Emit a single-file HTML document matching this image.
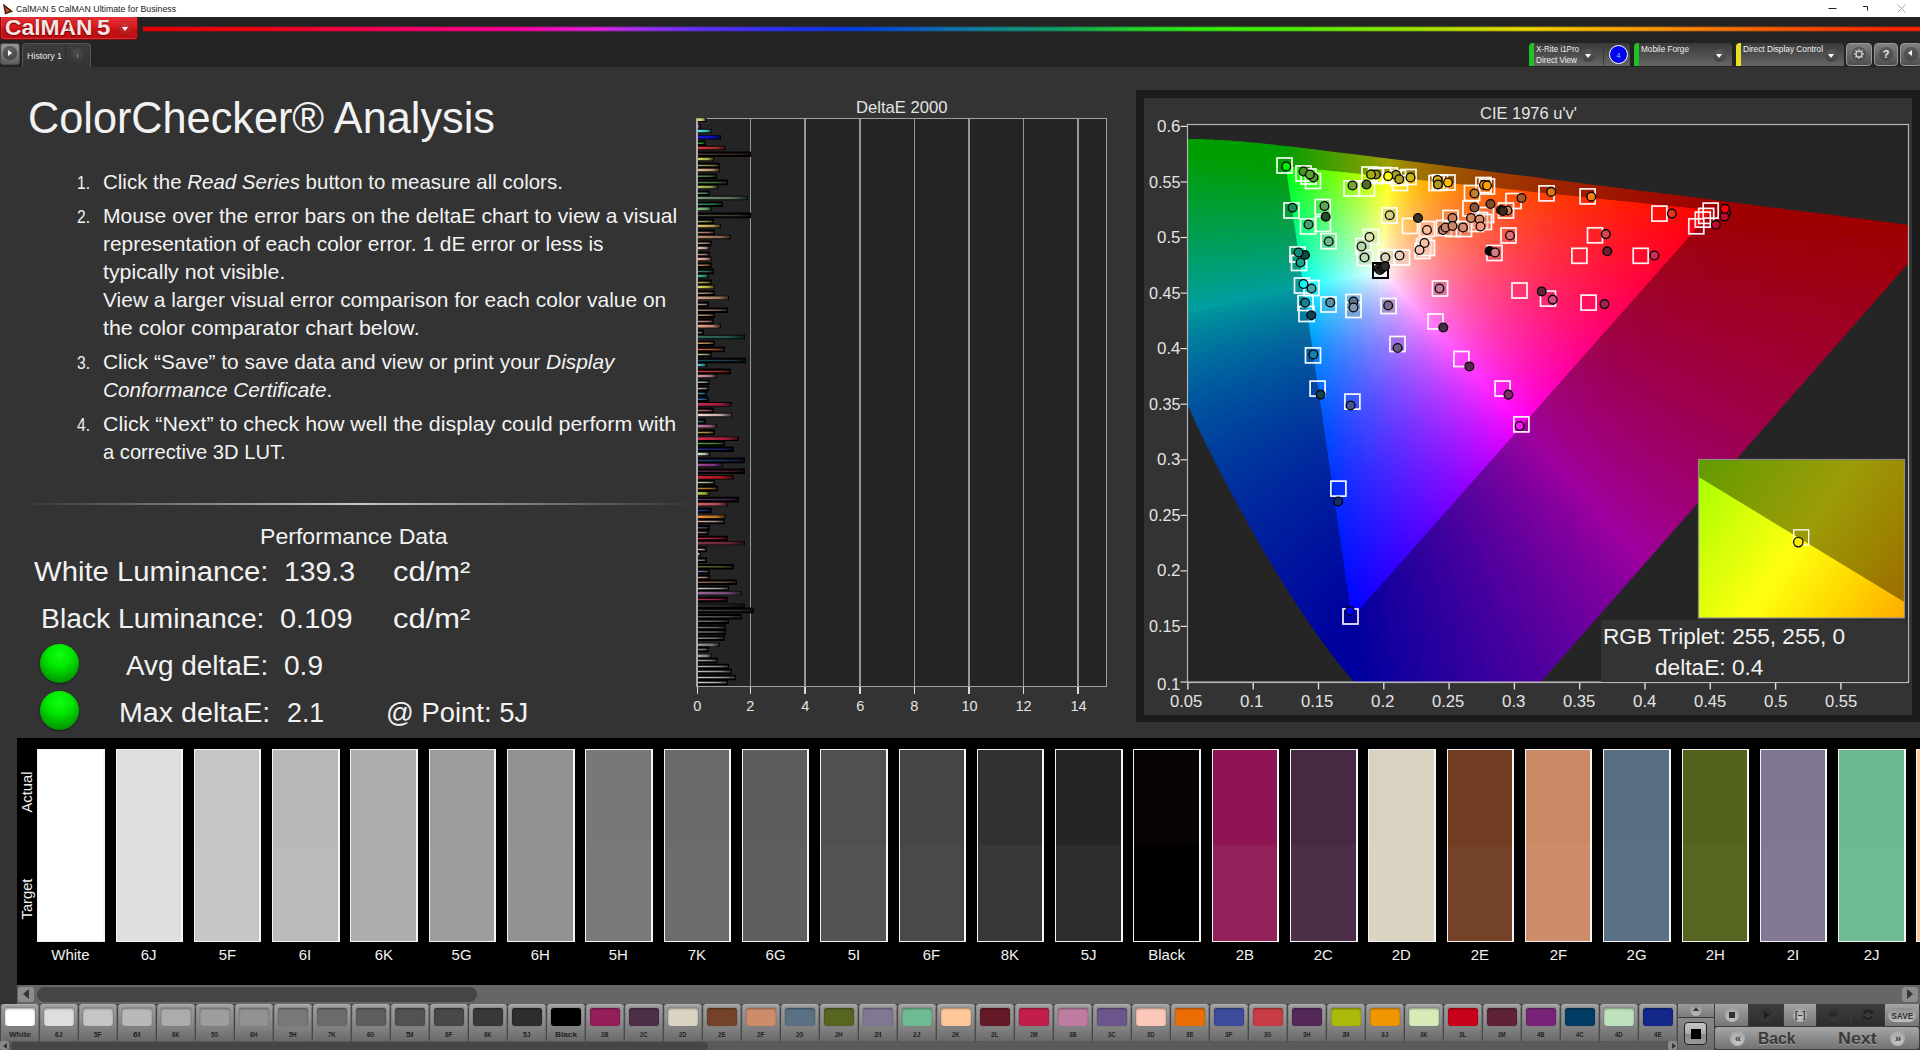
<!DOCTYPE html>
<html lang="en"><head><meta charset="utf-8"><title>CalMAN 5 CalMAN Ultimate for Business</title>
<style>
*{box-sizing:border-box;margin:0;padding:0}
html,body{width:1920px;height:1050px;overflow:hidden;background:#333;font-family:"Liberation Sans",sans-serif}
.a{position:absolute}
.t{position:absolute;white-space:nowrap;line-height:1;transform-origin:0 0}
#titlebar{left:0;top:0;width:1920px;height:17px;background:#fff}
#band{left:0;top:17px;width:1920px;height:50px;background:#232323}
#logo{left:0;top:17px;width:138px;height:23px;border-radius:0 0 4px 4px;background:linear-gradient(#e23034 0%,#da1c20 45%,#c81216 55%,#bc0e12 100%);border:1px solid #7c0a0c;border-top:none;box-shadow:inset 0 -1px 0 rgba(255,120,120,.35),inset 1px 0 0 rgba(255,120,120,.25)}
#rainbow{left:143px;top:25.5px;width:1777px;height:6px;background:linear-gradient(90deg,#f00000 0%,#f80010 6%,#ff0060 14.5%,#ff00a0 21.2%,#e020e0 25.7%,#a030f0 28%,#6030ff 31.3%,#2030f0 37%,#0040e0 40.3%,#1070b0 45.4%,#108890 48.2%,#10a060 51.6%,#20d030 55.5%,#30f010 59.5%,#48f000 64%,#90e800 70.7%,#c0e000 74.1%,#f0d800 78%,#ffb000 82%,#ff8000 87.6%,#ff5000 93.2%,#ff2000 99%)}
#rainbow:after{content:"";position:absolute;left:0;top:0;width:100%;height:100%;background:linear-gradient(#232323 0%,rgba(35,35,35,0) 30%,rgba(35,35,35,0) 70%,#232323 100%)}
.btn{position:absolute;border-radius:4px;background:linear-gradient(#4a4a4a,#6e6e6e);border:1px solid #2a2a2a}
.dev{position:absolute;top:43px;height:23px;border-radius:4px 4px 0 0;background:linear-gradient(#3a3a3a 0%,#4c4c4c 45%,#666 100%);overflow:hidden}
.dev i{position:absolute;left:0;top:0;width:5px;height:100%}
.dd{position:absolute;width:13px;height:13px;border-radius:50%;background:radial-gradient(circle at 50% 25%,#585858,#3e3e3e)}
.dd:after{content:"";position:absolute;left:3px;top:5px;border:3.5px solid transparent;border-top:4px solid #fff;border-bottom:none}
</style></head>
<body>
<div id="titlebar" class="a"></div>
<svg class="a" style="left:2px;top:3px" width="12" height="12" viewBox="0 0 12 12"><polygon points="1,0.5 11,8.5 3,11.5" fill="#4a1c10"/>
<polygon points="3,4 8,8 4,9.5" fill="#c8501c"/></svg>
<div class="t" style="left:16.0px;top:5.0px;font-size:9px;color:#222;transform:scaleX(0.9724);">CalMAN 5 CalMAN Ultimate for Business</div>
<svg class="a" style="left:1820px;top:0" width="100" height="17" viewBox="0 0 100 17"><path d="M8.5 8.5h8" stroke="#222" stroke-width="1" fill="none"/><path d="M43 6.5h4.5v4" stroke="#222" stroke-width="1" fill="none"/><path d="M77.5 4.5l8 8m0-8l-8 8" stroke="#aaa" stroke-width="1" fill="none"/></svg>
<div id="band" class="a"></div>
<div id="logo" class="a"></div>
<div class="t" style="left:4.6px;top:18.0px;font-size:21.5px;color:#f4e4e4;transform:scaleX(1.0604);text-shadow:0 1px 1px #700,0 0 2px #900"><span style="font-weight:bold;">CalMAN</span></div>
<div class="t" style="left:96.7px;top:18.0px;font-size:21.5px;color:#f4e4e4;transform:scaleX(1.1123);text-shadow:0 1px 1px #700"><span style="font-weight:bold;">5</span></div>
<div class="a" style="left:117.6px;top:20.5px;width:14px;height:14px;border-radius:50%;background:radial-gradient(circle at 50% 30%,#d83838,#a40e14)"></div>
<div class="a" style="left:121.5px;top:27px;border:3.5px solid transparent;border-top:4px solid #fff;border-bottom:none"></div>
<svg class="a" style="left:64.5px;top:21.5px" width="6" height="9" viewBox="0 0 6 9"><circle cx="3.6" cy="1" r="0.9" fill="#8a1414"/><path d="M3.4 2.2L2.6 5M3.2 2.8L1.2 3.4M3.3 2.9L5 3.8M2.6 5L4.2 6.2L3.8 8.2M2.6 5L1.6 6.6L0.4 7" fill="none" stroke="#8a1414" stroke-width="0.8" stroke-linecap="round"/></svg>
<div id="rainbow" class="a"></div>
<div class="a" style="left:0;top:43px;width:20px;height:22px;border-radius:3px;background:linear-gradient(#969696,#5c5c5c);border:1px solid #4a4a4a"></div>
<div class="a" style="left:3px;top:46px;width:14px;height:14px;border-radius:50%;background:radial-gradient(circle at 50% 30%,#666,#3a3a3a)"></div>
<div class="a" style="left:8px;top:50.2px;border:3.5px solid transparent;border-left:4.6px solid #fff;border-right:none"></div>
<div class="a" style="left:22px;top:43px;width:69px;height:24px;border-radius:4px 4px 0 0;background:linear-gradient(#3d3d3d,#333);border:1px solid #555;border-bottom:none"></div>
<div class="a" style="left:65px;top:44px;width:1px;height:22px;background:#2c2c2c"></div>
<div class="t" style="left:27.0px;top:51.0px;font-size:9.5px;color:#e8e8e8;transform:scaleX(0.9338);">History 1</div>
<div class="a" style="left:70px;top:48px;width:14px;height:14px;border-radius:50%;background:radial-gradient(circle at 50% 30%,#4e4e4e,#333)"></div>
<div class="a" style="left:76.5px;top:54px;width:1px;height:4px;background:#888"></div>
<div class="dev" style="left:1529px;width:101px"><i style="background:#22c022"></i></div>
<div class="t" style="left:1536.0px;top:45.0px;font-size:8.5px;color:#f0f0f0;transform:scaleX(0.9384);">X-Rite i1Pro</div>
<div class="t" style="left:1536.0px;top:56.0px;font-size:8.5px;color:#f0f0f0;transform:scaleX(0.9573);">Direct View</div>
<div class="dd" style="left:1582px;top:48.5px"></div>
<div class="a" style="left:1603px;top:44px;width:1px;height:22px;background:#3a3a3a"></div>
<div class="a" style="left:1609px;top:45px;width:19px;height:19px;border-radius:50%;background:#0000f0;border:1px solid #fff"></div>
<div class="t" style="left:1616.5px;top:52.0px;font-size:7px;color:#9cf;">4</div>
<div class="dev" style="left:1634px;width:98px"><i style="background:#22c022"></i></div>
<div class="t" style="left:1641.0px;top:45.0px;font-size:8.5px;color:#f0f0f0;transform:scaleX(0.9676);">Mobile Forge</div>
<div class="dd" style="left:1713px;top:48.5px"></div>
<div class="dev" style="left:1736px;width:108px"><i style="background:#e8e020"></i></div>
<div class="t" style="left:1743.0px;top:45.0px;font-size:8.5px;color:#f0f0f0;transform:scaleX(0.9733);">Direct Display Control</div>
<div class="dd" style="left:1825px;top:48.5px"></div>
<div class="a" style="left:1846px;top:43px;width:26px;height:23px;border-radius:4px;background:linear-gradient(#808080,#4e4e4e);border:1px solid #9a9a9a"></div>
<div class="a" style="left:1874px;top:43px;width:24px;height:23px;border-radius:4px;background:linear-gradient(#808080,#4e4e4e);border:1px solid #9a9a9a"></div>
<div class="a" style="left:1900px;top:43px;width:22px;height:23px;border-radius:4px;background:linear-gradient(#808080,#4e4e4e);border:1px solid #9a9a9a"></div>
<div class="a" style="left:1851.5px;top:47px;width:14px;height:14px;border-radius:50%;background:radial-gradient(circle at 50% 25%,#5c5c5c,#444)"></div>
<div class="a" style="left:1878.5px;top:47px;width:14px;height:14px;border-radius:50%;background:radial-gradient(circle at 50% 25%,#5c5c5c,#444)"></div>
<div class="a" style="left:1903.5px;top:47px;width:14px;height:14px;border-radius:50%;background:radial-gradient(circle at 50% 25%,#5c5c5c,#444)"></div>
<svg class="a" style="left:1852.5px;top:48px" width="12" height="12" viewBox="-6 -6 12 12"><circle r="3" fill="none" stroke="#d6d6d6" stroke-width="1.25"/><g stroke="#d6d6d6" stroke-width="1.3"><line x1="0" y1="-3.5" x2="0" y2="-5.1" transform="rotate(0)"/><line x1="0" y1="-3.5" x2="0" y2="-5.1" transform="rotate(45)"/><line x1="0" y1="-3.5" x2="0" y2="-5.1" transform="rotate(90)"/><line x1="0" y1="-3.5" x2="0" y2="-5.1" transform="rotate(135)"/><line x1="0" y1="-3.5" x2="0" y2="-5.1" transform="rotate(180)"/><line x1="0" y1="-3.5" x2="0" y2="-5.1" transform="rotate(225)"/><line x1="0" y1="-3.5" x2="0" y2="-5.1" transform="rotate(270)"/><line x1="0" y1="-3.5" x2="0" y2="-5.1" transform="rotate(315)"/></g></svg>
<div class="t" style="left:1882.7px;top:49.0px;font-size:11px;color:#e8e8e8;"><span style="font-weight:bold;">?</span></div>
<div class="a" style="left:1907.5px;top:50.4px;border:3.7px solid transparent;border-right:4.8px solid #f4f4f4;border-left:none"></div>
<div class="t" style="left:28.0px;top:96.0px;font-size:44.7px;color:#f2f2f2;transform:scaleX(0.9677);">ColorChecker® Analysis</div>
<div class="t" style="left:103.3px;top:172.0px;font-size:20.6px;color:#f2f2f2;transform:scaleX(0.9944);">Click the <span style="font-style:italic;">Read Series</span> button to measure all colors.</div>
<div class="t" style="left:103.3px;top:206.0px;font-size:20.6px;color:#f2f2f2;transform:scaleX(1.0237);">Mouse over the error bars on the deltaE chart to view a visual</div>
<div class="t" style="left:103.3px;top:234.0px;font-size:20.6px;color:#f2f2f2;transform:scaleX(1.0146);">representation of each color error. 1 dE error or less is</div>
<div class="t" style="left:103.3px;top:262.0px;font-size:20.6px;color:#f2f2f2;transform:scaleX(1.0345);">typically not visible.</div>
<div class="t" style="left:103.3px;top:290.0px;font-size:20.6px;color:#f2f2f2;transform:scaleX(1.0173);">View a larger visual error comparison for each color value on</div>
<div class="t" style="left:103.3px;top:318.0px;font-size:20.6px;color:#f2f2f2;transform:scaleX(1.0398);">the color comparator chart below.</div>
<div class="t" style="left:103.3px;top:352.0px;font-size:20.6px;color:#f2f2f2;transform:scaleX(1.0134);">Click “Save” to save data and view or print your <span style="font-style:italic;">Display</span></div>
<div class="t" style="left:103.3px;top:380.0px;font-size:20.6px;color:#f2f2f2;transform:scaleX(1.0068);"><span style="font-style:italic;">Conformance Certificate</span>.</div>
<div class="t" style="left:103.3px;top:414.0px;font-size:20.6px;color:#f2f2f2;transform:scaleX(1.0391);">Click “Next” to check how well the display could perform with</div>
<div class="t" style="left:103.3px;top:442.0px;font-size:20.6px;color:#f2f2f2;transform:scaleX(0.979);">a corrective 3D LUT.</div>
<div class="t" style="left:77.0px;top:175.0px;font-size:17.5px;color:#f2f2f2;transform:scaleX(0.8907);">1.</div>
<div class="t" style="left:77.0px;top:209.0px;font-size:17.5px;color:#f2f2f2;transform:scaleX(0.8907);">2.</div>
<div class="t" style="left:77.0px;top:355.0px;font-size:17.5px;color:#f2f2f2;transform:scaleX(0.8907);">3.</div>
<div class="t" style="left:77.0px;top:417.0px;font-size:17.5px;color:#f2f2f2;transform:scaleX(0.8907);">4.</div>
<div class="a" style="left:20px;top:503px;width:676px;height:2px;background:linear-gradient(90deg,rgba(140,140,140,0),rgba(150,150,150,.9) 30%,#c8c8c8 50%,rgba(150,150,150,.9) 70%,rgba(140,140,140,0))"></div>
<div class="t" style="left:259.6px;top:526.0px;font-size:22px;color:#f2f2f2;transform:scaleX(1.0502);">Performance Data</div>
<div class="t" style="left:33.5px;top:559.0px;font-size:27px;color:#f2f2f2;transform:scaleX(1.0851);">White Luminance:</div>
<div class="t" style="left:284.4px;top:559.0px;font-size:27px;color:#f2f2f2;transform:scaleX(1.0508);">139.3</div>
<div class="t" style="left:393.0px;top:559.0px;font-size:27px;color:#f2f2f2;transform:scaleX(1.1452);">cd/m²</div>
<div class="t" style="left:40.8px;top:606.0px;font-size:27px;color:#f2f2f2;transform:scaleX(1.0487);">Black Luminance:</div>
<div class="t" style="left:280.0px;top:606.0px;font-size:27px;color:#f2f2f2;transform:scaleX(1.073);">0.109</div>
<div class="t" style="left:393.0px;top:606.0px;font-size:27px;color:#f2f2f2;transform:scaleX(1.1452);">cd/m²</div>
<div class="t" style="left:125.8px;top:653.0px;font-size:27px;color:#f2f2f2;transform:scaleX(1.0334);">Avg deltaE:</div>
<div class="t" style="left:284.4px;top:653.0px;font-size:27px;color:#f2f2f2;transform:scaleX(1.039);">0.9</div>
<div class="t" style="left:119.2px;top:700.0px;font-size:27px;color:#f2f2f2;transform:scaleX(1.0612);">Max deltaE:</div>
<div class="t" style="left:287.3px;top:700.0px;font-size:27px;color:#f2f2f2;transform:scaleX(0.9911);">2.1</div>
<div class="t" style="left:386.4px;top:700.0px;font-size:27px;color:#f2f2f2;transform:scaleX(1.0159);">@ Point: 5J</div>
<div class="a" style="left:39.9px;top:643.9px;width:39px;height:39px;border-radius:50%;background:radial-gradient(circle at 50% 28%,#10ff10 0%,#00e800 35%,#00a800 70%,#007800 100%);box-shadow:0 1px 2px rgba(0,0,0,.5)"></div>
<div class="a" style="left:39.9px;top:690.9px;width:39px;height:39px;border-radius:50%;background:radial-gradient(circle at 50% 28%,#10ff10 0%,#00e800 35%,#00a800 70%,#007800 100%);box-shadow:0 1px 2px rgba(0,0,0,.5)"></div>
<div class="a" style="left:696px;top:118px;width:411px;height:569px;background:#242424;border:1px solid #a0a0a0;border-left:2px solid #ababab"></div>
<div class="a" style="left:749.95px;top:119px;width:1.5px;height:567px;background:#969696"></div>
<div class="a" style="left:804.45px;top:119px;width:1.5px;height:567px;background:#969696"></div>
<div class="a" style="left:859.25px;top:119px;width:1.5px;height:567px;background:#969696"></div>
<div class="a" style="left:913.85px;top:119px;width:1.5px;height:567px;background:#969696"></div>
<div class="a" style="left:968.45px;top:119px;width:1.5px;height:567px;background:#969696"></div>
<div class="a" style="left:1022.65px;top:119px;width:1.5px;height:567px;background:#969696"></div>
<div class="a" style="left:1077.05px;top:119px;width:1.5px;height:567px;background:#969696"></div>
<div class="a" style="left:696.75px;top:687px;width:1.5px;height:7px;background:#ddd"></div>
<div class="t" style="left:693.2px;top:698.0px;font-size:15.3px;color:#e4e4e4;transform:scaleX(.95);transform-origin:50% 0;">0</div>
<div class="a" style="left:749.95px;top:687px;width:1.5px;height:7px;background:#ddd"></div>
<div class="t" style="left:746.4px;top:698.0px;font-size:15.3px;color:#e4e4e4;transform:scaleX(.95);transform-origin:50% 0;">2</div>
<div class="a" style="left:804.45px;top:687px;width:1.5px;height:7px;background:#ddd"></div>
<div class="t" style="left:800.9px;top:698.0px;font-size:15.3px;color:#e4e4e4;transform:scaleX(.95);transform-origin:50% 0;">4</div>
<div class="a" style="left:859.25px;top:687px;width:1.5px;height:7px;background:#ddd"></div>
<div class="t" style="left:855.7px;top:698.0px;font-size:15.3px;color:#e4e4e4;transform:scaleX(.95);transform-origin:50% 0;">6</div>
<div class="a" style="left:913.85px;top:687px;width:1.5px;height:7px;background:#ddd"></div>
<div class="t" style="left:910.3px;top:698.0px;font-size:15.3px;color:#e4e4e4;transform:scaleX(.95);transform-origin:50% 0;">8</div>
<div class="a" style="left:968.45px;top:687px;width:1.5px;height:7px;background:#ddd"></div>
<div class="t" style="left:961.2px;top:698.0px;font-size:15.3px;color:#e4e4e4;transform:scaleX(.95);transform-origin:50% 0;">10</div>
<div class="a" style="left:1022.65px;top:687px;width:1.5px;height:7px;background:#ddd"></div>
<div class="t" style="left:1015.4px;top:698.0px;font-size:15.3px;color:#e4e4e4;transform:scaleX(.95);transform-origin:50% 0;">12</div>
<div class="a" style="left:1077.05px;top:687px;width:1.5px;height:7px;background:#ddd"></div>
<div class="t" style="left:1069.8px;top:698.0px;font-size:15.3px;color:#e4e4e4;transform:scaleX(.95);transform-origin:50% 0;">14</div>
<div class="t" style="left:855.8px;top:99.0px;font-size:16.2px;color:#e4e4e4;transform:scaleX(1.0262);">DeltaE 2000</div>
<svg class="a" style="left:698px;top:118px" width="70" height="568" viewBox="698 118 70 568"><defs><linearGradient id="fade" x1="0" x2="1" y1="0" y2="0"><stop offset="0" stop-color="#000" stop-opacity="0"/><stop offset=".7" stop-color="#000" stop-opacity=".25"/><stop offset="1" stop-color="#000" stop-opacity=".75"/></linearGradient>
</defs><rect x="698" y="117.5" width="8.5" height="4.4" rx="0.8" fill="#000"/><rect x="698" y="118.35" width="7.2" height="2.7" rx="0.6" fill="rgb(240,235,130)" opacity="1"/><rect x="698" y="118.25" width="7.2" height="2.9000000000000004" fill="url(#fade)"/><rect x="698" y="124.1" width="2.8" height="4.4" rx="0.8" fill="#000"/><rect x="698" y="124.95" width="1.5" height="2.7" rx="0.6" fill="rgb(200,50,200)" opacity="1"/><rect x="698" y="124.85" width="1.5" height="2.9000000000000004" fill="url(#fade)"/><rect x="698" y="128.8" width="13.8" height="4.4" rx="0.8" fill="#000"/><rect x="698" y="129.65" width="12.5" height="2.7" rx="0.6" fill="rgb(90,235,235)" opacity="1"/><rect x="698" y="129.55" width="12.5" height="2.9000000000000004" fill="url(#fade)"/><rect x="698" y="135.00" width="23.0" height="4.4" rx="0.8" fill="#000"/><rect x="698" y="135.85" width="21.7" height="2.7" rx="0.6" fill="rgb(20,20,230)" opacity="1"/><rect x="698" y="135.75" width="21.7" height="2.9000000000000004" fill="url(#fade)"/><rect x="698" y="140.5" width="7.7" height="5.6" rx="0.8" fill="#000"/><rect x="698" y="142.55" width="6.4" height="1.5" rx="0.6" fill="rgb(60,200,60)" opacity="0.85"/><rect x="698" y="142.45" width="6.4" height="1.7" fill="url(#fade)"/><rect x="698" y="145.8" width="27.9" height="4.4" rx="0.8" fill="#000"/><rect x="698" y="146.65" width="26.6" height="2.7" rx="0.6" fill="rgb(210,60,60)" opacity="1"/><rect x="698" y="146.55" width="26.6" height="2.9000000000000004" fill="url(#fade)"/><rect x="698" y="151.5" width="53.0" height="5.6" rx="0.8" fill="#000"/><rect x="698" y="153.55" width="51.7" height="1.5" rx="0.6" fill="rgb(90,60,50)" opacity="0.85"/><rect x="698" y="153.45" width="51.7" height="1.7" fill="url(#fade)"/><rect x="698" y="156.8" width="15.9" height="4.4" rx="0.8" fill="#000"/><rect x="698" y="157.65" width="14.6" height="2.7" rx="0.6" fill="rgb(215,215,90)" opacity="1"/><rect x="698" y="157.55" width="14.6" height="2.9000000000000004" fill="url(#fade)"/><rect x="698" y="162.6" width="21.8" height="5.6" rx="0.8" fill="#000"/><rect x="698" y="164.65" width="20.5" height="1.5" rx="0.6" fill="rgb(200,180,110)" opacity="0.85"/><rect x="698" y="164.55" width="20.5" height="1.7" fill="url(#fade)"/><rect x="698" y="167.8" width="21.8" height="4.4" rx="0.8" fill="#000"/><rect x="698" y="168.65" width="20.5" height="2.7" rx="0.6" fill="rgb(235,190,150)" opacity="1"/><rect x="698" y="168.55" width="20.5" height="2.9000000000000004" fill="url(#fade)"/><rect x="698" y="173.5" width="18.9" height="5.6" rx="0.8" fill="#000"/><rect x="698" y="175.55" width="17.6" height="1.5" rx="0.6" fill="rgb(100,170,90)" opacity="0.85"/><rect x="698" y="175.45" width="17.6" height="1.7" fill="url(#fade)"/><rect x="698" y="179.6" width="30.0" height="5.6" rx="0.8" fill="#000"/><rect x="698" y="181.65" width="28.7" height="1.5" rx="0.6" fill="rgb(90,160,80)" opacity="0.85"/><rect x="698" y="181.55" width="28.7" height="1.7" fill="url(#fade)"/><rect x="698" y="184.8" width="19.9" height="4.4" rx="0.8" fill="#000"/><rect x="698" y="185.65" width="18.6" height="2.7" rx="0.6" fill="rgb(180,200,100)" opacity="1"/><rect x="698" y="185.55" width="18.6" height="2.9000000000000004" fill="url(#fade)"/><rect x="698" y="190.5" width="11.9" height="5.6" rx="0.8" fill="#000"/><rect x="698" y="192.55" width="10.6" height="1.5" rx="0.6" fill="rgb(110,190,150)" opacity="0.85"/><rect x="698" y="192.45" width="10.6" height="1.7" fill="url(#fade)"/><rect x="698" y="195.8" width="49.8" height="4.4" rx="0.8" fill="#000"/><rect x="698" y="196.65" width="48.5" height="2.7" rx="0.6" fill="rgb(120,150,120)" opacity="1"/><rect x="698" y="196.55" width="48.5" height="2.9000000000000004" fill="url(#fade)"/><rect x="698" y="201.5" width="24.9" height="5.6" rx="0.8" fill="#000"/><rect x="698" y="203.55" width="23.6" height="1.5" rx="0.6" fill="rgb(60,170,110)" opacity="0.85"/><rect x="698" y="203.45" width="23.6" height="1.7" fill="url(#fade)"/><rect x="698" y="206.7" width="13.8" height="4.4" rx="0.8" fill="#000"/><rect x="698" y="207.55" width="12.5" height="2.7" rx="0.6" fill="rgb(130,200,140)" opacity="1"/><rect x="698" y="207.45" width="12.5" height="2.9000000000000004" fill="url(#fade)"/><rect x="698" y="212.6" width="53.0" height="5.6" rx="0.8" fill="#000"/><rect x="698" y="214.65" width="51.7" height="1.5" rx="0.6" fill="rgb(100,90,75)" opacity="0.85"/><rect x="698" y="214.55" width="51.7" height="1.7" fill="url(#fade)"/><rect x="698" y="218.6" width="15.9" height="5.6" rx="0.8" fill="#000"/><rect x="698" y="220.65" width="14.6" height="1.5" rx="0.6" fill="rgb(210,200,100)" opacity="0.85"/><rect x="698" y="220.55" width="14.6" height="1.7" fill="url(#fade)"/><rect x="698" y="223.8" width="22.8" height="4.4" rx="0.8" fill="#000"/><rect x="698" y="224.65" width="21.5" height="2.7" rx="0.6" fill="rgb(230,200,110)" opacity="1"/><rect x="698" y="224.55" width="21.5" height="2.9000000000000004" fill="url(#fade)"/><rect x="698" y="229.6" width="16.9" height="5.6" rx="0.8" fill="#000"/><rect x="698" y="231.65" width="15.6" height="1.5" rx="0.6" fill="rgb(230,160,140)" opacity="0.85"/><rect x="698" y="231.55" width="15.6" height="1.7" fill="url(#fade)"/><rect x="698" y="234.8" width="32.9" height="4.4" rx="0.8" fill="#000"/><rect x="698" y="235.65" width="31.6" height="2.7" rx="0.6" fill="rgb(190,140,110)" opacity="1"/><rect x="698" y="235.55" width="31.6" height="2.9000000000000004" fill="url(#fade)"/><rect x="698" y="240.5" width="13.8" height="5.6" rx="0.8" fill="#000"/><rect x="698" y="242.55" width="12.5" height="1.5" rx="0.6" fill="rgb(240,190,170)" opacity="0.85"/><rect x="698" y="242.45" width="12.5" height="1.7" fill="url(#fade)"/><rect x="698" y="245.8" width="11.7" height="4.4" rx="0.8" fill="#000"/><rect x="698" y="246.65" width="10.4" height="2.7" rx="0.6" fill="rgb(235,200,190)" opacity="1"/><rect x="698" y="246.55" width="10.4" height="2.9000000000000004" fill="url(#fade)"/><rect x="698" y="251.6" width="11.7" height="5.6" rx="0.8" fill="#000"/><rect x="698" y="253.65" width="10.4" height="1.5" rx="0.6" fill="rgb(230,180,165)" opacity="0.85"/><rect x="698" y="253.55" width="10.4" height="1.7" fill="url(#fade)"/><rect x="698" y="256.8" width="13.8" height="4.4" rx="0.8" fill="#000"/><rect x="698" y="257.65" width="12.5" height="2.7" rx="0.6" fill="rgb(250,180,160)" opacity="1"/><rect x="698" y="257.55" width="12.5" height="2.9000000000000004" fill="url(#fade)"/><rect x="698" y="262.5" width="13.8" height="5.6" rx="0.8" fill="#000"/><rect x="698" y="264.55" width="12.5" height="1.5" rx="0.6" fill="rgb(220,150,110)" opacity="0.85"/><rect x="698" y="264.45" width="12.5" height="1.7" fill="url(#fade)"/><rect x="698" y="268.6" width="15.9" height="5.6" rx="0.8" fill="#000"/><rect x="698" y="270.65" width="14.6" height="1.5" rx="0.6" fill="rgb(60,160,130)" opacity="0.85"/><rect x="698" y="270.55" width="14.6" height="1.7" fill="url(#fade)"/><rect x="698" y="273.8" width="10.8" height="4.4" rx="0.8" fill="#000"/><rect x="698" y="274.65" width="9.5" height="2.7" rx="0.6" fill="rgb(70,180,160)" opacity="1"/><rect x="698" y="274.55" width="9.5" height="2.9000000000000004" fill="url(#fade)"/><rect x="698" y="279.6" width="13.8" height="5.6" rx="0.8" fill="#000"/><rect x="698" y="281.65" width="12.5" height="1.5" rx="0.6" fill="rgb(240,200,100)" opacity="0.85"/><rect x="698" y="281.55" width="12.5" height="1.7" fill="url(#fade)"/><rect x="698" y="284.8" width="16.9" height="4.4" rx="0.8" fill="#000"/><rect x="698" y="285.65" width="15.6" height="2.7" rx="0.6" fill="rgb(230,215,80)" opacity="1"/><rect x="698" y="285.55" width="15.6" height="2.9000000000000004" fill="url(#fade)"/><rect x="698" y="290.5" width="16.9" height="5.6" rx="0.8" fill="#000"/><rect x="698" y="292.55" width="15.6" height="1.5" rx="0.6" fill="rgb(230,170,150)" opacity="0.85"/><rect x="698" y="292.45" width="15.6" height="1.7" fill="url(#fade)"/><rect x="698" y="295.7" width="31.0" height="4.4" rx="0.8" fill="#000"/><rect x="698" y="296.55" width="29.7" height="2.7" rx="0.6" fill="rgb(210,160,130)" opacity="1"/><rect x="698" y="296.45" width="29.7" height="2.9000000000000004" fill="url(#fade)"/><rect x="698" y="301.6" width="10.9" height="5.6" rx="0.8" fill="#000"/><rect x="698" y="303.65" width="9.6" height="1.5" rx="0.6" fill="rgb(230,180,170)" opacity="0.85"/><rect x="698" y="303.55" width="9.6" height="1.7" fill="url(#fade)"/><rect x="698" y="307.5" width="30.0" height="5.6" rx="0.8" fill="#000"/><rect x="698" y="309.55" width="28.7" height="1.5" rx="0.6" fill="rgb(200,150,120)" opacity="0.85"/><rect x="698" y="309.45" width="28.7" height="1.7" fill="url(#fade)"/><rect x="698" y="312.4" width="16.9" height="5.6" rx="0.8" fill="#000"/><rect x="698" y="314.45" width="15.6" height="1.5" rx="0.6" fill="rgb(220,170,130)" opacity="0.85"/><rect x="698" y="314.35" width="15.6" height="1.7" fill="url(#fade)"/><rect x="698" y="318.6" width="15.9" height="5.6" rx="0.8" fill="#000"/><rect x="698" y="320.65" width="14.6" height="1.5" rx="0.6" fill="rgb(240,180,165)" opacity="0.85"/><rect x="698" y="320.55" width="14.6" height="1.7" fill="url(#fade)"/><rect x="698" y="323.9" width="22.8" height="4.4" rx="0.8" fill="#000"/><rect x="698" y="324.75" width="21.5" height="2.7" rx="0.6" fill="rgb(240,170,140)" opacity="1"/><rect x="698" y="324.65" width="21.5" height="2.9000000000000004" fill="url(#fade)"/><rect x="698" y="329.6" width="5.8" height="5.6" rx="0.8" fill="#000"/><rect x="698" y="331.65" width="4.5" height="1.5" rx="0.6" fill="rgb(130,150,200)" opacity="0.85"/><rect x="698" y="331.55" width="4.5" height="1.7" fill="url(#fade)"/><rect x="698" y="334.8" width="47.0" height="4.4" rx="0.8" fill="#000"/><rect x="698" y="335.65" width="45.7" height="2.7" rx="0.6" fill="rgb(50,110,100)" opacity="1"/><rect x="698" y="335.55" width="45.7" height="2.9000000000000004" fill="url(#fade)"/><rect x="698" y="340.5" width="16.9" height="5.6" rx="0.8" fill="#000"/><rect x="698" y="342.55" width="15.6" height="1.5" rx="0.6" fill="rgb(240,180,110)" opacity="0.85"/><rect x="698" y="342.45" width="15.6" height="1.7" fill="url(#fade)"/><rect x="698" y="346.6" width="26.9" height="5.6" rx="0.8" fill="#000"/><rect x="698" y="348.65" width="25.6" height="1.5" rx="0.6" fill="rgb(240,120,80)" opacity="0.85"/><rect x="698" y="348.55" width="25.6" height="1.7" fill="url(#fade)"/><rect x="698" y="351.6" width="13.8" height="5.6" rx="0.8" fill="#000"/><rect x="698" y="353.65" width="12.5" height="1.5" rx="0.6" fill="rgb(230,230,160)" opacity="0.85"/><rect x="698" y="353.55" width="12.5" height="1.7" fill="url(#fade)"/><rect x="698" y="357.7" width="47.9" height="5.6" rx="0.8" fill="#000"/><rect x="698" y="359.75" width="46.6" height="1.5" rx="0.6" fill="rgb(40,90,110)" opacity="0.85"/><rect x="698" y="359.65" width="46.6" height="1.7" fill="url(#fade)"/><rect x="698" y="362.8" width="8.9" height="4.4" rx="0.8" fill="#000"/><rect x="698" y="363.65" width="7.6" height="2.7" rx="0.6" fill="rgb(80,190,210)" opacity="1"/><rect x="698" y="363.55" width="7.6" height="2.9000000000000004" fill="url(#fade)"/><rect x="698" y="368.6" width="32.9" height="5.6" rx="0.8" fill="#000"/><rect x="698" y="370.65" width="31.6" height="1.5" rx="0.6" fill="rgb(230,70,70)" opacity="0.85"/><rect x="698" y="370.55" width="31.6" height="1.7" fill="url(#fade)"/><rect x="698" y="373.8" width="18.8" height="4.4" rx="0.8" fill="#000"/><rect x="698" y="374.65" width="17.5" height="2.7" rx="0.6" fill="rgb(220,160,160)" opacity="1"/><rect x="698" y="374.55" width="17.5" height="2.9000000000000004" fill="url(#fade)"/><rect x="698" y="379.5" width="11.9" height="5.6" rx="0.8" fill="#000"/><rect x="698" y="381.55" width="10.6" height="1.5" rx="0.6" fill="rgb(200,220,210)" opacity="0.85"/><rect x="698" y="381.45" width="10.6" height="1.7" fill="url(#fade)"/><rect x="698" y="385.7" width="10.9" height="5.6" rx="0.8" fill="#000"/><rect x="698" y="387.75" width="9.6" height="1.5" rx="0.6" fill="rgb(240,200,180)" opacity="0.85"/><rect x="698" y="387.65" width="9.6" height="1.7" fill="url(#fade)"/><rect x="698" y="390.6" width="8.9" height="5.6" rx="0.8" fill="#000"/><rect x="698" y="392.65" width="7.6" height="1.5" rx="0.6" fill="rgb(90,160,200)" opacity="0.85"/><rect x="698" y="392.55" width="7.6" height="1.7" fill="url(#fade)"/><rect x="698" y="396.5" width="10.8" height="5.6" rx="0.8" fill="#000"/><rect x="698" y="398.55" width="9.5" height="1.5" rx="0.6" fill="rgb(50,130,200)" opacity="0.85"/><rect x="698" y="398.45" width="9.5" height="1.7" fill="url(#fade)"/><rect x="698" y="402.1" width="33.8" height="4.4" rx="0.8" fill="#000"/><rect x="698" y="402.95" width="32.5" height="2.7" rx="0.6" fill="rgb(200,40,80)" opacity="1"/><rect x="698" y="402.85" width="32.5" height="2.9000000000000004" fill="url(#fade)"/><rect x="698" y="407.6" width="15.9" height="5.6" rx="0.8" fill="#000"/><rect x="698" y="409.65" width="14.6" height="1.5" rx="0.6" fill="rgb(220,130,140)" opacity="0.85"/><rect x="698" y="409.55" width="14.6" height="1.7" fill="url(#fade)"/><rect x="698" y="412.8" width="33.8" height="4.4" rx="0.8" fill="#000"/><rect x="698" y="413.65" width="32.5" height="2.7" rx="0.6" fill="rgb(250,220,215)" opacity="1"/><rect x="698" y="413.55" width="32.5" height="2.9000000000000004" fill="url(#fade)"/><rect x="698" y="418.6" width="7.7" height="5.6" rx="0.8" fill="#000"/><rect x="698" y="420.65" width="6.4" height="1.5" rx="0.6" fill="rgb(50,140,160)" opacity="0.85"/><rect x="698" y="420.55" width="6.4" height="1.7" fill="url(#fade)"/><rect x="698" y="423.9" width="18.8" height="4.4" rx="0.8" fill="#000"/><rect x="698" y="424.75" width="17.5" height="2.7" rx="0.6" fill="rgb(200,120,160)" opacity="1"/><rect x="698" y="424.65" width="17.5" height="2.9000000000000004" fill="url(#fade)"/><rect x="698" y="429.6" width="16.9" height="5.6" rx="0.8" fill="#000"/><rect x="698" y="431.65" width="15.6" height="1.5" rx="0.6" fill="rgb(240,190,90)" opacity="0.85"/><rect x="698" y="431.55" width="15.6" height="1.7" fill="url(#fade)"/><rect x="698" y="436.5" width="40.9" height="4.4" rx="0.8" fill="#000"/><rect x="698" y="437.35" width="39.6" height="2.7" rx="0.6" fill="rgb(210,40,70)" opacity="1"/><rect x="698" y="437.25" width="39.6" height="2.9000000000000004" fill="url(#fade)"/><rect x="698" y="440.6" width="26.9" height="5.6" rx="0.8" fill="#000"/><rect x="698" y="442.65" width="25.6" height="1.5" rx="0.6" fill="rgb(110,180,90)" opacity="0.85"/><rect x="698" y="442.55" width="25.6" height="1.7" fill="url(#fade)"/><rect x="698" y="446.5" width="35.9" height="5.6" rx="0.8" fill="#000"/><rect x="698" y="448.55" width="34.6" height="1.5" rx="0.6" fill="rgb(40,50,150)" opacity="0.85"/><rect x="698" y="448.45" width="34.6" height="1.7" fill="url(#fade)"/><rect x="698" y="451.8" width="11.9" height="4.4" rx="0.8" fill="#000"/><rect x="698" y="452.65" width="10.6" height="2.7" rx="0.6" fill="rgb(220,240,220)" opacity="1"/><rect x="698" y="452.55" width="10.6" height="2.9000000000000004" fill="url(#fade)"/><rect x="698" y="457.6" width="47.0" height="5.6" rx="0.8" fill="#000"/><rect x="698" y="459.65" width="45.7" height="1.5" rx="0.6" fill="rgb(40,80,140)" opacity="0.85"/><rect x="698" y="459.55" width="45.7" height="1.7" fill="url(#fade)"/><rect x="698" y="462.8" width="24.9" height="4.4" rx="0.8" fill="#000"/><rect x="698" y="463.65" width="23.6" height="2.7" rx="0.6" fill="rgb(160,70,160)" opacity="1"/><rect x="698" y="463.55" width="23.6" height="2.9000000000000004" fill="url(#fade)"/><rect x="698" y="468.5" width="47.0" height="5.6" rx="0.8" fill="#000"/><rect x="698" y="470.55" width="45.7" height="1.5" rx="0.6" fill="rgb(100,40,70)" opacity="0.85"/><rect x="698" y="470.45" width="45.7" height="1.7" fill="url(#fade)"/><rect x="698" y="475.2" width="35.9" height="4.4" rx="0.8" fill="#000"/><rect x="698" y="476.05" width="34.6" height="2.7" rx="0.6" fill="rgb(210,30,40)" opacity="1"/><rect x="698" y="475.95" width="34.6" height="2.9000000000000004" fill="url(#fade)"/><rect x="698" y="479.7" width="16.9" height="5.6" rx="0.8" fill="#000"/><rect x="698" y="481.75" width="15.6" height="1.5" rx="0.6" fill="rgb(230,240,200)" opacity="0.85"/><rect x="698" y="481.65" width="15.6" height="1.7" fill="url(#fade)"/><rect x="698" y="485.6" width="19.9" height="5.6" rx="0.8" fill="#000"/><rect x="698" y="487.65" width="18.6" height="1.5" rx="0.6" fill="rgb(240,150,70)" opacity="0.85"/><rect x="698" y="487.55" width="18.6" height="1.7" fill="url(#fade)"/><rect x="698" y="491.2" width="11.9" height="4.4" rx="0.8" fill="#000"/><rect x="698" y="492.05" width="10.6" height="2.7" rx="0.6" fill="rgb(180,210,60)" opacity="1"/><rect x="698" y="491.95" width="10.6" height="2.9000000000000004" fill="url(#fade)"/><rect x="698" y="496.8" width="40.9" height="5.6" rx="0.8" fill="#000"/><rect x="698" y="498.85" width="39.6" height="1.5" rx="0.6" fill="rgb(110,60,120)" opacity="0.85"/><rect x="698" y="498.75" width="39.6" height="1.7" fill="url(#fade)"/><rect x="698" y="501.9" width="29.8" height="4.4" rx="0.8" fill="#000"/><rect x="698" y="502.75" width="28.5" height="2.7" rx="0.6" fill="rgb(220,100,110)" opacity="1"/><rect x="698" y="502.65" width="28.5" height="2.9000000000000004" fill="url(#fade)"/><rect x="698" y="507.7" width="13.8" height="5.6" rx="0.8" fill="#000"/><rect x="698" y="509.75" width="12.5" height="1.5" rx="0.6" fill="rgb(50,70,150)" opacity="0.85"/><rect x="698" y="509.65" width="12.5" height="1.7" fill="url(#fade)"/><rect x="698" y="514.7" width="27.9" height="4.4" rx="0.8" fill="#000"/><rect x="698" y="515.55" width="26.6" height="2.7" rx="0.6" fill="rgb(240,150,50)" opacity="1"/><rect x="698" y="515.45" width="26.6" height="2.9000000000000004" fill="url(#fade)"/><rect x="698" y="518.6" width="26.9" height="5.6" rx="0.8" fill="#000"/><rect x="698" y="520.65" width="25.6" height="1.5" rx="0.6" fill="rgb(250,210,200)" opacity="0.85"/><rect x="698" y="520.55" width="25.6" height="1.7" fill="url(#fade)"/><rect x="698" y="524.9" width="11.9" height="5.6" rx="0.8" fill="#000"/><rect x="698" y="526.95" width="10.6" height="1.5" rx="0.6" fill="rgb(100,90,140)" opacity="0.85"/><rect x="698" y="526.85" width="10.6" height="1.7" fill="url(#fade)"/><rect x="698" y="529.7" width="10.9" height="5.6" rx="0.8" fill="#000"/><rect x="698" y="531.75" width="9.6" height="1.5" rx="0.6" fill="rgb(190,140,160)" opacity="0.85"/><rect x="698" y="531.65" width="9.6" height="1.7" fill="url(#fade)"/><rect x="698" y="535.8" width="29.8" height="5.6" rx="0.8" fill="#000"/><rect x="698" y="537.85" width="28.5" height="1.5" rx="0.6" fill="rgb(220,50,80)" opacity="0.85"/><rect x="698" y="537.75" width="28.5" height="1.7" fill="url(#fade)"/><rect x="698" y="540.9" width="47.0" height="4.4" rx="0.8" fill="#000"/><rect x="698" y="541.75" width="45.7" height="2.7" rx="0.6" fill="rgb(130,50,70)" opacity="1"/><rect x="698" y="541.65" width="45.7" height="2.9000000000000004" fill="url(#fade)"/><rect x="698" y="546.6" width="8.9" height="5.6" rx="0.8" fill="#000"/><rect x="698" y="548.65" width="7.6" height="1.5" rx="0.6" fill="rgb(250,210,190)" opacity="0.85"/><rect x="698" y="548.55" width="7.6" height="1.7" fill="url(#fade)"/><rect x="698" y="551.8" width="2.8" height="4.4" rx="0.8" fill="#000"/><rect x="698" y="552.65" width="1.5" height="2.7" rx="0.6" fill="rgb(180,230,210)" opacity="1"/><rect x="698" y="552.55" width="1.5" height="2.9000000000000004" fill="url(#fade)"/><rect x="698" y="557.5" width="8.9" height="5.6" rx="0.8" fill="#000"/><rect x="698" y="559.55" width="7.6" height="1.5" rx="0.6" fill="rgb(160,150,180)" opacity="0.85"/><rect x="698" y="559.45" width="7.6" height="1.7" fill="url(#fade)"/><rect x="698" y="563.9" width="35.9" height="5.6" rx="0.8" fill="#000"/><rect x="698" y="565.95" width="34.6" height="1.5" rx="0.6" fill="rgb(110,130,60)" opacity="0.85"/><rect x="698" y="565.85" width="34.6" height="1.7" fill="url(#fade)"/><rect x="698" y="568.6" width="11.9" height="5.6" rx="0.8" fill="#000"/><rect x="698" y="570.65" width="10.6" height="1.5" rx="0.6" fill="rgb(120,150,190)" opacity="0.85"/><rect x="698" y="570.55" width="10.6" height="1.7" fill="url(#fade)"/><rect x="698" y="574.7" width="11.9" height="5.6" rx="0.8" fill="#000"/><rect x="698" y="576.75" width="10.6" height="1.5" rx="0.6" fill="rgb(240,180,150)" opacity="0.85"/><rect x="698" y="576.65" width="10.6" height="1.7" fill="url(#fade)"/><rect x="698" y="579.4" width="39.0" height="5.6" rx="0.8" fill="#000"/><rect x="698" y="581.45" width="37.7" height="1.5" rx="0.6" fill="rgb(170,110,90)" opacity="0.85"/><rect x="698" y="581.35" width="37.7" height="1.7" fill="url(#fade)"/><rect x="698" y="585.8" width="31.0" height="5.6" rx="0.8" fill="#000"/><rect x="698" y="587.85" width="29.7" height="1.5" rx="0.6" fill="rgb(240,240,230)" opacity="0.85"/><rect x="698" y="587.75" width="29.7" height="1.7" fill="url(#fade)"/><rect x="698" y="590.9" width="43.9" height="4.4" rx="0.8" fill="#000"/><rect x="698" y="591.75" width="42.6" height="2.7" rx="0.6" fill="rgb(150,100,150)" opacity="1"/><rect x="698" y="591.65" width="42.6" height="2.9000000000000004" fill="url(#fade)"/><rect x="698" y="596.7" width="30.0" height="5.6" rx="0.8" fill="#000"/><rect x="698" y="598.75" width="28.7" height="1.5" rx="0.6" fill="rgb(210,50,110)" opacity="0.85"/><rect x="698" y="598.65" width="28.7" height="1.7" fill="url(#fade)"/><rect x="698" y="603.5" width="47.0" height="4.4" rx="0.8" fill="#000"/><rect x="698" y="604.35" width="45.7" height="2.7" rx="0.6" fill="rgb(40,40,40)" opacity="1"/><rect x="698" y="604.25" width="45.7" height="2.9000000000000004" fill="url(#fade)"/><rect x="698" y="607.6" width="55.9" height="5.6" rx="0.8" fill="#000"/><rect x="698" y="609.65" width="54.6" height="1.5" rx="0.6" fill="rgb(80,80,80)" opacity="0.85"/><rect x="698" y="609.55" width="54.6" height="1.7" fill="url(#fade)"/><rect x="698" y="614.00" width="43.9" height="5.6" rx="0.8" fill="#000"/><rect x="698" y="616.05" width="42.6" height="1.5" rx="0.6" fill="rgb(110,110,110)" opacity="0.85"/><rect x="698" y="615.95" width="42.6" height="1.7" fill="url(#fade)"/><rect x="698" y="618.5" width="31.0" height="5.6" rx="0.8" fill="#000"/><rect x="698" y="620.55" width="29.7" height="1.5" rx="0.6" fill="rgb(130,130,130)" opacity="0.85"/><rect x="698" y="620.45" width="29.7" height="1.7" fill="url(#fade)"/><rect x="698" y="624.6" width="27.9" height="5.6" rx="0.8" fill="#000"/><rect x="698" y="626.65" width="26.6" height="1.5" rx="0.6" fill="rgb(140,140,140)" opacity="0.85"/><rect x="698" y="626.55" width="26.6" height="1.7" fill="url(#fade)"/><rect x="698" y="629.2" width="27.9" height="5.6" rx="0.8" fill="#000"/><rect x="698" y="631.25" width="26.6" height="1.5" rx="0.6" fill="rgb(140,140,140)" opacity="0.85"/><rect x="698" y="631.15" width="26.6" height="1.7" fill="url(#fade)"/><rect x="698" y="635.5" width="26.9" height="5.6" rx="0.8" fill="#000"/><rect x="698" y="637.55" width="25.6" height="1.5" rx="0.6" fill="rgb(160,160,160)" opacity="0.85"/><rect x="698" y="637.45" width="25.6" height="1.7" fill="url(#fade)"/><rect x="698" y="642.7" width="21.8" height="4.4" rx="0.8" fill="#000"/><rect x="698" y="643.55" width="20.5" height="2.7" rx="0.6" fill="rgb(150,150,150)" opacity="1"/><rect x="698" y="643.45" width="20.5" height="2.9000000000000004" fill="url(#fade)"/><rect x="698" y="646.6" width="10.9" height="5.6" rx="0.8" fill="#000"/><rect x="698" y="648.65" width="9.6" height="1.5" rx="0.6" fill="rgb(170,170,170)" opacity="0.85"/><rect x="698" y="648.55" width="9.6" height="1.7" fill="url(#fade)"/><rect x="698" y="653.7" width="13.8" height="4.4" rx="0.8" fill="#000"/><rect x="698" y="654.55" width="12.5" height="2.7" rx="0.6" fill="rgb(170,170,170)" opacity="1"/><rect x="698" y="654.45" width="12.5" height="2.9000000000000004" fill="url(#fade)"/><rect x="698" y="657.7" width="19.9" height="5.6" rx="0.8" fill="#000"/><rect x="698" y="659.75" width="18.6" height="1.5" rx="0.6" fill="rgb(200,200,200)" opacity="0.85"/><rect x="698" y="659.65" width="18.6" height="1.7" fill="url(#fade)"/><rect x="698" y="663.8" width="31.0" height="5.6" rx="0.8" fill="#000"/><rect x="698" y="665.85" width="29.7" height="1.5" rx="0.6" fill="rgb(210,210,210)" opacity="0.85"/><rect x="698" y="665.75" width="29.7" height="1.7" fill="url(#fade)"/><rect x="698" y="668.7" width="33.8" height="5.6" rx="0.8" fill="#000"/><rect x="698" y="670.75" width="32.5" height="1.5" rx="0.6" fill="rgb(225,225,225)" opacity="0.85"/><rect x="698" y="670.65" width="32.5" height="1.7" fill="url(#fade)"/><rect x="698" y="674.7" width="38.0" height="5.6" rx="0.8" fill="#000"/><rect x="698" y="676.75" width="36.7" height="1.5" rx="0.6" fill="rgb(235,235,235)" opacity="0.85"/><rect x="698" y="676.65" width="36.7" height="1.7" fill="url(#fade)"/><rect x="698" y="679.6" width="29.8" height="5.6" rx="0.8" fill="#000"/><rect x="698" y="681.65" width="28.5" height="1.5" rx="0.6" fill="rgb(250,250,250)" opacity="0.85"/><rect x="698" y="681.55" width="28.5" height="1.7" fill="url(#fade)"/></svg>
<div class="a" style="left:1136px;top:90px;width:784px;height:632px;background:#1b1b1b"></div>
<div class="a" style="left:1144px;top:98px;width:768px;height:617px;background:#333"></div>
<div class="t" style="left:1479.5px;top:105.0px;font-size:16.2px;color:#e4e4e4;transform:scaleX(1.0174);">CIE 1976 u'v'</div>
<svg class="a" style="left:1140px;top:110px" width="780" height="610" viewBox="1140 110 780 610"><defs><linearGradient id="cb0" gradientUnits="userSpaceOnUse" x1="1381.2" y1="271.3" x2="1654.3" y2="276.1"><stop offset="0" stop-color="#ffffff"/><stop offset="0.1" stop-color="#ffb4c2"/><stop offset="0.22" stop-color="#ff7e96"/><stop offset="0.4" stop-color="#ff4d6e"/><stop offset="0.6" stop-color="#ff2c54"/><stop offset="0.8" stop-color="#ff1443"/><stop offset="1" stop-color="#ff0037"/></linearGradient>
<linearGradient id="cd0" gradientUnits="userSpaceOnUse" x1="1631.5" y1="275.7" x2="1904.1" y2="280.4"><stop offset="0" stop-color="#9e0525"/><stop offset="0.25" stop-color="#9e001d"/><stop offset="0.5" stop-color="#9e0018"/><stop offset="0.75" stop-color="#9e0013"/><stop offset="1" stop-color="#9e0010"/></linearGradient>
<linearGradient id="cb1" gradientUnits="userSpaceOnUse" x1="1381.2" y1="271.3" x2="1646.2" y2="285.2"><stop offset="0" stop-color="#ffffff"/><stop offset="0.1" stop-color="#ffb6c5"/><stop offset="0.22" stop-color="#ff809b"/><stop offset="0.4" stop-color="#ff4f75"/><stop offset="0.6" stop-color="#ff2d5c"/><stop offset="0.8" stop-color="#ff154b"/><stop offset="1" stop-color="#ff003f"/></linearGradient>
<linearGradient id="cd1" gradientUnits="userSpaceOnUse" x1="1624.3" y1="284.0" x2="1888.3" y2="297.9"><stop offset="0" stop-color="#9e052a"/><stop offset="0.25" stop-color="#9e0022"/><stop offset="0.5" stop-color="#9e001d"/><stop offset="0.75" stop-color="#9e0019"/><stop offset="1" stop-color="#9e0016"/></linearGradient>
<linearGradient id="cb2" gradientUnits="userSpaceOnUse" x1="1381.2" y1="271.3" x2="1638.6" y2="293.8"><stop offset="0" stop-color="#ffffff"/><stop offset="0.1" stop-color="#ffb7c8"/><stop offset="0.22" stop-color="#ff82a0"/><stop offset="0.4" stop-color="#ff507b"/><stop offset="0.6" stop-color="#ff2d63"/><stop offset="0.8" stop-color="#ff1552"/><stop offset="1" stop-color="#ff0047"/></linearGradient>
<linearGradient id="cd2" gradientUnits="userSpaceOnUse" x1="1617.5" y1="292.0" x2="1873.4" y2="314.4"><stop offset="0" stop-color="#9e052f"/><stop offset="0.25" stop-color="#9e0027"/><stop offset="0.5" stop-color="#9e0022"/><stop offset="0.75" stop-color="#9e001e"/><stop offset="1" stop-color="#9e001b"/></linearGradient>
<linearGradient id="cb3" gradientUnits="userSpaceOnUse" x1="1381.2" y1="271.3" x2="1630.4" y2="303.0"><stop offset="0" stop-color="#ffffff"/><stop offset="0.1" stop-color="#ffb9cb"/><stop offset="0.22" stop-color="#ff83a5"/><stop offset="0.4" stop-color="#ff5282"/><stop offset="0.6" stop-color="#ff2e6a"/><stop offset="0.8" stop-color="#ff155b"/><stop offset="1" stop-color="#ff0050"/></linearGradient>
<linearGradient id="cd3" gradientUnits="userSpaceOnUse" x1="1609.6" y1="300.4" x2="1859.0" y2="332.1"><stop offset="0" stop-color="#9e0634"/><stop offset="0.25" stop-color="#9e002d"/><stop offset="0.5" stop-color="#9e0028"/><stop offset="0.75" stop-color="#9e0024"/><stop offset="1" stop-color="#9e0021"/></linearGradient>
<linearGradient id="cb4" gradientUnits="userSpaceOnUse" x1="1381.2" y1="271.3" x2="1622.7" y2="311.7"><stop offset="0" stop-color="#ffffff"/><stop offset="0.1" stop-color="#ffbacf"/><stop offset="0.22" stop-color="#ff85aa"/><stop offset="0.4" stop-color="#ff5389"/><stop offset="0.6" stop-color="#ff2f72"/><stop offset="0.8" stop-color="#ff1663"/><stop offset="1" stop-color="#ff0058"/></linearGradient>
<linearGradient id="cd4" gradientUnits="userSpaceOnUse" x1="1603.4" y1="308.5" x2="1842.6" y2="348.5"><stop offset="0" stop-color="#9e0639"/><stop offset="0.25" stop-color="#9e0032"/><stop offset="0.5" stop-color="#9e002d"/><stop offset="0.75" stop-color="#9e002a"/><stop offset="1" stop-color="#9e0027"/></linearGradient>
<linearGradient id="cb5" gradientUnits="userSpaceOnUse" x1="1381.2" y1="271.3" x2="1615.4" y2="320.0"><stop offset="0" stop-color="#ffffff"/><stop offset="0.1" stop-color="#ffbbd2"/><stop offset="0.22" stop-color="#ff87b0"/><stop offset="0.4" stop-color="#ff5590"/><stop offset="0.6" stop-color="#ff307a"/><stop offset="0.8" stop-color="#ff166b"/><stop offset="1" stop-color="#ff0061"/></linearGradient>
<linearGradient id="cd5" gradientUnits="userSpaceOnUse" x1="1596.4" y1="316.1" x2="1829.5" y2="364.5"><stop offset="0" stop-color="#9e063e"/><stop offset="0.25" stop-color="#9e0038"/><stop offset="0.5" stop-color="#9e0033"/><stop offset="0.75" stop-color="#9e002f"/><stop offset="1" stop-color="#9e002d"/></linearGradient>
<linearGradient id="cb6" gradientUnits="userSpaceOnUse" x1="1381.2" y1="271.3" x2="1608.4" y2="327.9"><stop offset="0" stop-color="#ffffff"/><stop offset="0.1" stop-color="#ffbdd5"/><stop offset="0.22" stop-color="#ff88b5"/><stop offset="0.4" stop-color="#ff5696"/><stop offset="0.6" stop-color="#ff3181"/><stop offset="0.8" stop-color="#ff1773"/><stop offset="1" stop-color="#ff0069"/></linearGradient>
<linearGradient id="cd6" gradientUnits="userSpaceOnUse" x1="1590.6" y1="323.5" x2="1814.7" y2="379.4"><stop offset="0" stop-color="#9e0643"/><stop offset="0.25" stop-color="#9e003d"/><stop offset="0.5" stop-color="#9e0039"/><stop offset="0.75" stop-color="#9e0035"/><stop offset="1" stop-color="#9e0033"/></linearGradient>
<linearGradient id="cb7" gradientUnits="userSpaceOnUse" x1="1381.2" y1="271.3" x2="1601.6" y2="335.6"><stop offset="0" stop-color="#ffffff"/><stop offset="0.1" stop-color="#ffbed8"/><stop offset="0.22" stop-color="#ff8aba"/><stop offset="0.4" stop-color="#ff579d"/><stop offset="0.6" stop-color="#ff3289"/><stop offset="0.8" stop-color="#ff177b"/><stop offset="1" stop-color="#ff0072"/></linearGradient>
<linearGradient id="cd7" gradientUnits="userSpaceOnUse" x1="1584.2" y1="330.5" x2="1802.5" y2="394.1"><stop offset="0" stop-color="#9e0649"/><stop offset="0.25" stop-color="#9e0043"/><stop offset="0.5" stop-color="#9e003e"/><stop offset="0.75" stop-color="#9e003b"/><stop offset="1" stop-color="#9e0038"/></linearGradient>
<linearGradient id="cb8" gradientUnits="userSpaceOnUse" x1="1381.2" y1="271.3" x2="1595.1" y2="342.9"><stop offset="0" stop-color="#ffffff"/><stop offset="0.1" stop-color="#ffbfdb"/><stop offset="0.22" stop-color="#ff8cbf"/><stop offset="0.4" stop-color="#ff59a3"/><stop offset="0.6" stop-color="#ff3390"/><stop offset="0.8" stop-color="#ff1883"/><stop offset="1" stop-color="#ff007a"/></linearGradient>
<linearGradient id="cd8" gradientUnits="userSpaceOnUse" x1="1578.7" y1="337.4" x2="1789.0" y2="407.8"><stop offset="0" stop-color="#9e064e"/><stop offset="0.25" stop-color="#9e0048"/><stop offset="0.5" stop-color="#9e0044"/><stop offset="0.75" stop-color="#9e0041"/><stop offset="1" stop-color="#9e003e"/></linearGradient>
<linearGradient id="cb9" gradientUnits="userSpaceOnUse" x1="1381.2" y1="271.3" x2="1589.5" y2="349.2"><stop offset="0" stop-color="#ffffff"/><stop offset="0.1" stop-color="#ffc0de"/><stop offset="0.22" stop-color="#ff8dc3"/><stop offset="0.4" stop-color="#ff5aa9"/><stop offset="0.6" stop-color="#ff3497"/><stop offset="0.8" stop-color="#ff188b"/><stop offset="1" stop-color="#ff0082"/></linearGradient>
<linearGradient id="cd9" gradientUnits="userSpaceOnUse" x1="1573.7" y1="343.3" x2="1778.2" y2="419.7"><stop offset="0" stop-color="#9e0652"/><stop offset="0.25" stop-color="#9e004d"/><stop offset="0.5" stop-color="#9e0049"/><stop offset="0.75" stop-color="#9e0046"/><stop offset="1" stop-color="#9e0043"/></linearGradient>
<linearGradient id="cb10" gradientUnits="userSpaceOnUse" x1="1381.2" y1="271.3" x2="1583.4" y2="356.1"><stop offset="0" stop-color="#ffffff"/><stop offset="0.1" stop-color="#ffc1e0"/><stop offset="0.22" stop-color="#ff8fc8"/><stop offset="0.4" stop-color="#ff5cb0"/><stop offset="0.6" stop-color="#ff359f"/><stop offset="0.8" stop-color="#ff1993"/><stop offset="1" stop-color="#ff008b"/></linearGradient>
<linearGradient id="cd10" gradientUnits="userSpaceOnUse" x1="1567.9" y1="349.6" x2="1766.9" y2="433.1"><stop offset="0" stop-color="#9e0658"/><stop offset="0.25" stop-color="#9e0052"/><stop offset="0.5" stop-color="#9e004f"/><stop offset="0.75" stop-color="#9e004c"/><stop offset="1" stop-color="#9e0049"/></linearGradient>
<linearGradient id="cb11" gradientUnits="userSpaceOnUse" x1="1381.2" y1="271.3" x2="1577.5" y2="362.8"><stop offset="0" stop-color="#ffffff"/><stop offset="0.1" stop-color="#ffc3e3"/><stop offset="0.22" stop-color="#ff90cc"/><stop offset="0.4" stop-color="#ff5db6"/><stop offset="0.6" stop-color="#ff36a6"/><stop offset="0.8" stop-color="#ff199b"/><stop offset="1" stop-color="#ff0093"/></linearGradient>
<linearGradient id="cd11" gradientUnits="userSpaceOnUse" x1="1562.8" y1="356.0" x2="1754.8" y2="445.5"><stop offset="0" stop-color="#9e065d"/><stop offset="0.25" stop-color="#9e0058"/><stop offset="0.5" stop-color="#9e0054"/><stop offset="0.75" stop-color="#9e0052"/><stop offset="1" stop-color="#9e0050"/></linearGradient>
<linearGradient id="cb12" gradientUnits="userSpaceOnUse" x1="1381.2" y1="271.3" x2="1572.3" y2="368.7"><stop offset="0" stop-color="#ffffff"/><stop offset="0.1" stop-color="#ffc4e6"/><stop offset="0.22" stop-color="#ff92d1"/><stop offset="0.4" stop-color="#ff5ebc"/><stop offset="0.6" stop-color="#ff37ad"/><stop offset="0.8" stop-color="#ff1aa3"/><stop offset="1" stop-color="#ff009b"/></linearGradient>
<linearGradient id="cd12" gradientUnits="userSpaceOnUse" x1="1558.2" y1="361.5" x2="1744.8" y2="456.6"><stop offset="0" stop-color="#9e0662"/><stop offset="0.25" stop-color="#9e005d"/><stop offset="0.5" stop-color="#9e005a"/><stop offset="0.75" stop-color="#9e0057"/><stop offset="1" stop-color="#9e0055"/></linearGradient>
<linearGradient id="cb13" gradientUnits="userSpaceOnUse" x1="1381.2" y1="271.3" x2="1567.2" y2="374.4"><stop offset="0" stop-color="#ffffff"/><stop offset="0.1" stop-color="#ffc5e8"/><stop offset="0.22" stop-color="#ff93d5"/><stop offset="0.4" stop-color="#ff60c2"/><stop offset="0.6" stop-color="#ff38b4"/><stop offset="0.8" stop-color="#ff1aab"/><stop offset="1" stop-color="#ff00a4"/></linearGradient>
<linearGradient id="cd13" gradientUnits="userSpaceOnUse" x1="1553.6" y1="366.9" x2="1735.0" y2="467.4"><stop offset="0" stop-color="#9e0667"/><stop offset="0.25" stop-color="#9e0063"/><stop offset="0.5" stop-color="#9e005f"/><stop offset="0.75" stop-color="#9e005d"/><stop offset="1" stop-color="#9e005b"/></linearGradient>
<linearGradient id="cb14" gradientUnits="userSpaceOnUse" x1="1381.2" y1="271.3" x2="1562.2" y2="380.1"><stop offset="0" stop-color="#ffffff"/><stop offset="0.1" stop-color="#ffc6eb"/><stop offset="0.22" stop-color="#ff94d9"/><stop offset="0.4" stop-color="#ff61c8"/><stop offset="0.6" stop-color="#ff39bb"/><stop offset="0.8" stop-color="#ff1bb2"/><stop offset="1" stop-color="#ff00ac"/></linearGradient>
<linearGradient id="cd14" gradientUnits="userSpaceOnUse" x1="1549.0" y1="372.2" x2="1725.3" y2="478.1"><stop offset="0" stop-color="#9e066c"/><stop offset="0.25" stop-color="#9e0068"/><stop offset="0.5" stop-color="#9e0065"/><stop offset="0.75" stop-color="#9e0063"/><stop offset="1" stop-color="#9e0061"/></linearGradient>
<linearGradient id="cb15" gradientUnits="userSpaceOnUse" x1="1381.2" y1="271.3" x2="1557.3" y2="385.7"><stop offset="0" stop-color="#ffffff"/><stop offset="0.1" stop-color="#ffc7ed"/><stop offset="0.22" stop-color="#ff96de"/><stop offset="0.4" stop-color="#ff62ce"/><stop offset="0.6" stop-color="#ff3ac2"/><stop offset="0.8" stop-color="#ff1bba"/><stop offset="1" stop-color="#ff00b4"/></linearGradient>
<linearGradient id="cd15" gradientUnits="userSpaceOnUse" x1="1544.6" y1="377.4" x2="1715.8" y2="488.6"><stop offset="0" stop-color="#9e0671"/><stop offset="0.25" stop-color="#9e006d"/><stop offset="0.5" stop-color="#9e006b"/><stop offset="0.75" stop-color="#9e0069"/><stop offset="1" stop-color="#9e0067"/></linearGradient>
<linearGradient id="cb16" gradientUnits="userSpaceOnUse" x1="1381.2" y1="271.3" x2="1552.4" y2="391.2"><stop offset="0" stop-color="#ffffff"/><stop offset="0.1" stop-color="#ffc8ef"/><stop offset="0.22" stop-color="#ff97e2"/><stop offset="0.4" stop-color="#ff64d4"/><stop offset="0.6" stop-color="#ff3bca"/><stop offset="0.8" stop-color="#ff1cc3"/><stop offset="1" stop-color="#ff00bd"/></linearGradient>
<linearGradient id="cd16" gradientUnits="userSpaceOnUse" x1="1540.1" y1="382.6" x2="1706.4" y2="499.0"><stop offset="0" stop-color="#9e0776"/><stop offset="0.25" stop-color="#9e0073"/><stop offset="0.5" stop-color="#9e0071"/><stop offset="0.75" stop-color="#9e006f"/><stop offset="1" stop-color="#9e006d"/></linearGradient>
<linearGradient id="cb17" gradientUnits="userSpaceOnUse" x1="1381.2" y1="271.3" x2="1547.5" y2="396.7"><stop offset="0" stop-color="#ffffff"/><stop offset="0.1" stop-color="#ffc9f2"/><stop offset="0.22" stop-color="#ff99e6"/><stop offset="0.4" stop-color="#ff65da"/><stop offset="0.6" stop-color="#ff3cd1"/><stop offset="0.8" stop-color="#ff1dcb"/><stop offset="1" stop-color="#ff00c7"/></linearGradient>
<linearGradient id="cd17" gradientUnits="userSpaceOnUse" x1="1535.7" y1="387.7" x2="1697.0" y2="509.3"><stop offset="0" stop-color="#9e077c"/><stop offset="0.25" stop-color="#9e0079"/><stop offset="0.5" stop-color="#9e0077"/><stop offset="0.75" stop-color="#9e0075"/><stop offset="1" stop-color="#9e0074"/></linearGradient>
<linearGradient id="cb18" gradientUnits="userSpaceOnUse" x1="1381.2" y1="271.3" x2="1543.3" y2="401.4"><stop offset="0" stop-color="#ffffff"/><stop offset="0.1" stop-color="#ffcaf4"/><stop offset="0.22" stop-color="#ff9aea"/><stop offset="0.4" stop-color="#ff66e0"/><stop offset="0.6" stop-color="#ff3dd8"/><stop offset="0.8" stop-color="#ff1dd3"/><stop offset="1" stop-color="#ff00cf"/></linearGradient>
<linearGradient id="cd18" gradientUnits="userSpaceOnUse" x1="1531.9" y1="392.3" x2="1688.8" y2="518.2"><stop offset="0" stop-color="#9e0781"/><stop offset="0.25" stop-color="#9e007f"/><stop offset="0.5" stop-color="#9e007d"/><stop offset="0.75" stop-color="#9e007b"/><stop offset="1" stop-color="#9e007a"/></linearGradient>
<linearGradient id="cb19" gradientUnits="userSpaceOnUse" x1="1381.2" y1="271.3" x2="1539.7" y2="405.5"><stop offset="0" stop-color="#ffffff"/><stop offset="0.1" stop-color="#ffcbf6"/><stop offset="0.22" stop-color="#ff9bed"/><stop offset="0.4" stop-color="#ff67e5"/><stop offset="0.6" stop-color="#ff3ede"/><stop offset="0.8" stop-color="#ff1eda"/><stop offset="1" stop-color="#ff00d6"/></linearGradient>
<linearGradient id="cd19" gradientUnits="userSpaceOnUse" x1="1528.6" y1="396.1" x2="1681.9" y2="525.9"><stop offset="0" stop-color="#9e0785"/><stop offset="0.25" stop-color="#9e0083"/><stop offset="0.5" stop-color="#9e0082"/><stop offset="0.75" stop-color="#9e0080"/><stop offset="1" stop-color="#9e007f"/></linearGradient>
<linearGradient id="cb20" gradientUnits="userSpaceOnUse" x1="1381.2" y1="271.3" x2="1536.1" y2="409.6"><stop offset="0" stop-color="#ffffff"/><stop offset="0.1" stop-color="#ffcbf8"/><stop offset="0.22" stop-color="#ff9cf1"/><stop offset="0.4" stop-color="#ff69ea"/><stop offset="0.6" stop-color="#ff3fe4"/><stop offset="0.8" stop-color="#ff1ee1"/><stop offset="1" stop-color="#ff00de"/></linearGradient>
<linearGradient id="cd20" gradientUnits="userSpaceOnUse" x1="1525.3" y1="399.9" x2="1675.1" y2="533.6"><stop offset="0" stop-color="#9e078a"/><stop offset="0.25" stop-color="#9e0088"/><stop offset="0.5" stop-color="#9e0087"/><stop offset="0.75" stop-color="#9e0086"/><stop offset="1" stop-color="#9e0085"/></linearGradient>
<linearGradient id="cb21" gradientUnits="userSpaceOnUse" x1="1381.2" y1="271.3" x2="1532.5" y2="413.7"><stop offset="0" stop-color="#ffffff"/><stop offset="0.1" stop-color="#ffccf9"/><stop offset="0.22" stop-color="#ff9df4"/><stop offset="0.4" stop-color="#ff6aef"/><stop offset="0.6" stop-color="#ff40eb"/><stop offset="0.8" stop-color="#ff1ee8"/><stop offset="1" stop-color="#ff00e6"/></linearGradient>
<linearGradient id="cd21" gradientUnits="userSpaceOnUse" x1="1521.9" y1="403.6" x2="1668.4" y2="541.4"><stop offset="0" stop-color="#9e078f"/><stop offset="0.25" stop-color="#9e008d"/><stop offset="0.5" stop-color="#9e008c"/><stop offset="0.75" stop-color="#9e008b"/><stop offset="1" stop-color="#9e008b"/></linearGradient>
<linearGradient id="cb22" gradientUnits="userSpaceOnUse" x1="1381.2" y1="271.3" x2="1528.9" y2="417.7"><stop offset="0" stop-color="#ffffff"/><stop offset="0.1" stop-color="#ffcdfb"/><stop offset="0.22" stop-color="#ff9ff8"/><stop offset="0.4" stop-color="#ff6bf4"/><stop offset="0.6" stop-color="#ff40f1"/><stop offset="0.8" stop-color="#ff1fef"/><stop offset="1" stop-color="#ff00ee"/></linearGradient>
<linearGradient id="cd22" gradientUnits="userSpaceOnUse" x1="1518.5" y1="407.4" x2="1661.6" y2="549.3"><stop offset="0" stop-color="#9e0794"/><stop offset="0.25" stop-color="#9e0093"/><stop offset="0.5" stop-color="#9e0092"/><stop offset="0.75" stop-color="#9e0091"/><stop offset="1" stop-color="#9e0091"/></linearGradient>
<linearGradient id="cb23" gradientUnits="userSpaceOnUse" x1="1381.2" y1="271.3" x2="1525.3" y2="421.8"><stop offset="0" stop-color="#ffffff"/><stop offset="0.1" stop-color="#ffcefd"/><stop offset="0.22" stop-color="#ffa0fb"/><stop offset="0.4" stop-color="#ff6cfa"/><stop offset="0.6" stop-color="#ff41f8"/><stop offset="0.8" stop-color="#ff1ff7"/><stop offset="1" stop-color="#ff00f6"/></linearGradient>
<linearGradient id="cd23" gradientUnits="userSpaceOnUse" x1="1515.1" y1="411.1" x2="1654.9" y2="557.2"><stop offset="0" stop-color="#9e0799"/><stop offset="0.25" stop-color="#9e0098"/><stop offset="0.5" stop-color="#9e0098"/><stop offset="0.75" stop-color="#9e0098"/><stop offset="1" stop-color="#9e0097"/></linearGradient>
<linearGradient id="cb24" gradientUnits="userSpaceOnUse" x1="1381.2" y1="271.3" x2="1521.0" y2="426.6"><stop offset="0" stop-color="#ffffff"/><stop offset="0.1" stop-color="#feceff"/><stop offset="0.22" stop-color="#fea1ff"/><stop offset="0.4" stop-color="#fe6dff"/><stop offset="0.6" stop-color="#fe42ff"/><stop offset="0.8" stop-color="#fe20ff"/><stop offset="1" stop-color="#fe00ff"/></linearGradient>
<linearGradient id="cd24" gradientUnits="userSpaceOnUse" x1="1511.0" y1="415.5" x2="1647.1" y2="566.6"><stop offset="0" stop-color="#9d089e"/><stop offset="0.25" stop-color="#9d009e"/><stop offset="0.5" stop-color="#9d009e"/><stop offset="0.75" stop-color="#9d009e"/><stop offset="1" stop-color="#9d009e"/></linearGradient>
<linearGradient id="cb25" gradientUnits="userSpaceOnUse" x1="1381.2" y1="271.3" x2="1516.8" y2="431.4"><stop offset="0" stop-color="#ffffff"/><stop offset="0.1" stop-color="#fccdff"/><stop offset="0.22" stop-color="#faa0ff"/><stop offset="0.4" stop-color="#f86cff"/><stop offset="0.6" stop-color="#f641ff"/><stop offset="0.8" stop-color="#f41fff"/><stop offset="1" stop-color="#f300ff"/></linearGradient>
<linearGradient id="cd25" gradientUnits="userSpaceOnUse" x1="1507.0" y1="420.0" x2="1639.0" y2="575.8"><stop offset="0" stop-color="#97079e"/><stop offset="0.25" stop-color="#96009e"/><stop offset="0.5" stop-color="#96009e"/><stop offset="0.75" stop-color="#95009e"/><stop offset="1" stop-color="#95009e"/></linearGradient>
<linearGradient id="cb26" gradientUnits="userSpaceOnUse" x1="1381.2" y1="271.3" x2="1513.1" y2="435.6"><stop offset="0" stop-color="#ffffff"/><stop offset="0.1" stop-color="#facdff"/><stop offset="0.22" stop-color="#f69eff"/><stop offset="0.4" stop-color="#f26bff"/><stop offset="0.6" stop-color="#ef40ff"/><stop offset="0.8" stop-color="#ec1fff"/><stop offset="1" stop-color="#eb00ff"/></linearGradient>
<linearGradient id="cd26" gradientUnits="userSpaceOnUse" x1="1503.6" y1="423.8" x2="1632.0" y2="583.9"><stop offset="0" stop-color="#92079e"/><stop offset="0.25" stop-color="#91009e"/><stop offset="0.5" stop-color="#90009e"/><stop offset="0.75" stop-color="#8f009e"/><stop offset="1" stop-color="#8f009e"/></linearGradient>
<linearGradient id="cb27" gradientUnits="userSpaceOnUse" x1="1381.2" y1="271.3" x2="1509.3" y2="439.8"><stop offset="0" stop-color="#ffffff"/><stop offset="0.1" stop-color="#f8ccff"/><stop offset="0.22" stop-color="#f39dff"/><stop offset="0.4" stop-color="#ed6aff"/><stop offset="0.6" stop-color="#e840ff"/><stop offset="0.8" stop-color="#e51eff"/><stop offset="1" stop-color="#e200ff"/></linearGradient>
<linearGradient id="cd27" gradientUnits="userSpaceOnUse" x1="1500.1" y1="427.6" x2="1625.1" y2="592.0"><stop offset="0" stop-color="#8d079e"/><stop offset="0.25" stop-color="#8b009e"/><stop offset="0.5" stop-color="#8a009e"/><stop offset="0.75" stop-color="#89009e"/><stop offset="1" stop-color="#88009e"/></linearGradient>
<linearGradient id="cb28" gradientUnits="userSpaceOnUse" x1="1381.2" y1="271.3" x2="1505.6" y2="444.1"><stop offset="0" stop-color="#ffffff"/><stop offset="0.1" stop-color="#f6cbff"/><stop offset="0.22" stop-color="#ef9cff"/><stop offset="0.4" stop-color="#e769ff"/><stop offset="0.6" stop-color="#e13fff"/><stop offset="0.8" stop-color="#dd1eff"/><stop offset="1" stop-color="#da00ff"/></linearGradient>
<linearGradient id="cd28" gradientUnits="userSpaceOnUse" x1="1496.5" y1="431.5" x2="1618.0" y2="600.2"><stop offset="0" stop-color="#88079e"/><stop offset="0.25" stop-color="#86009e"/><stop offset="0.5" stop-color="#84009e"/><stop offset="0.75" stop-color="#83009e"/><stop offset="1" stop-color="#82009e"/></linearGradient>
<linearGradient id="cb29" gradientUnits="userSpaceOnUse" x1="1381.2" y1="271.3" x2="1501.8" y2="448.4"><stop offset="0" stop-color="#ffffff"/><stop offset="0.1" stop-color="#f4caff"/><stop offset="0.22" stop-color="#eb9bff"/><stop offset="0.4" stop-color="#e268ff"/><stop offset="0.6" stop-color="#db3eff"/><stop offset="0.8" stop-color="#d61eff"/><stop offset="1" stop-color="#d200ff"/></linearGradient>
<linearGradient id="cd29" gradientUnits="userSpaceOnUse" x1="1493.0" y1="435.5" x2="1610.8" y2="608.6"><stop offset="0" stop-color="#83079e"/><stop offset="0.25" stop-color="#81009e"/><stop offset="0.5" stop-color="#7f009e"/><stop offset="0.75" stop-color="#7d009e"/><stop offset="1" stop-color="#7c009e"/></linearGradient>
<linearGradient id="cb30" gradientUnits="userSpaceOnUse" x1="1381.2" y1="271.3" x2="1497.9" y2="452.8"><stop offset="0" stop-color="#ffffff"/><stop offset="0.1" stop-color="#f2caff"/><stop offset="0.22" stop-color="#e89aff"/><stop offset="0.4" stop-color="#dd66ff"/><stop offset="0.6" stop-color="#d43dff"/><stop offset="0.8" stop-color="#ce1dff"/><stop offset="1" stop-color="#ca00ff"/></linearGradient>
<linearGradient id="cd30" gradientUnits="userSpaceOnUse" x1="1489.3" y1="439.4" x2="1603.6" y2="617.0"><stop offset="0" stop-color="#7e079e"/><stop offset="0.25" stop-color="#7b009e"/><stop offset="0.5" stop-color="#79009e"/><stop offset="0.75" stop-color="#78009e"/><stop offset="1" stop-color="#76009e"/></linearGradient>
<linearGradient id="cb31" gradientUnits="userSpaceOnUse" x1="1381.2" y1="271.3" x2="1494.0" y2="457.2"><stop offset="0" stop-color="#ffffff"/><stop offset="0.1" stop-color="#f0c9ff"/><stop offset="0.22" stop-color="#e499ff"/><stop offset="0.4" stop-color="#d765ff"/><stop offset="0.6" stop-color="#ce3cff"/><stop offset="0.8" stop-color="#c71dff"/><stop offset="1" stop-color="#c200ff"/></linearGradient>
<linearGradient id="cd31" gradientUnits="userSpaceOnUse" x1="1485.7" y1="443.5" x2="1596.2" y2="625.6"><stop offset="0" stop-color="#79079e"/><stop offset="0.25" stop-color="#76009e"/><stop offset="0.5" stop-color="#74009e"/><stop offset="0.75" stop-color="#72009e"/><stop offset="1" stop-color="#71009e"/></linearGradient>
<linearGradient id="cb32" gradientUnits="userSpaceOnUse" x1="1381.2" y1="271.3" x2="1490.0" y2="461.7"><stop offset="0" stop-color="#ffffff"/><stop offset="0.1" stop-color="#eec8ff"/><stop offset="0.22" stop-color="#e198ff"/><stop offset="0.4" stop-color="#d264ff"/><stop offset="0.6" stop-color="#c83cff"/><stop offset="0.8" stop-color="#c01cff"/><stop offset="1" stop-color="#bb00ff"/></linearGradient>
<linearGradient id="cd32" gradientUnits="userSpaceOnUse" x1="1481.9" y1="447.6" x2="1588.7" y2="634.4"><stop offset="0" stop-color="#75079e"/><stop offset="0.25" stop-color="#71009e"/><stop offset="0.5" stop-color="#6f009e"/><stop offset="0.75" stop-color="#6d009e"/><stop offset="1" stop-color="#6b009e"/></linearGradient>
<linearGradient id="cb33" gradientUnits="userSpaceOnUse" x1="1381.2" y1="271.3" x2="1485.9" y2="466.3"><stop offset="0" stop-color="#ffffff"/><stop offset="0.1" stop-color="#ecc7ff"/><stop offset="0.22" stop-color="#dd97ff"/><stop offset="0.4" stop-color="#cd63ff"/><stop offset="0.6" stop-color="#c13bff"/><stop offset="0.8" stop-color="#b91cff"/><stop offset="1" stop-color="#b300ff"/></linearGradient>
<linearGradient id="cd33" gradientUnits="userSpaceOnUse" x1="1478.2" y1="451.8" x2="1581.1" y2="643.3"><stop offset="0" stop-color="#70079e"/><stop offset="0.25" stop-color="#6c009e"/><stop offset="0.5" stop-color="#6a009e"/><stop offset="0.75" stop-color="#67009e"/><stop offset="1" stop-color="#66009e"/></linearGradient>
<linearGradient id="cb34" gradientUnits="userSpaceOnUse" x1="1381.2" y1="271.3" x2="1481.8" y2="470.9"><stop offset="0" stop-color="#ffffff"/><stop offset="0.1" stop-color="#eac7ff"/><stop offset="0.22" stop-color="#d996ff"/><stop offset="0.4" stop-color="#c862ff"/><stop offset="0.6" stop-color="#bb3aff"/><stop offset="0.8" stop-color="#b21cff"/><stop offset="1" stop-color="#ab00ff"/></linearGradient>
<linearGradient id="cd34" gradientUnits="userSpaceOnUse" x1="1474.3" y1="456.0" x2="1573.3" y2="652.4"><stop offset="0" stop-color="#6c079e"/><stop offset="0.25" stop-color="#68009e"/><stop offset="0.5" stop-color="#64009e"/><stop offset="0.75" stop-color="#62009e"/><stop offset="1" stop-color="#60009e"/></linearGradient>
<linearGradient id="cb35" gradientUnits="userSpaceOnUse" x1="1381.2" y1="271.3" x2="1477.6" y2="475.7"><stop offset="0" stop-color="#ffffff"/><stop offset="0.1" stop-color="#e8c6ff"/><stop offset="0.22" stop-color="#d695ff"/><stop offset="0.4" stop-color="#c361ff"/><stop offset="0.6" stop-color="#b539ff"/><stop offset="0.8" stop-color="#ab1bff"/><stop offset="1" stop-color="#a400ff"/></linearGradient>
<linearGradient id="cd35" gradientUnits="userSpaceOnUse" x1="1470.3" y1="460.3" x2="1565.3" y2="661.6"><stop offset="0" stop-color="#67079e"/><stop offset="0.25" stop-color="#63009e"/><stop offset="0.5" stop-color="#5f009e"/><stop offset="0.75" stop-color="#5d009e"/><stop offset="1" stop-color="#5b009e"/></linearGradient>
<linearGradient id="cb36" gradientUnits="userSpaceOnUse" x1="1381.2" y1="271.3" x2="1473.3" y2="480.6"><stop offset="0" stop-color="#ffffff"/><stop offset="0.1" stop-color="#e6c5ff"/><stop offset="0.22" stop-color="#d294ff"/><stop offset="0.4" stop-color="#bd60ff"/><stop offset="0.6" stop-color="#ae39ff"/><stop offset="0.8" stop-color="#a41bff"/><stop offset="1" stop-color="#9d00ff"/></linearGradient>
<linearGradient id="cd36" gradientUnits="userSpaceOnUse" x1="1466.3" y1="464.8" x2="1557.1" y2="671.1"><stop offset="0" stop-color="#63079e"/><stop offset="0.25" stop-color="#5e009e"/><stop offset="0.5" stop-color="#5a009e"/><stop offset="0.75" stop-color="#58009e"/><stop offset="1" stop-color="#56009e"/></linearGradient>
<linearGradient id="cb37" gradientUnits="userSpaceOnUse" x1="1381.2" y1="271.3" x2="1468.9" y2="485.6"><stop offset="0" stop-color="#ffffff"/><stop offset="0.1" stop-color="#e4c4ff"/><stop offset="0.22" stop-color="#ce93ff"/><stop offset="0.4" stop-color="#b85fff"/><stop offset="0.6" stop-color="#a838ff"/><stop offset="0.8" stop-color="#9d1aff"/><stop offset="1" stop-color="#9500ff"/></linearGradient>
<linearGradient id="cd37" gradientUnits="userSpaceOnUse" x1="1462.2" y1="469.3" x2="1548.7" y2="680.9"><stop offset="0" stop-color="#5e069e"/><stop offset="0.25" stop-color="#59009e"/><stop offset="0.5" stop-color="#55009e"/><stop offset="0.75" stop-color="#52009e"/><stop offset="1" stop-color="#50009e"/></linearGradient>
<linearGradient id="cb38" gradientUnits="userSpaceOnUse" x1="1381.2" y1="271.3" x2="1463.5" y2="491.6"><stop offset="0" stop-color="#ffffff"/><stop offset="0.1" stop-color="#e2c3ff"/><stop offset="0.22" stop-color="#ca91ff"/><stop offset="0.4" stop-color="#b25eff"/><stop offset="0.6" stop-color="#a137ff"/><stop offset="0.8" stop-color="#951aff"/><stop offset="1" stop-color="#8d00ff"/></linearGradient>
<linearGradient id="cd38" gradientUnits="userSpaceOnUse" x1="1457.1" y1="474.3" x2="1536.7" y2="687.2"><stop offset="0" stop-color="#59079e"/><stop offset="0.25" stop-color="#54009e"/><stop offset="0.5" stop-color="#50009e"/><stop offset="0.75" stop-color="#4d009e"/><stop offset="1" stop-color="#4a009e"/></linearGradient>
<linearGradient id="cb39" gradientUnits="userSpaceOnUse" x1="1381.2" y1="271.3" x2="1458.1" y2="497.8"><stop offset="0" stop-color="#ffffff"/><stop offset="0.1" stop-color="#dfc2ff"/><stop offset="0.22" stop-color="#c590ff"/><stop offset="0.4" stop-color="#ac5dff"/><stop offset="0.6" stop-color="#9a36ff"/><stop offset="0.8" stop-color="#8d19ff"/><stop offset="1" stop-color="#8400ff"/></linearGradient>
<linearGradient id="cd39" gradientUnits="userSpaceOnUse" x1="1452.2" y1="480.4" x2="1522.5" y2="687.7"><stop offset="0" stop-color="#54069e"/><stop offset="0.25" stop-color="#4f009e"/><stop offset="0.5" stop-color="#4a009e"/><stop offset="0.75" stop-color="#47009e"/><stop offset="1" stop-color="#45009e"/></linearGradient>
<linearGradient id="cb40" gradientUnits="userSpaceOnUse" x1="1381.2" y1="271.3" x2="1452.4" y2="504.2"><stop offset="0" stop-color="#ffffff"/><stop offset="0.1" stop-color="#dcc1ff"/><stop offset="0.22" stop-color="#c18fff"/><stop offset="0.4" stop-color="#a65cff"/><stop offset="0.6" stop-color="#9235ff"/><stop offset="0.8" stop-color="#8519ff"/><stop offset="1" stop-color="#7b00ff"/></linearGradient>
<linearGradient id="cd40" gradientUnits="userSpaceOnUse" x1="1446.7" y1="485.6" x2="1508.6" y2="688.1"><stop offset="0" stop-color="#4f069e"/><stop offset="0.25" stop-color="#49009e"/><stop offset="0.5" stop-color="#45009e"/><stop offset="0.75" stop-color="#42009e"/><stop offset="1" stop-color="#40009e"/></linearGradient>
<linearGradient id="cb41" gradientUnits="userSpaceOnUse" x1="1381.2" y1="271.3" x2="1446.5" y2="510.8"><stop offset="0" stop-color="#ffffff"/><stop offset="0.1" stop-color="#dac0ff"/><stop offset="0.22" stop-color="#bc8dff"/><stop offset="0.4" stop-color="#9f5aff"/><stop offset="0.6" stop-color="#8b34ff"/><stop offset="0.8" stop-color="#7d19ff"/><stop offset="1" stop-color="#7300ff"/></linearGradient>
<linearGradient id="cd41" gradientUnits="userSpaceOnUse" x1="1441.4" y1="492.2" x2="1494.6" y2="687.4"><stop offset="0" stop-color="#49069e"/><stop offset="0.25" stop-color="#44009e"/><stop offset="0.5" stop-color="#40009e"/><stop offset="0.75" stop-color="#3d009e"/><stop offset="1" stop-color="#3a009e"/></linearGradient>
<linearGradient id="cb42" gradientUnits="userSpaceOnUse" x1="1381.2" y1="271.3" x2="1441.3" y2="516.8"><stop offset="0" stop-color="#ffffff"/><stop offset="0.1" stop-color="#d7bfff"/><stop offset="0.22" stop-color="#b88cff"/><stop offset="0.4" stop-color="#9a59ff"/><stop offset="0.6" stop-color="#8434ff"/><stop offset="0.8" stop-color="#7618ff"/><stop offset="1" stop-color="#6c00ff"/></linearGradient>
<linearGradient id="cd42" gradientUnits="userSpaceOnUse" x1="1436.5" y1="497.5" x2="1483.0" y2="687.3"><stop offset="0" stop-color="#45069e"/><stop offset="0.25" stop-color="#40009e"/><stop offset="0.5" stop-color="#3c009e"/><stop offset="0.75" stop-color="#38009e"/><stop offset="1" stop-color="#36009e"/></linearGradient>
<linearGradient id="cb43" gradientUnits="userSpaceOnUse" x1="1381.2" y1="271.3" x2="1435.8" y2="522.9"><stop offset="0" stop-color="#ffffff"/><stop offset="0.1" stop-color="#d5beff"/><stop offset="0.22" stop-color="#b48bff"/><stop offset="0.4" stop-color="#9458ff"/><stop offset="0.6" stop-color="#7e33ff"/><stop offset="0.8" stop-color="#6f18ff"/><stop offset="1" stop-color="#6400ff"/></linearGradient>
<linearGradient id="cd43" gradientUnits="userSpaceOnUse" x1="1431.5" y1="503.1" x2="1471.5" y2="687.1"><stop offset="0" stop-color="#40069e"/><stop offset="0.25" stop-color="#3b009e"/><stop offset="0.5" stop-color="#37009e"/><stop offset="0.75" stop-color="#34009e"/><stop offset="1" stop-color="#31009e"/></linearGradient>
<linearGradient id="cb44" gradientUnits="userSpaceOnUse" x1="1381.2" y1="271.3" x2="1430.2" y2="529.3"><stop offset="0" stop-color="#ffffff"/><stop offset="0.1" stop-color="#d2beff"/><stop offset="0.22" stop-color="#af8aff"/><stop offset="0.4" stop-color="#8e57ff"/><stop offset="0.6" stop-color="#7732ff"/><stop offset="0.8" stop-color="#6817ff"/><stop offset="1" stop-color="#5d00ff"/></linearGradient>
<linearGradient id="cd44" gradientUnits="userSpaceOnUse" x1="1426.3" y1="508.8" x2="1460.1" y2="687.0"><stop offset="0" stop-color="#3c069e"/><stop offset="0.25" stop-color="#37009e"/><stop offset="0.5" stop-color="#33009e"/><stop offset="0.75" stop-color="#2f009e"/><stop offset="1" stop-color="#2d009e"/></linearGradient>
<linearGradient id="cb45" gradientUnits="userSpaceOnUse" x1="1381.2" y1="271.3" x2="1424.3" y2="535.9"><stop offset="0" stop-color="#ffffff"/><stop offset="0.1" stop-color="#cfbdff"/><stop offset="0.22" stop-color="#ab88ff"/><stop offset="0.4" stop-color="#8956ff"/><stop offset="0.6" stop-color="#7131ff"/><stop offset="0.8" stop-color="#6117ff"/><stop offset="1" stop-color="#5500ff"/></linearGradient>
<linearGradient id="cd45" gradientUnits="userSpaceOnUse" x1="1420.8" y1="514.8" x2="1448.9" y2="686.9"><stop offset="0" stop-color="#37069e"/><stop offset="0.25" stop-color="#32009e"/><stop offset="0.5" stop-color="#2e009e"/><stop offset="0.75" stop-color="#2b009e"/><stop offset="1" stop-color="#28009e"/></linearGradient>
<linearGradient id="cb46" gradientUnits="userSpaceOnUse" x1="1381.2" y1="271.3" x2="1418.1" y2="542.9"><stop offset="0" stop-color="#ffffff"/><stop offset="0.1" stop-color="#cdbcff"/><stop offset="0.22" stop-color="#a687ff"/><stop offset="0.4" stop-color="#8355ff"/><stop offset="0.6" stop-color="#6a31ff"/><stop offset="0.8" stop-color="#5917ff"/><stop offset="1" stop-color="#4d00ff"/></linearGradient>
<linearGradient id="cd46" gradientUnits="userSpaceOnUse" x1="1415.2" y1="521.1" x2="1437.7" y2="686.7"><stop offset="0" stop-color="#33069e"/><stop offset="0.25" stop-color="#2e009e"/><stop offset="0.5" stop-color="#2a009e"/><stop offset="0.75" stop-color="#26009e"/><stop offset="1" stop-color="#24009e"/></linearGradient>
<linearGradient id="cb47" gradientUnits="userSpaceOnUse" x1="1381.2" y1="271.3" x2="1411.7" y2="550.1"><stop offset="0" stop-color="#ffffff"/><stop offset="0.1" stop-color="#cabaff"/><stop offset="0.22" stop-color="#a286ff"/><stop offset="0.4" stop-color="#7d54ff"/><stop offset="0.6" stop-color="#6330ff"/><stop offset="0.8" stop-color="#5216ff"/><stop offset="1" stop-color="#4500ff"/></linearGradient>
<linearGradient id="cd47" gradientUnits="userSpaceOnUse" x1="1409.3" y1="527.6" x2="1426.7" y2="686.6"><stop offset="0" stop-color="#2e069e"/><stop offset="0.25" stop-color="#29009e"/><stop offset="0.5" stop-color="#25009e"/><stop offset="0.75" stop-color="#22009e"/><stop offset="1" stop-color="#1f009e"/></linearGradient>
<linearGradient id="cb48" gradientUnits="userSpaceOnUse" x1="1381.2" y1="271.3" x2="1405.0" y2="557.7"><stop offset="0" stop-color="#ffffff"/><stop offset="0.1" stop-color="#c7b9ff"/><stop offset="0.22" stop-color="#9d84ff"/><stop offset="0.4" stop-color="#7753ff"/><stop offset="0.6" stop-color="#5c2fff"/><stop offset="0.8" stop-color="#4a16ff"/><stop offset="1" stop-color="#3d00ff"/></linearGradient>
<linearGradient id="cd48" gradientUnits="userSpaceOnUse" x1="1403.1" y1="534.4" x2="1415.7" y2="686.5"><stop offset="0" stop-color="#29069e"/><stop offset="0.25" stop-color="#24009e"/><stop offset="0.5" stop-color="#20009e"/><stop offset="0.75" stop-color="#1d009e"/><stop offset="1" stop-color="#1a009e"/></linearGradient>
<linearGradient id="cb49" gradientUnits="userSpaceOnUse" x1="1381.2" y1="271.3" x2="1397.9" y2="565.7"><stop offset="0" stop-color="#ffffff"/><stop offset="0.1" stop-color="#c4b8ff"/><stop offset="0.22" stop-color="#9883ff"/><stop offset="0.4" stop-color="#7051ff"/><stop offset="0.6" stop-color="#552eff"/><stop offset="0.8" stop-color="#4215ff"/><stop offset="1" stop-color="#3500ff"/></linearGradient>
<linearGradient id="cd49" gradientUnits="userSpaceOnUse" x1="1396.5" y1="541.6" x2="1404.8" y2="686.3"><stop offset="0" stop-color="#24069e"/><stop offset="0.25" stop-color="#1f009e"/><stop offset="0.5" stop-color="#1c009e"/><stop offset="0.75" stop-color="#18009e"/><stop offset="1" stop-color="#16009e"/></linearGradient>
<linearGradient id="cb50" gradientUnits="userSpaceOnUse" x1="1381.2" y1="271.3" x2="1390.4" y2="574.2"><stop offset="0" stop-color="#ffffff"/><stop offset="0.1" stop-color="#c1b7ff"/><stop offset="0.22" stop-color="#9382ff"/><stop offset="0.4" stop-color="#6a50ff"/><stop offset="0.6" stop-color="#4d2eff"/><stop offset="0.8" stop-color="#3a15ff"/><stop offset="1" stop-color="#2d00ff"/></linearGradient>
<linearGradient id="cd50" gradientUnits="userSpaceOnUse" x1="1389.7" y1="549.1" x2="1393.9" y2="686.2"><stop offset="0" stop-color="#1f069e"/><stop offset="0.25" stop-color="#1b009e"/><stop offset="0.5" stop-color="#17009e"/><stop offset="0.75" stop-color="#13009e"/><stop offset="1" stop-color="#11009e"/></linearGradient>
<linearGradient id="cb51" gradientUnits="userSpaceOnUse" x1="1381.2" y1="271.3" x2="1382.5" y2="583.1"><stop offset="0" stop-color="#ffffff"/><stop offset="0.1" stop-color="#beb6ff"/><stop offset="0.22" stop-color="#8e80ff"/><stop offset="0.4" stop-color="#634fff"/><stop offset="0.6" stop-color="#462dff"/><stop offset="0.8" stop-color="#3215ff"/><stop offset="1" stop-color="#2400ff"/></linearGradient>
<linearGradient id="cd51" gradientUnits="userSpaceOnUse" x1="1382.4" y1="557.1" x2="1383.0" y2="686.1"><stop offset="0" stop-color="#1a059e"/><stop offset="0.25" stop-color="#15009e"/><stop offset="0.5" stop-color="#12009e"/><stop offset="0.75" stop-color="#0e009e"/><stop offset="1" stop-color="#0c009e"/></linearGradient>
<linearGradient id="cb52" gradientUnits="userSpaceOnUse" x1="1381.2" y1="271.3" x2="1374.2" y2="592.5"><stop offset="0" stop-color="#ffffff"/><stop offset="0.1" stop-color="#bab5ff"/><stop offset="0.22" stop-color="#897fff"/><stop offset="0.4" stop-color="#5c4eff"/><stop offset="0.6" stop-color="#3e2cff"/><stop offset="0.8" stop-color="#2a14ff"/><stop offset="1" stop-color="#1b00ff"/></linearGradient>
<linearGradient id="cd52" gradientUnits="userSpaceOnUse" x1="1374.8" y1="565.5" x2="1372.1" y2="686.2"><stop offset="0" stop-color="#14059e"/><stop offset="0.25" stop-color="#10009e"/><stop offset="0.5" stop-color="#0c009e"/><stop offset="0.75" stop-color="#09009e"/><stop offset="1" stop-color="#06009e"/></linearGradient>
<linearGradient id="cb53" gradientUnits="userSpaceOnUse" x1="1381.2" y1="271.3" x2="1366.8" y2="600.9"><stop offset="0" stop-color="#ffffff"/><stop offset="0.1" stop-color="#b7b3ff"/><stop offset="0.22" stop-color="#847dff"/><stop offset="0.4" stop-color="#564dff"/><stop offset="0.6" stop-color="#372bff"/><stop offset="0.8" stop-color="#2214ff"/><stop offset="1" stop-color="#1200ff"/></linearGradient>
<linearGradient id="cd53" gradientUnits="userSpaceOnUse" x1="1367.9" y1="574.6" x2="1363.1" y2="686.2"><stop offset="0" stop-color="#0f059e"/><stop offset="0.25" stop-color="#0b009e"/><stop offset="0.5" stop-color="#08009e"/><stop offset="0.75" stop-color="#04009e"/><stop offset="1" stop-color="#01009e"/></linearGradient>
<linearGradient id="cb54" gradientUnits="userSpaceOnUse" x1="1381.2" y1="271.3" x2="1360.6" y2="607.9"><stop offset="0" stop-color="#ffffff"/><stop offset="0.1" stop-color="#b5b3ff"/><stop offset="0.22" stop-color="#807cff"/><stop offset="0.4" stop-color="#514cff"/><stop offset="0.6" stop-color="#312bff"/><stop offset="0.8" stop-color="#1c14ff"/><stop offset="1" stop-color="#0b00ff"/></linearGradient>
<linearGradient id="cd54" gradientUnits="userSpaceOnUse" x1="1362.3" y1="580.9" x2="1355.8" y2="686.0"><stop offset="0" stop-color="#0b059e"/><stop offset="0.25" stop-color="#07009e"/><stop offset="0.5" stop-color="#04009e"/><stop offset="0.75" stop-color="#00009e"/><stop offset="1" stop-color="#00009e"/></linearGradient>
<linearGradient id="cb55" gradientUnits="userSpaceOnUse" x1="1381.2" y1="271.3" x2="1352.5" y2="617.1"><stop offset="0" stop-color="#ffffff"/><stop offset="0.1" stop-color="#b1b1ff"/><stop offset="0.22" stop-color="#7b7bff"/><stop offset="0.4" stop-color="#4b4bff"/><stop offset="0.6" stop-color="#2a2aff"/><stop offset="0.8" stop-color="#1413ff"/><stop offset="1" stop-color="#0100ff"/></linearGradient>
<linearGradient id="cd55" gradientUnits="userSpaceOnUse" x1="1355.7" y1="578.5" x2="1347.0" y2="682.6"><stop offset="0" stop-color="#07079e"/><stop offset="0.25" stop-color="#03029e"/><stop offset="0.5" stop-color="#00009e"/><stop offset="0.75" stop-color="#00009e"/><stop offset="1" stop-color="#00009e"/></linearGradient>
<linearGradient id="cb56" gradientUnits="userSpaceOnUse" x1="1381.2" y1="271.3" x2="1348.6" y2="595.3"><stop offset="0" stop-color="#ffffff"/><stop offset="0.1" stop-color="#b4b5ff"/><stop offset="0.22" stop-color="#7e80ff"/><stop offset="0.4" stop-color="#4d51ff"/><stop offset="0.6" stop-color="#2b30ff"/><stop offset="0.8" stop-color="#141aff"/><stop offset="1" stop-color="#0008ff"/></linearGradient>
<linearGradient id="cd56" gradientUnits="userSpaceOnUse" x1="1351.4" y1="567.5" x2="1340.9" y2="671.3"><stop offset="0" stop-color="#05099e"/><stop offset="0.25" stop-color="#00059e"/><stop offset="0.5" stop-color="#00019e"/><stop offset="0.75" stop-color="#00009e"/><stop offset="1" stop-color="#00009e"/></linearGradient>
<linearGradient id="cb57" gradientUnits="userSpaceOnUse" x1="1381.2" y1="271.3" x2="1346.9" y2="584.1"><stop offset="0" stop-color="#ffffff"/><stop offset="0.1" stop-color="#b5b7ff"/><stop offset="0.22" stop-color="#7f83ff"/><stop offset="0.4" stop-color="#4e54ff"/><stop offset="0.6" stop-color="#2c33ff"/><stop offset="0.8" stop-color="#141dff"/><stop offset="1" stop-color="#000cff"/></linearGradient>
<linearGradient id="cd57" gradientUnits="userSpaceOnUse" x1="1349.9" y1="557.4" x2="1337.8" y2="667.4"><stop offset="0" stop-color="#050c9e"/><stop offset="0.25" stop-color="#00079e"/><stop offset="0.5" stop-color="#00039e"/><stop offset="0.75" stop-color="#00009e"/><stop offset="1" stop-color="#00009e"/></linearGradient>
<linearGradient id="cb58" gradientUnits="userSpaceOnUse" x1="1381.2" y1="271.3" x2="1345.4" y2="573.7"><stop offset="0" stop-color="#ffffff"/><stop offset="0.1" stop-color="#b6b9ff"/><stop offset="0.22" stop-color="#8186ff"/><stop offset="0.4" stop-color="#5057ff"/><stop offset="0.6" stop-color="#2d37ff"/><stop offset="0.8" stop-color="#1520ff"/><stop offset="1" stop-color="#000fff"/></linearGradient>
<linearGradient id="cd58" gradientUnits="userSpaceOnUse" x1="1348.4" y1="548.0" x2="1334.8" y2="663.6"><stop offset="0" stop-color="#060e9e"/><stop offset="0.25" stop-color="#00099e"/><stop offset="0.5" stop-color="#00049e"/><stop offset="0.75" stop-color="#00009e"/><stop offset="1" stop-color="#00009e"/></linearGradient>
<linearGradient id="cb59" gradientUnits="userSpaceOnUse" x1="1381.2" y1="271.3" x2="1344.0" y2="563.9"><stop offset="0" stop-color="#ffffff"/><stop offset="0.1" stop-color="#b8bbff"/><stop offset="0.22" stop-color="#8289ff"/><stop offset="0.4" stop-color="#515aff"/><stop offset="0.6" stop-color="#2e3aff"/><stop offset="0.8" stop-color="#1523ff"/><stop offset="1" stop-color="#0012ff"/></linearGradient>
<linearGradient id="cd59" gradientUnits="userSpaceOnUse" x1="1347.1" y1="539.2" x2="1331.8" y2="659.7"><stop offset="0" stop-color="#06109e"/><stop offset="0.25" stop-color="#000b9e"/><stop offset="0.5" stop-color="#00069e"/><stop offset="0.75" stop-color="#00019e"/><stop offset="1" stop-color="#00009e"/></linearGradient>
<linearGradient id="cb60" gradientUnits="userSpaceOnUse" x1="1381.2" y1="271.3" x2="1342.6" y2="554.7"><stop offset="0" stop-color="#ffffff"/><stop offset="0.1" stop-color="#b9bdff"/><stop offset="0.22" stop-color="#848bff"/><stop offset="0.4" stop-color="#525dff"/><stop offset="0.6" stop-color="#2f3dff"/><stop offset="0.8" stop-color="#1626ff"/><stop offset="1" stop-color="#0016ff"/></linearGradient>
<linearGradient id="cd60" gradientUnits="userSpaceOnUse" x1="1345.9" y1="530.9" x2="1328.8" y2="655.9"><stop offset="0" stop-color="#06119e"/><stop offset="0.25" stop-color="#000c9e"/><stop offset="0.5" stop-color="#00079e"/><stop offset="0.75" stop-color="#00039e"/><stop offset="1" stop-color="#00009e"/></linearGradient>
<linearGradient id="cb61" gradientUnits="userSpaceOnUse" x1="1381.2" y1="271.3" x2="1341.4" y2="546.0"><stop offset="0" stop-color="#ffffff"/><stop offset="0.1" stop-color="#babfff"/><stop offset="0.22" stop-color="#858eff"/><stop offset="0.4" stop-color="#5360ff"/><stop offset="0.6" stop-color="#3040ff"/><stop offset="0.8" stop-color="#1629ff"/><stop offset="1" stop-color="#0019ff"/></linearGradient>
<linearGradient id="cd61" gradientUnits="userSpaceOnUse" x1="1344.7" y1="523.1" x2="1326.0" y2="652.0"><stop offset="0" stop-color="#06139e"/><stop offset="0.25" stop-color="#000e9e"/><stop offset="0.5" stop-color="#00099e"/><stop offset="0.75" stop-color="#00049e"/><stop offset="1" stop-color="#00009e"/></linearGradient>
<linearGradient id="cb62" gradientUnits="userSpaceOnUse" x1="1381.2" y1="271.3" x2="1340.2" y2="537.8"><stop offset="0" stop-color="#ffffff"/><stop offset="0.1" stop-color="#bbc0ff"/><stop offset="0.22" stop-color="#8790ff"/><stop offset="0.4" stop-color="#5463ff"/><stop offset="0.6" stop-color="#3043ff"/><stop offset="0.8" stop-color="#162cff"/><stop offset="1" stop-color="#001cff"/></linearGradient>
<linearGradient id="cd62" gradientUnits="userSpaceOnUse" x1="1343.6" y1="515.7" x2="1323.2" y2="648.3"><stop offset="0" stop-color="#06159e"/><stop offset="0.25" stop-color="#000f9e"/><stop offset="0.5" stop-color="#000a9e"/><stop offset="0.75" stop-color="#00059e"/><stop offset="1" stop-color="#00019e"/></linearGradient>
<linearGradient id="cb63" gradientUnits="userSpaceOnUse" x1="1381.2" y1="271.3" x2="1339.0" y2="530.1"><stop offset="0" stop-color="#ffffff"/><stop offset="0.1" stop-color="#bcc2ff"/><stop offset="0.22" stop-color="#8893ff"/><stop offset="0.4" stop-color="#5566ff"/><stop offset="0.6" stop-color="#3145ff"/><stop offset="0.8" stop-color="#172fff"/><stop offset="1" stop-color="#001eff"/></linearGradient>
<linearGradient id="cd63" gradientUnits="userSpaceOnUse" x1="1342.5" y1="508.7" x2="1320.4" y2="644.5"><stop offset="0" stop-color="#06179e"/><stop offset="0.25" stop-color="#00119e"/><stop offset="0.5" stop-color="#000b9e"/><stop offset="0.75" stop-color="#00069e"/><stop offset="1" stop-color="#00029e"/></linearGradient>
<linearGradient id="cb64" gradientUnits="userSpaceOnUse" x1="1381.2" y1="271.3" x2="1338.0" y2="522.8"><stop offset="0" stop-color="#ffffff"/><stop offset="0.1" stop-color="#bdc4ff"/><stop offset="0.22" stop-color="#8995ff"/><stop offset="0.4" stop-color="#5768ff"/><stop offset="0.6" stop-color="#3248ff"/><stop offset="0.8" stop-color="#1732ff"/><stop offset="1" stop-color="#0021ff"/></linearGradient>
<linearGradient id="cd64" gradientUnits="userSpaceOnUse" x1="1341.5" y1="502.1" x2="1317.7" y2="640.8"><stop offset="0" stop-color="#06199e"/><stop offset="0.25" stop-color="#00129e"/><stop offset="0.5" stop-color="#000d9e"/><stop offset="0.75" stop-color="#00089e"/><stop offset="1" stop-color="#00049e"/></linearGradient>
<linearGradient id="cb65" gradientUnits="userSpaceOnUse" x1="1381.2" y1="271.3" x2="1336.5" y2="512.6"><stop offset="0" stop-color="#ffffff"/><stop offset="0.1" stop-color="#bec6ff"/><stop offset="0.22" stop-color="#8b98ff"/><stop offset="0.4" stop-color="#586cff"/><stop offset="0.6" stop-color="#334cff"/><stop offset="0.8" stop-color="#1836ff"/><stop offset="1" stop-color="#0025ff"/></linearGradient>
<linearGradient id="cd65" gradientUnits="userSpaceOnUse" x1="1340.6" y1="490.1" x2="1313.4" y2="636.8"><stop offset="0" stop-color="#071c9e"/><stop offset="0.25" stop-color="#00149e"/><stop offset="0.5" stop-color="#000e9e"/><stop offset="0.75" stop-color="#00099e"/><stop offset="1" stop-color="#00059e"/></linearGradient>
<linearGradient id="cb66" gradientUnits="userSpaceOnUse" x1="1381.2" y1="271.3" x2="1334.6" y2="500.1"><stop offset="0" stop-color="#ffffff"/><stop offset="0.1" stop-color="#c0c8ff"/><stop offset="0.22" stop-color="#8d9cff"/><stop offset="0.4" stop-color="#5a71ff"/><stop offset="0.6" stop-color="#3451ff"/><stop offset="0.8" stop-color="#183bff"/><stop offset="1" stop-color="#002aff"/></linearGradient>
<linearGradient id="cd66" gradientUnits="userSpaceOnUse" x1="1338.9" y1="479.0" x2="1308.3" y2="629.5"><stop offset="0" stop-color="#071f9e"/><stop offset="0.25" stop-color="#00179e"/><stop offset="0.5" stop-color="#00119e"/><stop offset="0.75" stop-color="#000b9e"/><stop offset="1" stop-color="#00079e"/></linearGradient>
<linearGradient id="cb67" gradientUnits="userSpaceOnUse" x1="1381.2" y1="271.3" x2="1333.0" y2="488.7"><stop offset="0" stop-color="#ffffff"/><stop offset="0.1" stop-color="#c2cbff"/><stop offset="0.22" stop-color="#8fa0ff"/><stop offset="0.4" stop-color="#5c75ff"/><stop offset="0.6" stop-color="#3656ff"/><stop offset="0.8" stop-color="#1940ff"/><stop offset="1" stop-color="#002fff"/></linearGradient>
<linearGradient id="cd67" gradientUnits="userSpaceOnUse" x1="1337.4" y1="469.0" x2="1303.4" y2="622.2"><stop offset="0" stop-color="#07229e"/><stop offset="0.25" stop-color="#001a9e"/><stop offset="0.5" stop-color="#00139e"/><stop offset="0.75" stop-color="#000d9e"/><stop offset="1" stop-color="#00099e"/></linearGradient>
<linearGradient id="cb68" gradientUnits="userSpaceOnUse" x1="1381.2" y1="271.3" x2="1331.5" y2="478.4"><stop offset="0" stop-color="#ffffff"/><stop offset="0.1" stop-color="#c3cdff"/><stop offset="0.22" stop-color="#91a3ff"/><stop offset="0.4" stop-color="#5e7aff"/><stop offset="0.6" stop-color="#375bff"/><stop offset="0.8" stop-color="#1a45ff"/><stop offset="1" stop-color="#0034ff"/></linearGradient>
<linearGradient id="cd68" gradientUnits="userSpaceOnUse" x1="1335.9" y1="459.8" x2="1298.6" y2="615.2"><stop offset="0" stop-color="#07259e"/><stop offset="0.25" stop-color="#001c9e"/><stop offset="0.5" stop-color="#00159e"/><stop offset="0.75" stop-color="#000f9e"/><stop offset="1" stop-color="#000b9e"/></linearGradient>
<linearGradient id="cb69" gradientUnits="userSpaceOnUse" x1="1381.2" y1="271.3" x2="1330.1" y2="468.9"><stop offset="0" stop-color="#ffffff"/><stop offset="0.1" stop-color="#c4cfff"/><stop offset="0.22" stop-color="#93a7ff"/><stop offset="0.4" stop-color="#607eff"/><stop offset="0.6" stop-color="#385fff"/><stop offset="0.8" stop-color="#1a49ff"/><stop offset="1" stop-color="#0039ff"/></linearGradient>
<linearGradient id="cd69" gradientUnits="userSpaceOnUse" x1="1334.6" y1="451.3" x2="1294.0" y2="608.3"><stop offset="0" stop-color="#08279e"/><stop offset="0.25" stop-color="#001e9e"/><stop offset="0.5" stop-color="#00179e"/><stop offset="0.75" stop-color="#00119e"/><stop offset="1" stop-color="#000d9e"/></linearGradient>
<linearGradient id="cb70" gradientUnits="userSpaceOnUse" x1="1381.2" y1="271.3" x2="1328.8" y2="460.2"><stop offset="0" stop-color="#ffffff"/><stop offset="0.1" stop-color="#c6d1ff"/><stop offset="0.22" stop-color="#95aaff"/><stop offset="0.4" stop-color="#6182ff"/><stop offset="0.6" stop-color="#3963ff"/><stop offset="0.8" stop-color="#1b4dff"/><stop offset="1" stop-color="#003dff"/></linearGradient>
<linearGradient id="cd70" gradientUnits="userSpaceOnUse" x1="1333.4" y1="443.5" x2="1289.6" y2="601.4"><stop offset="0" stop-color="#082a9e"/><stop offset="0.25" stop-color="#00219e"/><stop offset="0.5" stop-color="#00199e"/><stop offset="0.75" stop-color="#00139e"/><stop offset="1" stop-color="#000e9e"/></linearGradient>
<linearGradient id="cb71" gradientUnits="userSpaceOnUse" x1="1381.2" y1="271.3" x2="1327.6" y2="452.1"><stop offset="0" stop-color="#ffffff"/><stop offset="0.1" stop-color="#c7d3ff"/><stop offset="0.22" stop-color="#96adff"/><stop offset="0.4" stop-color="#6385ff"/><stop offset="0.6" stop-color="#3a67ff"/><stop offset="0.8" stop-color="#1c52ff"/><stop offset="1" stop-color="#0041ff"/></linearGradient>
<linearGradient id="cd71" gradientUnits="userSpaceOnUse" x1="1332.3" y1="436.3" x2="1285.4" y2="594.8"><stop offset="0" stop-color="#082d9e"/><stop offset="0.25" stop-color="#00239e"/><stop offset="0.5" stop-color="#001b9e"/><stop offset="0.75" stop-color="#00159e"/><stop offset="1" stop-color="#00109e"/></linearGradient>
<linearGradient id="cb72" gradientUnits="userSpaceOnUse" x1="1381.2" y1="271.3" x2="1326.5" y2="444.6"><stop offset="0" stop-color="#ffffff"/><stop offset="0.1" stop-color="#c8d5ff"/><stop offset="0.22" stop-color="#98b0ff"/><stop offset="0.4" stop-color="#6489ff"/><stop offset="0.6" stop-color="#3c6bff"/><stop offset="0.8" stop-color="#1c56ff"/><stop offset="1" stop-color="#0045ff"/></linearGradient>
<linearGradient id="cd72" gradientUnits="userSpaceOnUse" x1="1331.3" y1="429.6" x2="1281.3" y2="588.2"><stop offset="0" stop-color="#082f9e"/><stop offset="0.25" stop-color="#00259e"/><stop offset="0.5" stop-color="#001d9e"/><stop offset="0.75" stop-color="#00179e"/><stop offset="1" stop-color="#00129e"/></linearGradient>
<linearGradient id="cb73" gradientUnits="userSpaceOnUse" x1="1381.2" y1="271.3" x2="1325.3" y2="436.0"><stop offset="0" stop-color="#ffffff"/><stop offset="0.1" stop-color="#c9d7ff"/><stop offset="0.22" stop-color="#9ab3ff"/><stop offset="0.4" stop-color="#668dff"/><stop offset="0.6" stop-color="#3d70ff"/><stop offset="0.8" stop-color="#1d5bff"/><stop offset="1" stop-color="#004aff"/></linearGradient>
<linearGradient id="cd73" gradientUnits="userSpaceOnUse" x1="1330.5" y1="420.7" x2="1275.9" y2="581.4"><stop offset="0" stop-color="#09329e"/><stop offset="0.25" stop-color="#00289e"/><stop offset="0.5" stop-color="#00209e"/><stop offset="0.75" stop-color="#00199e"/><stop offset="1" stop-color="#00149e"/></linearGradient>
<linearGradient id="cb74" gradientUnits="userSpaceOnUse" x1="1381.2" y1="271.3" x2="1323.9" y2="426.6"><stop offset="0" stop-color="#ffffff"/><stop offset="0.1" stop-color="#cbd9ff"/><stop offset="0.22" stop-color="#9cb7ff"/><stop offset="0.4" stop-color="#6892ff"/><stop offset="0.6" stop-color="#3e75ff"/><stop offset="0.8" stop-color="#1e60ff"/><stop offset="1" stop-color="#0050ff"/></linearGradient>
<linearGradient id="cd74" gradientUnits="userSpaceOnUse" x1="1329.2" y1="412.3" x2="1270.3" y2="572.0"><stop offset="0" stop-color="#09369e"/><stop offset="0.25" stop-color="#002b9e"/><stop offset="0.5" stop-color="#00229e"/><stop offset="0.75" stop-color="#001c9e"/><stop offset="1" stop-color="#00179e"/></linearGradient>
<linearGradient id="cb75" gradientUnits="userSpaceOnUse" x1="1381.2" y1="271.3" x2="1322.7" y2="418.0"><stop offset="0" stop-color="#ffffff"/><stop offset="0.1" stop-color="#ccdbff"/><stop offset="0.22" stop-color="#9ebaff"/><stop offset="0.4" stop-color="#6a97ff"/><stop offset="0.6" stop-color="#407bff"/><stop offset="0.8" stop-color="#1f66ff"/><stop offset="1" stop-color="#0056ff"/></linearGradient>
<linearGradient id="cd75" gradientUnits="userSpaceOnUse" x1="1327.9" y1="404.8" x2="1264.9" y2="562.9"><stop offset="0" stop-color="#09399e"/><stop offset="0.25" stop-color="#002e9e"/><stop offset="0.5" stop-color="#00259e"/><stop offset="0.75" stop-color="#001e9e"/><stop offset="1" stop-color="#00199e"/></linearGradient>
<linearGradient id="cb76" gradientUnits="userSpaceOnUse" x1="1381.2" y1="271.3" x2="1321.5" y2="410.2"><stop offset="0" stop-color="#ffffff"/><stop offset="0.1" stop-color="#cdddff"/><stop offset="0.22" stop-color="#a0beff"/><stop offset="0.4" stop-color="#6c9bff"/><stop offset="0.6" stop-color="#4180ff"/><stop offset="0.8" stop-color="#1f6bff"/><stop offset="1" stop-color="#005bff"/></linearGradient>
<linearGradient id="cd76" gradientUnits="userSpaceOnUse" x1="1326.8" y1="397.8" x2="1259.7" y2="554.0"><stop offset="0" stop-color="#093d9e"/><stop offset="0.25" stop-color="#00319e"/><stop offset="0.5" stop-color="#00289e"/><stop offset="0.75" stop-color="#00219e"/><stop offset="1" stop-color="#001c9e"/></linearGradient>
<linearGradient id="cb77" gradientUnits="userSpaceOnUse" x1="1381.2" y1="271.3" x2="1320.5" y2="403.0"><stop offset="0" stop-color="#ffffff"/><stop offset="0.1" stop-color="#cfdfff"/><stop offset="0.22" stop-color="#a1c1ff"/><stop offset="0.4" stop-color="#6e9fff"/><stop offset="0.6" stop-color="#4384ff"/><stop offset="0.8" stop-color="#2070ff"/><stop offset="1" stop-color="#0060ff"/></linearGradient>
<linearGradient id="cd77" gradientUnits="userSpaceOnUse" x1="1325.8" y1="391.4" x2="1254.8" y2="545.4"><stop offset="0" stop-color="#09409e"/><stop offset="0.25" stop-color="#00349e"/><stop offset="0.5" stop-color="#002a9e"/><stop offset="0.75" stop-color="#00239e"/><stop offset="1" stop-color="#001e9e"/></linearGradient>
<linearGradient id="cb78" gradientUnits="userSpaceOnUse" x1="1381.2" y1="271.3" x2="1319.3" y2="395.4"><stop offset="0" stop-color="#ffffff"/><stop offset="0.1" stop-color="#d0e1ff"/><stop offset="0.22" stop-color="#a3c4ff"/><stop offset="0.4" stop-color="#70a4ff"/><stop offset="0.6" stop-color="#448aff"/><stop offset="0.8" stop-color="#2176ff"/><stop offset="1" stop-color="#0066ff"/></linearGradient>
<linearGradient id="cd78" gradientUnits="userSpaceOnUse" x1="1325.1" y1="383.9" x2="1249.0" y2="536.5"><stop offset="0" stop-color="#0a449e"/><stop offset="0.25" stop-color="#00379e"/><stop offset="0.5" stop-color="#002e9e"/><stop offset="0.75" stop-color="#00269e"/><stop offset="1" stop-color="#00219e"/></linearGradient>
<linearGradient id="cb79" gradientUnits="userSpaceOnUse" x1="1381.2" y1="271.3" x2="1318.2" y2="387.4"><stop offset="0" stop-color="#ffffff"/><stop offset="0.1" stop-color="#d1e3ff"/><stop offset="0.22" stop-color="#a5c8ff"/><stop offset="0.4" stop-color="#72a9ff"/><stop offset="0.6" stop-color="#468fff"/><stop offset="0.8" stop-color="#227cff"/><stop offset="1" stop-color="#006dff"/></linearGradient>
<linearGradient id="cd79" gradientUnits="userSpaceOnUse" x1="1323.9" y1="376.8" x2="1243.1" y2="525.7"><stop offset="0" stop-color="#0a479e"/><stop offset="0.25" stop-color="#003b9e"/><stop offset="0.5" stop-color="#00319e"/><stop offset="0.75" stop-color="#002a9e"/><stop offset="1" stop-color="#00249e"/></linearGradient>
<linearGradient id="cb80" gradientUnits="userSpaceOnUse" x1="1381.2" y1="271.3" x2="1317.1" y2="380.1"><stop offset="0" stop-color="#ffffff"/><stop offset="0.1" stop-color="#d2e4ff"/><stop offset="0.22" stop-color="#a7cbff"/><stop offset="0.4" stop-color="#74adff"/><stop offset="0.6" stop-color="#4795ff"/><stop offset="0.8" stop-color="#2382ff"/><stop offset="1" stop-color="#0073ff"/></linearGradient>
<linearGradient id="cd80" gradientUnits="userSpaceOnUse" x1="1322.8" y1="370.3" x2="1237.5" y2="515.2"><stop offset="0" stop-color="#0a4b9e"/><stop offset="0.25" stop-color="#003e9e"/><stop offset="0.5" stop-color="#00349e"/><stop offset="0.75" stop-color="#002d9e"/><stop offset="1" stop-color="#00289e"/></linearGradient>
<linearGradient id="cb81" gradientUnits="userSpaceOnUse" x1="1381.2" y1="271.3" x2="1316.0" y2="372.6"><stop offset="0" stop-color="#ffffff"/><stop offset="0.1" stop-color="#d4e6ff"/><stop offset="0.22" stop-color="#a9ceff"/><stop offset="0.4" stop-color="#76b2ff"/><stop offset="0.6" stop-color="#499bff"/><stop offset="0.8" stop-color="#2488ff"/><stop offset="1" stop-color="#007aff"/></linearGradient>
<linearGradient id="cd81" gradientUnits="userSpaceOnUse" x1="1322.0" y1="363.3" x2="1231.2" y2="504.6"><stop offset="0" stop-color="#0b4f9e"/><stop offset="0.25" stop-color="#00429e"/><stop offset="0.5" stop-color="#00389e"/><stop offset="0.75" stop-color="#00319e"/><stop offset="1" stop-color="#002b9e"/></linearGradient>
<linearGradient id="cb82" gradientUnits="userSpaceOnUse" x1="1381.2" y1="271.3" x2="1314.9" y2="365.1"><stop offset="0" stop-color="#ffffff"/><stop offset="0.1" stop-color="#d5e8ff"/><stop offset="0.22" stop-color="#abd2ff"/><stop offset="0.4" stop-color="#78b8ff"/><stop offset="0.6" stop-color="#4ba1ff"/><stop offset="0.8" stop-color="#258fff"/><stop offset="1" stop-color="#0081ff"/></linearGradient>
<linearGradient id="cd82" gradientUnits="userSpaceOnUse" x1="1320.9" y1="356.6" x2="1224.9" y2="492.5"><stop offset="0" stop-color="#0b549e"/><stop offset="0.25" stop-color="#00469e"/><stop offset="0.5" stop-color="#003c9e"/><stop offset="0.75" stop-color="#00359e"/><stop offset="1" stop-color="#002f9e"/></linearGradient>
<linearGradient id="cb83" gradientUnits="userSpaceOnUse" x1="1381.2" y1="271.3" x2="1313.9" y2="358.2"><stop offset="0" stop-color="#ffffff"/><stop offset="0.1" stop-color="#d6eaff"/><stop offset="0.22" stop-color="#add5ff"/><stop offset="0.4" stop-color="#7abdff"/><stop offset="0.6" stop-color="#4da7ff"/><stop offset="0.8" stop-color="#2696ff"/><stop offset="1" stop-color="#0088ff"/></linearGradient>
<linearGradient id="cd83" gradientUnits="userSpaceOnUse" x1="1319.9" y1="350.5" x2="1219.0" y2="480.8"><stop offset="0" stop-color="#0b589e"/><stop offset="0.25" stop-color="#004b9e"/><stop offset="0.5" stop-color="#00419e"/><stop offset="0.75" stop-color="#00399e"/><stop offset="1" stop-color="#00349e"/></linearGradient>
<linearGradient id="cb84" gradientUnits="userSpaceOnUse" x1="1381.2" y1="271.3" x2="1313.0" y2="351.9"><stop offset="0" stop-color="#ffffff"/><stop offset="0.1" stop-color="#d7ecff"/><stop offset="0.22" stop-color="#afd9ff"/><stop offset="0.4" stop-color="#7cc1ff"/><stop offset="0.6" stop-color="#4eadff"/><stop offset="0.8" stop-color="#279dff"/><stop offset="1" stop-color="#008fff"/></linearGradient>
<linearGradient id="cd84" gradientUnits="userSpaceOnUse" x1="1318.9" y1="344.8" x2="1213.3" y2="469.6"><stop offset="0" stop-color="#0b5c9e"/><stop offset="0.25" stop-color="#004f9e"/><stop offset="0.5" stop-color="#00459e"/><stop offset="0.75" stop-color="#003d9e"/><stop offset="1" stop-color="#00389e"/></linearGradient>
<linearGradient id="cb85" gradientUnits="userSpaceOnUse" x1="1381.2" y1="271.3" x2="1312.0" y2="345.5"><stop offset="0" stop-color="#ffffff"/><stop offset="0.1" stop-color="#d8eeff"/><stop offset="0.22" stop-color="#b1dcff"/><stop offset="0.4" stop-color="#7fc6ff"/><stop offset="0.6" stop-color="#50b3ff"/><stop offset="0.8" stop-color="#28a4ff"/><stop offset="1" stop-color="#0097ff"/></linearGradient>
<linearGradient id="cd85" gradientUnits="userSpaceOnUse" x1="1318.2" y1="338.9" x2="1207.1" y2="457.9"><stop offset="0" stop-color="#0c619e"/><stop offset="0.25" stop-color="#00539e"/><stop offset="0.5" stop-color="#004a9e"/><stop offset="0.75" stop-color="#00429e"/><stop offset="1" stop-color="#003d9e"/></linearGradient>
<linearGradient id="cb86" gradientUnits="userSpaceOnUse" x1="1381.2" y1="271.3" x2="1311.1" y2="339.0"><stop offset="0" stop-color="#ffffff"/><stop offset="0.1" stop-color="#daefff"/><stop offset="0.22" stop-color="#b3dfff"/><stop offset="0.4" stop-color="#81cbff"/><stop offset="0.6" stop-color="#52baff"/><stop offset="0.8" stop-color="#29abff"/><stop offset="1" stop-color="#009fff"/></linearGradient>
<linearGradient id="cd86" gradientUnits="userSpaceOnUse" x1="1317.2" y1="333.1" x2="1201.1" y2="445.2"><stop offset="0" stop-color="#0c669e"/><stop offset="0.25" stop-color="#00589e"/><stop offset="0.5" stop-color="#004f9e"/><stop offset="0.75" stop-color="#00479e"/><stop offset="1" stop-color="#00429e"/></linearGradient>
<linearGradient id="cb87" gradientUnits="userSpaceOnUse" x1="1381.2" y1="271.3" x2="1310.3" y2="333.5"><stop offset="0" stop-color="#ffffff"/><stop offset="0.1" stop-color="#dbf1ff"/><stop offset="0.22" stop-color="#b4e2ff"/><stop offset="0.4" stop-color="#83d0ff"/><stop offset="0.6" stop-color="#54bfff"/><stop offset="0.8" stop-color="#2ab2ff"/><stop offset="1" stop-color="#00a6ff"/></linearGradient>
<linearGradient id="cd87" gradientUnits="userSpaceOnUse" x1="1316.2" y1="328.3" x2="1196.0" y2="433.7"><stop offset="0" stop-color="#0c6a9e"/><stop offset="0.25" stop-color="#005d9e"/><stop offset="0.5" stop-color="#00549e"/><stop offset="0.75" stop-color="#004c9e"/><stop offset="1" stop-color="#00479e"/></linearGradient>
<linearGradient id="cb88" gradientUnits="userSpaceOnUse" x1="1381.2" y1="271.3" x2="1309.6" y2="328.8"><stop offset="0" stop-color="#ffffff"/><stop offset="0.1" stop-color="#dbf2ff"/><stop offset="0.22" stop-color="#b6e5ff"/><stop offset="0.4" stop-color="#84d4ff"/><stop offset="0.6" stop-color="#55c5ff"/><stop offset="0.8" stop-color="#2bb8ff"/><stop offset="1" stop-color="#00adff"/></linearGradient>
<linearGradient id="cd88" gradientUnits="userSpaceOnUse" x1="1315.4" y1="324.1" x2="1191.4" y2="423.6"><stop offset="0" stop-color="#0c6e9e"/><stop offset="0.25" stop-color="#00619e"/><stop offset="0.5" stop-color="#00589e"/><stop offset="0.75" stop-color="#00519e"/><stop offset="1" stop-color="#004c9e"/></linearGradient>
<linearGradient id="cb89" gradientUnits="userSpaceOnUse" x1="1381.2" y1="271.3" x2="1308.9" y2="324.3"><stop offset="0" stop-color="#ffffff"/><stop offset="0.1" stop-color="#dcf4ff"/><stop offset="0.22" stop-color="#b7e7ff"/><stop offset="0.4" stop-color="#86d8ff"/><stop offset="0.6" stop-color="#57caff"/><stop offset="0.8" stop-color="#2cbeff"/><stop offset="1" stop-color="#00b3ff"/></linearGradient>
<linearGradient id="cd89" gradientUnits="userSpaceOnUse" x1="1314.8" y1="320.0" x2="1187.0" y2="413.7"><stop offset="0" stop-color="#0c729e"/><stop offset="0.25" stop-color="#00669e"/><stop offset="0.5" stop-color="#005d9e"/><stop offset="0.75" stop-color="#00569e"/><stop offset="1" stop-color="#00519e"/></linearGradient>
<linearGradient id="cb90" gradientUnits="userSpaceOnUse" x1="1381.2" y1="271.3" x2="1308.3" y2="319.6"><stop offset="0" stop-color="#ffffff"/><stop offset="0.1" stop-color="#ddf5ff"/><stop offset="0.22" stop-color="#b9eaff"/><stop offset="0.4" stop-color="#88dcff"/><stop offset="0.6" stop-color="#58cfff"/><stop offset="0.8" stop-color="#2dc4ff"/><stop offset="1" stop-color="#00bbff"/></linearGradient>
<linearGradient id="cd90" gradientUnits="userSpaceOnUse" x1="1314.2" y1="315.7" x2="1182.2" y2="403.0"><stop offset="0" stop-color="#0c769e"/><stop offset="0.25" stop-color="#006b9e"/><stop offset="0.5" stop-color="#00629e"/><stop offset="0.75" stop-color="#005c9e"/><stop offset="1" stop-color="#00579e"/></linearGradient>
<linearGradient id="cb91" gradientUnits="userSpaceOnUse" x1="1381.2" y1="271.3" x2="1307.5" y2="314.7"><stop offset="0" stop-color="#ffffff"/><stop offset="0.1" stop-color="#def6ff"/><stop offset="0.22" stop-color="#baedff"/><stop offset="0.4" stop-color="#8ae1ff"/><stop offset="0.6" stop-color="#5ad5ff"/><stop offset="0.8" stop-color="#2ecbff"/><stop offset="1" stop-color="#00c3ff"/></linearGradient>
<linearGradient id="cd91" gradientUnits="userSpaceOnUse" x1="1313.4" y1="311.2" x2="1182.3" y2="388.4"><stop offset="0" stop-color="#0c7b9e"/><stop offset="0.25" stop-color="#00719e"/><stop offset="0.5" stop-color="#00699e"/><stop offset="0.75" stop-color="#00639e"/><stop offset="1" stop-color="#005f9e"/></linearGradient>
<linearGradient id="cb92" gradientUnits="userSpaceOnUse" x1="1381.2" y1="271.3" x2="1306.9" y2="310.4"><stop offset="0" stop-color="#ffffff"/><stop offset="0.1" stop-color="#dff8ff"/><stop offset="0.22" stop-color="#bcf0ff"/><stop offset="0.4" stop-color="#8ce5ff"/><stop offset="0.6" stop-color="#5cdbff"/><stop offset="0.8" stop-color="#2fd2ff"/><stop offset="1" stop-color="#00caff"/></linearGradient>
<linearGradient id="cd92" gradientUnits="userSpaceOnUse" x1="1312.6" y1="307.4" x2="1183.1" y2="375.5"><stop offset="0" stop-color="#0c7f9e"/><stop offset="0.25" stop-color="#00769e"/><stop offset="0.5" stop-color="#006f9e"/><stop offset="0.75" stop-color="#006a9e"/><stop offset="1" stop-color="#00669e"/></linearGradient>
<linearGradient id="cb93" gradientUnits="userSpaceOnUse" x1="1381.2" y1="271.3" x2="1306.4" y2="306.6"><stop offset="0" stop-color="#ffffff"/><stop offset="0.1" stop-color="#e0f9ff"/><stop offset="0.22" stop-color="#bdf2ff"/><stop offset="0.4" stop-color="#8de9ff"/><stop offset="0.6" stop-color="#5de0ff"/><stop offset="0.8" stop-color="#30d8ff"/><stop offset="1" stop-color="#00d1ff"/></linearGradient>
<linearGradient id="cd93" gradientUnits="userSpaceOnUse" x1="1312.0" y1="303.9" x2="1183.2" y2="364.7"><stop offset="0" stop-color="#0c839e"/><stop offset="0.25" stop-color="#007b9e"/><stop offset="0.5" stop-color="#00759e"/><stop offset="0.75" stop-color="#00709e"/><stop offset="1" stop-color="#006c9e"/></linearGradient>
<linearGradient id="cb94" gradientUnits="userSpaceOnUse" x1="1381.2" y1="271.3" x2="1305.8" y2="302.9"><stop offset="0" stop-color="#ffffff"/><stop offset="0.1" stop-color="#e0faff"/><stop offset="0.22" stop-color="#bef4ff"/><stop offset="0.4" stop-color="#8fecff"/><stop offset="0.6" stop-color="#5fe5ff"/><stop offset="0.8" stop-color="#31deff"/><stop offset="1" stop-color="#00d8ff"/></linearGradient>
<linearGradient id="cd94" gradientUnits="userSpaceOnUse" x1="1311.5" y1="300.5" x2="1183.4" y2="354.2"><stop offset="0" stop-color="#0c879e"/><stop offset="0.25" stop-color="#00819e"/><stop offset="0.5" stop-color="#007b9e"/><stop offset="0.75" stop-color="#00779e"/><stop offset="1" stop-color="#00749e"/></linearGradient>
<linearGradient id="cb95" gradientUnits="userSpaceOnUse" x1="1381.2" y1="271.3" x2="1305.3" y2="299.3"><stop offset="0" stop-color="#ffffff"/><stop offset="0.1" stop-color="#e1fbff"/><stop offset="0.22" stop-color="#c0f6ff"/><stop offset="0.4" stop-color="#91f0ff"/><stop offset="0.6" stop-color="#60eaff"/><stop offset="0.8" stop-color="#32e5ff"/><stop offset="1" stop-color="#00e0ff"/></linearGradient>
<linearGradient id="cd95" gradientUnits="userSpaceOnUse" x1="1310.9" y1="297.2" x2="1183.6" y2="344.2"><stop offset="0" stop-color="#0d8c9e"/><stop offset="0.25" stop-color="#00869e"/><stop offset="0.5" stop-color="#00829e"/><stop offset="0.75" stop-color="#007e9e"/><stop offset="1" stop-color="#007b9e"/></linearGradient>
<linearGradient id="cb96" gradientUnits="userSpaceOnUse" x1="1381.2" y1="271.3" x2="1304.8" y2="295.8"><stop offset="0" stop-color="#ffffff"/><stop offset="0.1" stop-color="#e2fcff"/><stop offset="0.22" stop-color="#c1f8ff"/><stop offset="0.4" stop-color="#92f4ff"/><stop offset="0.6" stop-color="#62efff"/><stop offset="0.8" stop-color="#33ebff"/><stop offset="1" stop-color="#00e7ff"/></linearGradient>
<linearGradient id="cd96" gradientUnits="userSpaceOnUse" x1="1310.4" y1="294.0" x2="1183.7" y2="334.5"><stop offset="0" stop-color="#0d909e"/><stop offset="0.25" stop-color="#008c9e"/><stop offset="0.5" stop-color="#00889e"/><stop offset="0.75" stop-color="#00859e"/><stop offset="1" stop-color="#00839e"/></linearGradient>
<linearGradient id="cb97" gradientUnits="userSpaceOnUse" x1="1381.2" y1="271.3" x2="1304.3" y2="292.3"><stop offset="0" stop-color="#ffffff"/><stop offset="0.1" stop-color="#e2fdff"/><stop offset="0.22" stop-color="#c2fbff"/><stop offset="0.4" stop-color="#94f8ff"/><stop offset="0.6" stop-color="#63f4ff"/><stop offset="0.8" stop-color="#34f2ff"/><stop offset="1" stop-color="#00efff"/></linearGradient>
<linearGradient id="cd97" gradientUnits="userSpaceOnUse" x1="1309.8" y1="290.8" x2="1183.9" y2="325.1"><stop offset="0" stop-color="#0d959e"/><stop offset="0.25" stop-color="#00929e"/><stop offset="0.5" stop-color="#008f9e"/><stop offset="0.75" stop-color="#008d9e"/><stop offset="1" stop-color="#008c9e"/></linearGradient>
<linearGradient id="cb98" gradientUnits="userSpaceOnUse" x1="1381.2" y1="271.3" x2="1303.8" y2="289.2"><stop offset="0" stop-color="#ffffff"/><stop offset="0.1" stop-color="#e3feff"/><stop offset="0.22" stop-color="#c3fdff"/><stop offset="0.4" stop-color="#95fbff"/><stop offset="0.6" stop-color="#65f9ff"/><stop offset="0.8" stop-color="#35f8ff"/><stop offset="1" stop-color="#00f6ff"/></linearGradient>
<linearGradient id="cd98" gradientUnits="userSpaceOnUse" x1="1309.3" y1="287.9" x2="1184.3" y2="316.8"><stop offset="0" stop-color="#0d999e"/><stop offset="0.25" stop-color="#00979e"/><stop offset="0.5" stop-color="#00969e"/><stop offset="0.75" stop-color="#00959e"/><stop offset="1" stop-color="#00949e"/></linearGradient>
<linearGradient id="cb99" gradientUnits="userSpaceOnUse" x1="1381.2" y1="271.3" x2="1303.3" y2="285.7"><stop offset="0" stop-color="#ffffff"/><stop offset="0.1" stop-color="#e4ffff"/><stop offset="0.22" stop-color="#c4ffff"/><stop offset="0.4" stop-color="#97ffff"/><stop offset="0.6" stop-color="#66ffff"/><stop offset="0.8" stop-color="#36ffff"/><stop offset="1" stop-color="#00ffff"/></linearGradient>
<linearGradient id="cd99" gradientUnits="userSpaceOnUse" x1="1308.8" y1="284.7" x2="1184.0" y2="307.8"><stop offset="0" stop-color="#0d9e9e"/><stop offset="0.25" stop-color="#009e9e"/><stop offset="0.5" stop-color="#009e9e"/><stop offset="0.75" stop-color="#009e9e"/><stop offset="1" stop-color="#009e9e"/></linearGradient>
<linearGradient id="cb100" gradientUnits="userSpaceOnUse" x1="1381.2" y1="271.3" x2="1302.8" y2="282.3"><stop offset="0" stop-color="#ffffff"/><stop offset="0.1" stop-color="#e4fffe"/><stop offset="0.22" stop-color="#c4fffd"/><stop offset="0.4" stop-color="#97fffb"/><stop offset="0.6" stop-color="#66fffa"/><stop offset="0.8" stop-color="#36fff8"/><stop offset="1" stop-color="#00fff7"/></linearGradient>
<linearGradient id="cd100" gradientUnits="userSpaceOnUse" x1="1308.3" y1="281.5" x2="1184.5" y2="298.9"><stop offset="0" stop-color="#0d9e99"/><stop offset="0.25" stop-color="#009e98"/><stop offset="0.5" stop-color="#009e96"/><stop offset="0.75" stop-color="#009e95"/><stop offset="1" stop-color="#009e94"/></linearGradient>
<linearGradient id="cb101" gradientUnits="userSpaceOnUse" x1="1381.2" y1="271.3" x2="1302.4" y2="279.2"><stop offset="0" stop-color="#ffffff"/><stop offset="0.1" stop-color="#e3fffd"/><stop offset="0.22" stop-color="#c4fffb"/><stop offset="0.4" stop-color="#96fff8"/><stop offset="0.6" stop-color="#65fff5"/><stop offset="0.8" stop-color="#35fff2"/><stop offset="1" stop-color="#00ffef"/></linearGradient>
<linearGradient id="cd101" gradientUnits="userSpaceOnUse" x1="1307.9" y1="278.7" x2="1184.5" y2="291.1"><stop offset="0" stop-color="#0d9e95"/><stop offset="0.25" stop-color="#009e92"/><stop offset="0.5" stop-color="#009e8f"/><stop offset="0.75" stop-color="#009e8d"/><stop offset="1" stop-color="#009e8b"/></linearGradient>
<linearGradient id="cb102" gradientUnits="userSpaceOnUse" x1="1381.2" y1="271.3" x2="1301.9" y2="276.2"><stop offset="0" stop-color="#ffffff"/><stop offset="0.1" stop-color="#e3fffc"/><stop offset="0.22" stop-color="#c3fff9"/><stop offset="0.4" stop-color="#95fff4"/><stop offset="0.6" stop-color="#65fff0"/><stop offset="0.8" stop-color="#35ffec"/><stop offset="1" stop-color="#00ffe8"/></linearGradient>
<linearGradient id="cd102" gradientUnits="userSpaceOnUse" x1="1307.6" y1="275.8" x2="1184.8" y2="283.3"><stop offset="0" stop-color="#0d9e90"/><stop offset="0.25" stop-color="#009e8c"/><stop offset="0.5" stop-color="#009e89"/><stop offset="0.75" stop-color="#009e85"/><stop offset="1" stop-color="#009e83"/></linearGradient>
<linearGradient id="cb103" gradientUnits="userSpaceOnUse" x1="1381.2" y1="271.3" x2="1301.5" y2="273.0"><stop offset="0" stop-color="#ffffff"/><stop offset="0.1" stop-color="#e3fffb"/><stop offset="0.22" stop-color="#c3fff7"/><stop offset="0.4" stop-color="#95fff1"/><stop offset="0.6" stop-color="#64ffeb"/><stop offset="0.8" stop-color="#35ffe5"/><stop offset="1" stop-color="#00ffe0"/></linearGradient>
<linearGradient id="cd103" gradientUnits="userSpaceOnUse" x1="1307.2" y1="272.9" x2="1184.9" y2="275.6"><stop offset="0" stop-color="#0d9e8c"/><stop offset="0.25" stop-color="#009e87"/><stop offset="0.5" stop-color="#009e82"/><stop offset="0.75" stop-color="#009e7e"/><stop offset="1" stop-color="#009e7a"/></linearGradient>
<linearGradient id="cb104" gradientUnits="userSpaceOnUse" x1="1381.2" y1="271.3" x2="1300.9" y2="269.6"><stop offset="0" stop-color="#ffffff"/><stop offset="0.1" stop-color="#e3fffa"/><stop offset="0.22" stop-color="#c2fff5"/><stop offset="0.4" stop-color="#94ffed"/><stop offset="0.6" stop-color="#64ffe5"/><stop offset="0.8" stop-color="#34ffde"/><stop offset="1" stop-color="#00ffd8"/></linearGradient>
<linearGradient id="cd104" gradientUnits="userSpaceOnUse" x1="1306.8" y1="269.7" x2="1184.9" y2="267.0"><stop offset="0" stop-color="#0d9e87"/><stop offset="0.25" stop-color="#009e80"/><stop offset="0.5" stop-color="#009e7b"/><stop offset="0.75" stop-color="#009e75"/><stop offset="1" stop-color="#009e71"/></linearGradient>
<linearGradient id="cb105" gradientUnits="userSpaceOnUse" x1="1381.2" y1="271.3" x2="1300.4" y2="266.0"><stop offset="0" stop-color="#ffffff"/><stop offset="0.1" stop-color="#e2fff9"/><stop offset="0.22" stop-color="#c2fff2"/><stop offset="0.4" stop-color="#94ffe9"/><stop offset="0.6" stop-color="#63ffe0"/><stop offset="0.8" stop-color="#34ffd7"/><stop offset="1" stop-color="#00ffd0"/></linearGradient>
<linearGradient id="cd105" gradientUnits="userSpaceOnUse" x1="1306.4" y1="266.4" x2="1184.7" y2="258.4"><stop offset="0" stop-color="#0d9e82"/><stop offset="0.25" stop-color="#009e7a"/><stop offset="0.5" stop-color="#009e73"/><stop offset="0.75" stop-color="#009e6d"/><stop offset="1" stop-color="#009e68"/></linearGradient>
<linearGradient id="cb106" gradientUnits="userSpaceOnUse" x1="1381.2" y1="271.3" x2="1299.9" y2="262.4"><stop offset="0" stop-color="#ffffff"/><stop offset="0.1" stop-color="#e2fff8"/><stop offset="0.22" stop-color="#c1fff0"/><stop offset="0.4" stop-color="#93ffe5"/><stop offset="0.6" stop-color="#63ffda"/><stop offset="0.8" stop-color="#33ffd0"/><stop offset="1" stop-color="#00ffc7"/></linearGradient>
<linearGradient id="cd106" gradientUnits="userSpaceOnUse" x1="1306.0" y1="263.1" x2="1184.5" y2="249.8"><stop offset="0" stop-color="#0d9e7e"/><stop offset="0.25" stop-color="#009e74"/><stop offset="0.5" stop-color="#009e6c"/><stop offset="0.75" stop-color="#009e65"/><stop offset="1" stop-color="#009e60"/></linearGradient>
<linearGradient id="cb107" gradientUnits="userSpaceOnUse" x1="1381.2" y1="271.3" x2="1299.4" y2="258.7"><stop offset="0" stop-color="#ffffff"/><stop offset="0.1" stop-color="#e2fff7"/><stop offset="0.22" stop-color="#c1ffee"/><stop offset="0.4" stop-color="#92ffe1"/><stop offset="0.6" stop-color="#62ffd5"/><stop offset="0.8" stop-color="#33ffc9"/><stop offset="1" stop-color="#00ffbf"/></linearGradient>
<linearGradient id="cd107" gradientUnits="userSpaceOnUse" x1="1305.6" y1="259.7" x2="1184.3" y2="241.0"><stop offset="0" stop-color="#0d9e79"/><stop offset="0.25" stop-color="#009e6e"/><stop offset="0.5" stop-color="#009e65"/><stop offset="0.75" stop-color="#009e5d"/><stop offset="1" stop-color="#009e57"/></linearGradient>
<linearGradient id="cb108" gradientUnits="userSpaceOnUse" x1="1381.2" y1="271.3" x2="1298.8" y2="254.9"><stop offset="0" stop-color="#ffffff"/><stop offset="0.1" stop-color="#e2fff6"/><stop offset="0.22" stop-color="#c1ffeb"/><stop offset="0.4" stop-color="#92ffdd"/><stop offset="0.6" stop-color="#61ffcf"/><stop offset="0.8" stop-color="#33ffc2"/><stop offset="1" stop-color="#00ffb6"/></linearGradient>
<linearGradient id="cd108" gradientUnits="userSpaceOnUse" x1="1305.1" y1="256.2" x2="1184.2" y2="232.1"><stop offset="0" stop-color="#0d9e74"/><stop offset="0.25" stop-color="#009e68"/><stop offset="0.5" stop-color="#009e5e"/><stop offset="0.75" stop-color="#009e55"/><stop offset="1" stop-color="#009e4e"/></linearGradient>
<linearGradient id="cb109" gradientUnits="userSpaceOnUse" x1="1381.2" y1="271.3" x2="1298.2" y2="251.0"><stop offset="0" stop-color="#ffffff"/><stop offset="0.1" stop-color="#e1fff5"/><stop offset="0.22" stop-color="#c0ffe9"/><stop offset="0.4" stop-color="#91ffd9"/><stop offset="0.6" stop-color="#61ffc9"/><stop offset="0.8" stop-color="#32ffbb"/><stop offset="1" stop-color="#00ffae"/></linearGradient>
<linearGradient id="cd109" gradientUnits="userSpaceOnUse" x1="1304.7" y1="252.6" x2="1184.0" y2="223.1"><stop offset="0" stop-color="#0d9e6f"/><stop offset="0.25" stop-color="#009e62"/><stop offset="0.5" stop-color="#009e56"/><stop offset="0.75" stop-color="#009e4d"/><stop offset="1" stop-color="#009e45"/></linearGradient>
<linearGradient id="cb110" gradientUnits="userSpaceOnUse" x1="1381.2" y1="271.3" x2="1297.6" y2="247.0"><stop offset="0" stop-color="#ffffff"/><stop offset="0.1" stop-color="#e1fff3"/><stop offset="0.22" stop-color="#bfffe6"/><stop offset="0.4" stop-color="#91ffd5"/><stop offset="0.6" stop-color="#60ffc3"/><stop offset="0.8" stop-color="#32ffb3"/><stop offset="1" stop-color="#00ffa5"/></linearGradient>
<linearGradient id="cd110" gradientUnits="userSpaceOnUse" x1="1304.2" y1="248.9" x2="1183.8" y2="213.8"><stop offset="0" stop-color="#0d9e6a"/><stop offset="0.25" stop-color="#009e5b"/><stop offset="0.5" stop-color="#009e4f"/><stop offset="0.75" stop-color="#009e44"/><stop offset="1" stop-color="#009e3c"/></linearGradient>
<linearGradient id="cb111" gradientUnits="userSpaceOnUse" x1="1381.2" y1="271.3" x2="1297.0" y2="242.7"><stop offset="0" stop-color="#ffffff"/><stop offset="0.1" stop-color="#e1fff2"/><stop offset="0.22" stop-color="#bfffe4"/><stop offset="0.4" stop-color="#90ffd0"/><stop offset="0.6" stop-color="#5fffbd"/><stop offset="0.8" stop-color="#32ffab"/><stop offset="1" stop-color="#00ff9c"/></linearGradient>
<linearGradient id="cd111" gradientUnits="userSpaceOnUse" x1="1303.8" y1="245.0" x2="1183.7" y2="204.3"><stop offset="0" stop-color="#0d9e64"/><stop offset="0.25" stop-color="#009e55"/><stop offset="0.5" stop-color="#009e47"/><stop offset="0.75" stop-color="#009e3c"/><stop offset="1" stop-color="#009e33"/></linearGradient>
<linearGradient id="cb112" gradientUnits="userSpaceOnUse" x1="1381.2" y1="271.3" x2="1296.4" y2="238.8"><stop offset="0" stop-color="#ffffff"/><stop offset="0.1" stop-color="#e1fff1"/><stop offset="0.22" stop-color="#beffe1"/><stop offset="0.4" stop-color="#8fffcc"/><stop offset="0.6" stop-color="#5fffb7"/><stop offset="0.8" stop-color="#31ffa4"/><stop offset="1" stop-color="#00ff94"/></linearGradient>
<linearGradient id="cd112" gradientUnits="userSpaceOnUse" x1="1303.1" y1="241.3" x2="1183.9" y2="195.6"><stop offset="0" stop-color="#0d9e5f"/><stop offset="0.25" stop-color="#009e4f"/><stop offset="0.5" stop-color="#009e41"/><stop offset="0.75" stop-color="#009e34"/><stop offset="1" stop-color="#009e2b"/></linearGradient>
<linearGradient id="cb113" gradientUnits="userSpaceOnUse" x1="1381.2" y1="271.3" x2="1295.9" y2="235.1"><stop offset="0" stop-color="#ffffff"/><stop offset="0.1" stop-color="#e0fff0"/><stop offset="0.22" stop-color="#beffdf"/><stop offset="0.4" stop-color="#8fffc8"/><stop offset="0.6" stop-color="#5effb2"/><stop offset="0.8" stop-color="#31ff9e"/><stop offset="1" stop-color="#00ff8c"/></linearGradient>
<linearGradient id="cd113" gradientUnits="userSpaceOnUse" x1="1302.7" y1="238.0" x2="1183.8" y2="187.5"><stop offset="0" stop-color="#0d9e5b"/><stop offset="0.25" stop-color="#009e49"/><stop offset="0.5" stop-color="#009e3a"/><stop offset="0.75" stop-color="#009e2d"/><stop offset="1" stop-color="#009e23"/></linearGradient>
<linearGradient id="cb114" gradientUnits="userSpaceOnUse" x1="1381.2" y1="271.3" x2="1295.4" y2="231.3"><stop offset="0" stop-color="#ffffff"/><stop offset="0.1" stop-color="#e0ffef"/><stop offset="0.22" stop-color="#beffdd"/><stop offset="0.4" stop-color="#8effc4"/><stop offset="0.6" stop-color="#5effac"/><stop offset="0.8" stop-color="#30ff97"/><stop offset="1" stop-color="#00ff84"/></linearGradient>
<linearGradient id="cd114" gradientUnits="userSpaceOnUse" x1="1302.3" y1="234.5" x2="1183.7" y2="179.2"><stop offset="0" stop-color="#0d9e56"/><stop offset="0.25" stop-color="#009e44"/><stop offset="0.5" stop-color="#009e34"/><stop offset="0.75" stop-color="#009e26"/><stop offset="1" stop-color="#009e1b"/></linearGradient>
<linearGradient id="cb115" gradientUnits="userSpaceOnUse" x1="1381.2" y1="271.3" x2="1294.8" y2="227.3"><stop offset="0" stop-color="#ffffff"/><stop offset="0.1" stop-color="#e0ffee"/><stop offset="0.22" stop-color="#bdffda"/><stop offset="0.4" stop-color="#8dffc0"/><stop offset="0.6" stop-color="#5dffa7"/><stop offset="0.8" stop-color="#30ff90"/><stop offset="1" stop-color="#00ff7c"/></linearGradient>
<linearGradient id="cd115" gradientUnits="userSpaceOnUse" x1="1301.8" y1="230.8" x2="1183.6" y2="170.6"><stop offset="0" stop-color="#0d9e52"/><stop offset="0.25" stop-color="#009e3e"/><stop offset="0.5" stop-color="#009e2d"/><stop offset="0.75" stop-color="#009e1f"/><stop offset="1" stop-color="#009e13"/></linearGradient>
<linearGradient id="cb116" gradientUnits="userSpaceOnUse" x1="1381.2" y1="271.3" x2="1294.2" y2="223.6"><stop offset="0" stop-color="#ffffff"/><stop offset="0.1" stop-color="#dfffed"/><stop offset="0.22" stop-color="#bdffd8"/><stop offset="0.4" stop-color="#8dffbc"/><stop offset="0.6" stop-color="#5dffa1"/><stop offset="0.8" stop-color="#30ff8a"/><stop offset="1" stop-color="#00ff74"/></linearGradient>
<linearGradient id="cd116" gradientUnits="userSpaceOnUse" x1="1301.1" y1="227.4" x2="1184.0" y2="163.1"><stop offset="0" stop-color="#0d9e4d"/><stop offset="0.25" stop-color="#009e39"/><stop offset="0.5" stop-color="#009e27"/><stop offset="0.75" stop-color="#009e18"/><stop offset="1" stop-color="#009e0b"/></linearGradient>
<linearGradient id="cb117" gradientUnits="userSpaceOnUse" x1="1381.2" y1="271.3" x2="1293.7" y2="219.8"><stop offset="0" stop-color="#ffffff"/><stop offset="0.1" stop-color="#dfffeb"/><stop offset="0.22" stop-color="#bcffd6"/><stop offset="0.4" stop-color="#8cffb9"/><stop offset="0.6" stop-color="#5cff9c"/><stop offset="0.8" stop-color="#2fff83"/><stop offset="1" stop-color="#00ff6d"/></linearGradient>
<linearGradient id="cd117" gradientUnits="userSpaceOnUse" x1="1300.9" y1="224.0" x2="1183.4" y2="154.8"><stop offset="0" stop-color="#0d9e49"/><stop offset="0.25" stop-color="#009e34"/><stop offset="0.5" stop-color="#009e21"/><stop offset="0.75" stop-color="#009e10"/><stop offset="1" stop-color="#009e02"/></linearGradient>
<linearGradient id="cb118" gradientUnits="userSpaceOnUse" x1="1381.2" y1="271.3" x2="1293.0" y2="215.1"><stop offset="0" stop-color="#ffffff"/><stop offset="0.1" stop-color="#dfffea"/><stop offset="0.22" stop-color="#bcffd3"/><stop offset="0.4" stop-color="#8cffb4"/><stop offset="0.6" stop-color="#5cff96"/><stop offset="0.8" stop-color="#2fff7b"/><stop offset="1" stop-color="#00ff63"/></linearGradient>
<linearGradient id="cd118" gradientUnits="userSpaceOnUse" x1="1300.4" y1="219.8" x2="1183.3" y2="145.2"><stop offset="0" stop-color="#0d9e44"/><stop offset="0.25" stop-color="#009e2d"/><stop offset="0.5" stop-color="#009e1a"/><stop offset="0.75" stop-color="#009e07"/><stop offset="1" stop-color="#009e00"/></linearGradient>
<linearGradient id="cb119" gradientUnits="userSpaceOnUse" x1="1381.2" y1="271.3" x2="1292.4" y2="210.8"><stop offset="0" stop-color="#ffffff"/><stop offset="0.1" stop-color="#dfffe9"/><stop offset="0.22" stop-color="#bbffd0"/><stop offset="0.4" stop-color="#8bffb0"/><stop offset="0.6" stop-color="#5bff90"/><stop offset="0.8" stop-color="#2fff74"/><stop offset="1" stop-color="#00ff5b"/></linearGradient>
<linearGradient id="cd119" gradientUnits="userSpaceOnUse" x1="1299.6" y1="215.7" x2="1185.5" y2="138.1"><stop offset="0" stop-color="#0d9e3e"/><stop offset="0.25" stop-color="#009e28"/><stop offset="0.5" stop-color="#009e13"/><stop offset="0.75" stop-color="#009e00"/><stop offset="1" stop-color="#009e00"/></linearGradient>
<linearGradient id="cb120" gradientUnits="userSpaceOnUse" x1="1381.2" y1="271.3" x2="1291.8" y2="207.0"><stop offset="0" stop-color="#ffffff"/><stop offset="0.1" stop-color="#deffe8"/><stop offset="0.22" stop-color="#bbffce"/><stop offset="0.4" stop-color="#8affac"/><stop offset="0.6" stop-color="#5aff8b"/><stop offset="0.8" stop-color="#2eff6d"/><stop offset="1" stop-color="#00ff53"/></linearGradient>
<linearGradient id="cd120" gradientUnits="userSpaceOnUse" x1="1299.1" y1="212.2" x2="1191.7" y2="134.9"><stop offset="0" stop-color="#0d9e3a"/><stop offset="0.25" stop-color="#009e24"/><stop offset="0.5" stop-color="#009e0f"/><stop offset="0.75" stop-color="#009e00"/><stop offset="1" stop-color="#009e00"/></linearGradient>
<linearGradient id="cb121" gradientUnits="userSpaceOnUse" x1="1381.2" y1="271.3" x2="1291.2" y2="202.9"><stop offset="0" stop-color="#ffffff"/><stop offset="0.1" stop-color="#deffe6"/><stop offset="0.22" stop-color="#baffcc"/><stop offset="0.4" stop-color="#8affa8"/><stop offset="0.6" stop-color="#5aff85"/><stop offset="0.8" stop-color="#2eff67"/><stop offset="1" stop-color="#00ff4b"/></linearGradient>
<linearGradient id="cd121" gradientUnits="userSpaceOnUse" x1="1298.6" y1="208.5" x2="1202.1" y2="135.1"><stop offset="0" stop-color="#0d9e35"/><stop offset="0.25" stop-color="#009e20"/><stop offset="0.5" stop-color="#009e0d"/><stop offset="0.75" stop-color="#009e00"/><stop offset="1" stop-color="#009e00"/></linearGradient>
<linearGradient id="cb122" gradientUnits="userSpaceOnUse" x1="1381.2" y1="271.3" x2="1290.6" y2="198.6"><stop offset="0" stop-color="#ffffff"/><stop offset="0.1" stop-color="#deffe5"/><stop offset="0.22" stop-color="#baffc9"/><stop offset="0.4" stop-color="#89ffa4"/><stop offset="0.6" stop-color="#59ff7f"/><stop offset="0.8" stop-color="#2eff60"/><stop offset="1" stop-color="#00ff43"/></linearGradient>
<linearGradient id="cd122" gradientUnits="userSpaceOnUse" x1="1298.1" y1="204.6" x2="1212.0" y2="135.5"><stop offset="0" stop-color="#0d9e31"/><stop offset="0.25" stop-color="#009e1d"/><stop offset="0.5" stop-color="#009e0a"/><stop offset="0.75" stop-color="#009e00"/><stop offset="1" stop-color="#009e00"/></linearGradient>
<linearGradient id="cb123" gradientUnits="userSpaceOnUse" x1="1381.2" y1="271.3" x2="1289.9" y2="194.0"><stop offset="0" stop-color="#ffffff"/><stop offset="0.1" stop-color="#ddffe4"/><stop offset="0.22" stop-color="#b9ffc6"/><stop offset="0.4" stop-color="#88ff9f"/><stop offset="0.6" stop-color="#59ff79"/><stop offset="0.8" stop-color="#2dff58"/><stop offset="1" stop-color="#00ff3a"/></linearGradient>
<linearGradient id="cd123" gradientUnits="userSpaceOnUse" x1="1297.5" y1="200.5" x2="1221.5" y2="136.1"><stop offset="0" stop-color="#0d9e2c"/><stop offset="0.25" stop-color="#009e19"/><stop offset="0.5" stop-color="#009e07"/><stop offset="0.75" stop-color="#009e00"/><stop offset="1" stop-color="#009e00"/></linearGradient>
<linearGradient id="cb124" gradientUnits="userSpaceOnUse" x1="1381.2" y1="271.3" x2="1289.3" y2="190.0"><stop offset="0" stop-color="#ffffff"/><stop offset="0.1" stop-color="#ddffe3"/><stop offset="0.22" stop-color="#b9ffc4"/><stop offset="0.4" stop-color="#88ff9b"/><stop offset="0.6" stop-color="#58ff74"/><stop offset="0.8" stop-color="#2dff52"/><stop offset="1" stop-color="#00ff32"/></linearGradient>
<linearGradient id="cd124" gradientUnits="userSpaceOnUse" x1="1296.6" y1="196.5" x2="1229.9" y2="137.4"><stop offset="0" stop-color="#0c9e27"/><stop offset="0.25" stop-color="#009e16"/><stop offset="0.5" stop-color="#009e05"/><stop offset="0.75" stop-color="#009e00"/><stop offset="1" stop-color="#009e00"/></linearGradient>
<linearGradient id="cb125" gradientUnits="userSpaceOnUse" x1="1381.2" y1="271.3" x2="1288.8" y2="186.7"><stop offset="0" stop-color="#ffffff"/><stop offset="0.1" stop-color="#ddffe2"/><stop offset="0.22" stop-color="#b8ffc2"/><stop offset="0.4" stop-color="#87ff98"/><stop offset="0.6" stop-color="#58ff70"/><stop offset="0.8" stop-color="#2dff4c"/><stop offset="1" stop-color="#00ff2c"/></linearGradient>
<linearGradient id="cd125" gradientUnits="userSpaceOnUse" x1="1296.2" y1="193.4" x2="1235.6" y2="137.9"><stop offset="0" stop-color="#0c9e23"/><stop offset="0.25" stop-color="#009e13"/><stop offset="0.5" stop-color="#009e03"/><stop offset="0.75" stop-color="#009e00"/><stop offset="1" stop-color="#009e00"/></linearGradient>
<linearGradient id="cb126" gradientUnits="userSpaceOnUse" x1="1381.2" y1="271.3" x2="1288.3" y2="183.2"><stop offset="0" stop-color="#ffffff"/><stop offset="0.1" stop-color="#ddffe1"/><stop offset="0.22" stop-color="#b8ffc0"/><stop offset="0.4" stop-color="#87ff95"/><stop offset="0.6" stop-color="#57ff6b"/><stop offset="0.8" stop-color="#2cff47"/><stop offset="1" stop-color="#00ff25"/></linearGradient>
<linearGradient id="cd126" gradientUnits="userSpaceOnUse" x1="1295.8" y1="190.2" x2="1241.1" y2="138.3"><stop offset="0" stop-color="#0c9e1f"/><stop offset="0.25" stop-color="#009e10"/><stop offset="0.5" stop-color="#009e00"/><stop offset="0.75" stop-color="#009e00"/><stop offset="1" stop-color="#009e00"/></linearGradient>
<linearGradient id="cb127" gradientUnits="userSpaceOnUse" x1="1381.2" y1="271.3" x2="1287.8" y2="179.5"><stop offset="0" stop-color="#ffffff"/><stop offset="0.1" stop-color="#dcffe0"/><stop offset="0.22" stop-color="#b7ffbe"/><stop offset="0.4" stop-color="#86ff91"/><stop offset="0.6" stop-color="#57ff67"/><stop offset="0.8" stop-color="#2cff41"/><stop offset="1" stop-color="#00ff1e"/></linearGradient>
<linearGradient id="cd127" gradientUnits="userSpaceOnUse" x1="1295.3" y1="186.9" x2="1246.4" y2="138.8"><stop offset="0" stop-color="#0c9e1b"/><stop offset="0.25" stop-color="#009e0d"/><stop offset="0.5" stop-color="#009e00"/><stop offset="0.75" stop-color="#009e00"/><stop offset="1" stop-color="#009e00"/></linearGradient>
<linearGradient id="cb128" gradientUnits="userSpaceOnUse" x1="1381.2" y1="271.3" x2="1287.2" y2="175.7"><stop offset="0" stop-color="#ffffff"/><stop offset="0.1" stop-color="#dcffdf"/><stop offset="0.22" stop-color="#b7ffbc"/><stop offset="0.4" stop-color="#86ff8e"/><stop offset="0.6" stop-color="#56ff62"/><stop offset="0.8" stop-color="#2cff3b"/><stop offset="1" stop-color="#00ff16"/></linearGradient>
<linearGradient id="cd128" gradientUnits="userSpaceOnUse" x1="1294.8" y1="183.4" x2="1251.5" y2="139.3"><stop offset="0" stop-color="#0c9e17"/><stop offset="0.25" stop-color="#009e0a"/><stop offset="0.5" stop-color="#009e00"/><stop offset="0.75" stop-color="#009e00"/><stop offset="1" stop-color="#009e00"/></linearGradient>
<linearGradient id="cb129" gradientUnits="userSpaceOnUse" x1="1381.2" y1="271.3" x2="1286.6" y2="171.7"><stop offset="0" stop-color="#ffffff"/><stop offset="0.1" stop-color="#dcffdd"/><stop offset="0.22" stop-color="#b7ffb9"/><stop offset="0.4" stop-color="#85ff8a"/><stop offset="0.6" stop-color="#56ff5c"/><stop offset="0.8" stop-color="#2cff34"/><stop offset="1" stop-color="#00ff0e"/></linearGradient>
<linearGradient id="cd129" gradientUnits="userSpaceOnUse" x1="1294.3" y1="179.8" x2="1256.4" y2="139.8"><stop offset="0" stop-color="#0c9e12"/><stop offset="0.25" stop-color="#009e06"/><stop offset="0.5" stop-color="#009e00"/><stop offset="0.75" stop-color="#009e00"/><stop offset="1" stop-color="#009e00"/></linearGradient>
<linearGradient id="cb130" gradientUnits="userSpaceOnUse" x1="1381.2" y1="271.3" x2="1285.9" y2="166.4"><stop offset="0" stop-color="#ffffff"/><stop offset="0.1" stop-color="#dcffdc"/><stop offset="0.22" stop-color="#b6ffb6"/><stop offset="0.4" stop-color="#85ff85"/><stop offset="0.6" stop-color="#55ff56"/><stop offset="0.8" stop-color="#2bff2b"/><stop offset="1" stop-color="#00ff01"/></linearGradient>
<linearGradient id="cd130" gradientUnits="userSpaceOnUse" x1="1294.2" y1="175.6" x2="1261.7" y2="139.7"><stop offset="0" stop-color="#0d9e0d"/><stop offset="0.25" stop-color="#019e01"/><stop offset="0.5" stop-color="#009e00"/><stop offset="0.75" stop-color="#009e00"/><stop offset="1" stop-color="#009e00"/></linearGradient>
<linearGradient id="cb131" gradientUnits="userSpaceOnUse" x1="1381.2" y1="271.3" x2="1290.2" y2="166.6"><stop offset="0" stop-color="#ffffff"/><stop offset="0.1" stop-color="#ddffdc"/><stop offset="0.22" stop-color="#b9ffb7"/><stop offset="0.4" stop-color="#89ff85"/><stop offset="0.6" stop-color="#5cff56"/><stop offset="0.8" stop-color="#33ff2b"/><stop offset="1" stop-color="#0dff00"/></linearGradient>
<linearGradient id="cd131" gradientUnits="userSpaceOnUse" x1="1297.3" y1="174.8" x2="1267.9" y2="141.0"><stop offset="0" stop-color="#119e0b"/><stop offset="0.25" stop-color="#089e00"/><stop offset="0.5" stop-color="#009e00"/><stop offset="0.75" stop-color="#009e00"/><stop offset="1" stop-color="#009e00"/></linearGradient>
<linearGradient id="cb132" gradientUnits="userSpaceOnUse" x1="1381.2" y1="271.3" x2="1293.6" y2="167.0"><stop offset="0" stop-color="#ffffff"/><stop offset="0.1" stop-color="#deffdc"/><stop offset="0.22" stop-color="#bbffb7"/><stop offset="0.4" stop-color="#8dff86"/><stop offset="0.6" stop-color="#61ff56"/><stop offset="0.8" stop-color="#3aff2c"/><stop offset="1" stop-color="#16ff00"/></linearGradient>
<linearGradient id="cd132" gradientUnits="userSpaceOnUse" x1="1300.5" y1="175.1" x2="1272.2" y2="141.4"><stop offset="0" stop-color="#169e0b"/><stop offset="0.25" stop-color="#0d9e00"/><stop offset="0.5" stop-color="#039e00"/><stop offset="0.75" stop-color="#009e00"/><stop offset="1" stop-color="#009e00"/></linearGradient>
<linearGradient id="cb133" gradientUnits="userSpaceOnUse" x1="1381.2" y1="271.3" x2="1297.0" y2="167.3"><stop offset="0" stop-color="#ffffff"/><stop offset="0.1" stop-color="#dfffdd"/><stop offset="0.22" stop-color="#bdffb7"/><stop offset="0.4" stop-color="#91ff86"/><stop offset="0.6" stop-color="#66ff57"/><stop offset="0.8" stop-color="#40ff2c"/><stop offset="1" stop-color="#1eff00"/></linearGradient>
<linearGradient id="cd133" gradientUnits="userSpaceOnUse" x1="1303.5" y1="175.4" x2="1276.4" y2="141.9"><stop offset="0" stop-color="#1b9e0c"/><stop offset="0.25" stop-color="#129e00"/><stop offset="0.5" stop-color="#099e00"/><stop offset="0.75" stop-color="#009e00"/><stop offset="1" stop-color="#009e00"/></linearGradient>
<linearGradient id="cb134" gradientUnits="userSpaceOnUse" x1="1381.2" y1="271.3" x2="1300.2" y2="167.6"><stop offset="0" stop-color="#ffffff"/><stop offset="0.1" stop-color="#e0ffdd"/><stop offset="0.22" stop-color="#c0ffb8"/><stop offset="0.4" stop-color="#94ff87"/><stop offset="0.6" stop-color="#6bff57"/><stop offset="0.8" stop-color="#46ff2c"/><stop offset="1" stop-color="#25ff00"/></linearGradient>
<linearGradient id="cd134" gradientUnits="userSpaceOnUse" x1="1306.5" y1="175.7" x2="1280.4" y2="142.3"><stop offset="0" stop-color="#1f9e0c"/><stop offset="0.25" stop-color="#179e00"/><stop offset="0.5" stop-color="#0f9e00"/><stop offset="0.75" stop-color="#069e00"/><stop offset="1" stop-color="#019e00"/></linearGradient>
<linearGradient id="cb135" gradientUnits="userSpaceOnUse" x1="1381.2" y1="271.3" x2="1303.3" y2="168.0"><stop offset="0" stop-color="#ffffff"/><stop offset="0.1" stop-color="#e1ffdd"/><stop offset="0.22" stop-color="#c2ffb8"/><stop offset="0.4" stop-color="#98ff87"/><stop offset="0.6" stop-color="#70ff58"/><stop offset="0.8" stop-color="#4cff2d"/><stop offset="1" stop-color="#2cff00"/></linearGradient>
<linearGradient id="cd135" gradientUnits="userSpaceOnUse" x1="1309.4" y1="176.0" x2="1284.3" y2="142.8"><stop offset="0" stop-color="#239e0c"/><stop offset="0.25" stop-color="#1b9e00"/><stop offset="0.5" stop-color="#149e00"/><stop offset="0.75" stop-color="#0c9e00"/><stop offset="1" stop-color="#079e00"/></linearGradient>
<linearGradient id="cb136" gradientUnits="userSpaceOnUse" x1="1381.2" y1="271.3" x2="1306.3" y2="168.3"><stop offset="0" stop-color="#ffffff"/><stop offset="0.1" stop-color="#e2ffdd"/><stop offset="0.22" stop-color="#c4ffb9"/><stop offset="0.4" stop-color="#9bff88"/><stop offset="0.6" stop-color="#74ff58"/><stop offset="0.8" stop-color="#52ff2d"/><stop offset="1" stop-color="#33ff00"/></linearGradient>
<linearGradient id="cd136" gradientUnits="userSpaceOnUse" x1="1312.1" y1="176.2" x2="1288.1" y2="143.2"><stop offset="0" stop-color="#279e0c"/><stop offset="0.25" stop-color="#1f9e00"/><stop offset="0.5" stop-color="#189e00"/><stop offset="0.75" stop-color="#119e00"/><stop offset="1" stop-color="#0d9e00"/></linearGradient>
<linearGradient id="cb137" gradientUnits="userSpaceOnUse" x1="1381.2" y1="271.3" x2="1310.0" y2="168.7"><stop offset="0" stop-color="#ffffff"/><stop offset="0.1" stop-color="#e4ffde"/><stop offset="0.22" stop-color="#c6ffb9"/><stop offset="0.4" stop-color="#9fff88"/><stop offset="0.6" stop-color="#7aff59"/><stop offset="0.8" stop-color="#59ff2d"/><stop offset="1" stop-color="#3bff00"/></linearGradient>
<linearGradient id="cd137" gradientUnits="userSpaceOnUse" x1="1315.7" y1="176.9" x2="1292.3" y2="143.2"><stop offset="0" stop-color="#2c9e0c"/><stop offset="0.25" stop-color="#259e00"/><stop offset="0.5" stop-color="#1e9e00"/><stop offset="0.75" stop-color="#179e00"/><stop offset="1" stop-color="#139e00"/></linearGradient>
<linearGradient id="cb138" gradientUnits="userSpaceOnUse" x1="1381.2" y1="271.3" x2="1313.5" y2="169.0"><stop offset="0" stop-color="#ffffff"/><stop offset="0.1" stop-color="#e5ffde"/><stop offset="0.22" stop-color="#c9ffb9"/><stop offset="0.4" stop-color="#a3ff89"/><stop offset="0.6" stop-color="#7fff59"/><stop offset="0.8" stop-color="#60ff2d"/><stop offset="1" stop-color="#43ff00"/></linearGradient>
<linearGradient id="cd138" gradientUnits="userSpaceOnUse" x1="1318.7" y1="176.9" x2="1297.1" y2="144.2"><stop offset="0" stop-color="#309e0c"/><stop offset="0.25" stop-color="#2a9e00"/><stop offset="0.5" stop-color="#239e00"/><stop offset="0.75" stop-color="#1d9e00"/><stop offset="1" stop-color="#199e00"/></linearGradient>
<linearGradient id="cb139" gradientUnits="userSpaceOnUse" x1="1381.2" y1="271.3" x2="1316.9" y2="169.4"><stop offset="0" stop-color="#ffffff"/><stop offset="0.1" stop-color="#e6ffde"/><stop offset="0.22" stop-color="#cbffba"/><stop offset="0.4" stop-color="#a7ff89"/><stop offset="0.6" stop-color="#85ff59"/><stop offset="0.8" stop-color="#66ff2e"/><stop offset="1" stop-color="#4bff00"/></linearGradient>
<linearGradient id="cd139" gradientUnits="userSpaceOnUse" x1="1322.0" y1="177.5" x2="1301.0" y2="144.3"><stop offset="0" stop-color="#359e0c"/><stop offset="0.25" stop-color="#2e9e00"/><stop offset="0.5" stop-color="#289e00"/><stop offset="0.75" stop-color="#229e00"/><stop offset="1" stop-color="#1f9e00"/></linearGradient>
<linearGradient id="cb140" gradientUnits="userSpaceOnUse" x1="1381.2" y1="271.3" x2="1320.8" y2="169.8"><stop offset="0" stop-color="#ffffff"/><stop offset="0.1" stop-color="#e7ffde"/><stop offset="0.22" stop-color="#ceffba"/><stop offset="0.4" stop-color="#acff8a"/><stop offset="0.6" stop-color="#8bff5a"/><stop offset="0.8" stop-color="#6eff2e"/><stop offset="1" stop-color="#54ff00"/></linearGradient>
<linearGradient id="cd140" gradientUnits="userSpaceOnUse" x1="1325.6" y1="177.8" x2="1306.0" y2="144.9"><stop offset="0" stop-color="#3a9e0c"/><stop offset="0.25" stop-color="#349e00"/><stop offset="0.5" stop-color="#2e9e00"/><stop offset="0.75" stop-color="#289e00"/><stop offset="1" stop-color="#259e00"/></linearGradient>
<linearGradient id="cb141" gradientUnits="userSpaceOnUse" x1="1381.2" y1="271.3" x2="1324.6" y2="170.2"><stop offset="0" stop-color="#ffffff"/><stop offset="0.1" stop-color="#e9ffdf"/><stop offset="0.22" stop-color="#d0ffbb"/><stop offset="0.4" stop-color="#b0ff8b"/><stop offset="0.6" stop-color="#91ff5b"/><stop offset="0.8" stop-color="#75ff2e"/><stop offset="1" stop-color="#5dff00"/></linearGradient>
<linearGradient id="cd141" gradientUnits="userSpaceOnUse" x1="1329.0" y1="178.1" x2="1310.7" y2="145.4"><stop offset="0" stop-color="#3f9e0c"/><stop offset="0.25" stop-color="#399e00"/><stop offset="0.5" stop-color="#349e00"/><stop offset="0.75" stop-color="#2e9e00"/><stop offset="1" stop-color="#2b9e00"/></linearGradient>
<linearGradient id="cb142" gradientUnits="userSpaceOnUse" x1="1381.2" y1="271.3" x2="1328.2" y2="170.5"><stop offset="0" stop-color="#ffffff"/><stop offset="0.1" stop-color="#eaffdf"/><stop offset="0.22" stop-color="#d3ffbb"/><stop offset="0.4" stop-color="#b4ff8b"/><stop offset="0.6" stop-color="#96ff5b"/><stop offset="0.8" stop-color="#7cff2f"/><stop offset="1" stop-color="#65ff00"/></linearGradient>
<linearGradient id="cd142" gradientUnits="userSpaceOnUse" x1="1332.3" y1="178.4" x2="1315.3" y2="146.0"><stop offset="0" stop-color="#449e0c"/><stop offset="0.25" stop-color="#3e9e00"/><stop offset="0.5" stop-color="#399e00"/><stop offset="0.75" stop-color="#349e00"/><stop offset="1" stop-color="#319e00"/></linearGradient>
<linearGradient id="cb143" gradientUnits="userSpaceOnUse" x1="1381.2" y1="271.3" x2="1331.7" y2="170.9"><stop offset="0" stop-color="#ffffff"/><stop offset="0.1" stop-color="#ebffdf"/><stop offset="0.22" stop-color="#d5ffbc"/><stop offset="0.4" stop-color="#b8ff8c"/><stop offset="0.6" stop-color="#9cff5c"/><stop offset="0.8" stop-color="#83ff2f"/><stop offset="1" stop-color="#6dff00"/></linearGradient>
<linearGradient id="cd143" gradientUnits="userSpaceOnUse" x1="1335.5" y1="178.7" x2="1319.7" y2="146.6"><stop offset="0" stop-color="#499e0c"/><stop offset="0.25" stop-color="#439e00"/><stop offset="0.5" stop-color="#3e9e00"/><stop offset="0.75" stop-color="#399e00"/><stop offset="1" stop-color="#379e00"/></linearGradient>
<linearGradient id="cb144" gradientUnits="userSpaceOnUse" x1="1381.2" y1="271.3" x2="1335.1" y2="171.3"><stop offset="0" stop-color="#ffffff"/><stop offset="0.1" stop-color="#ecffdf"/><stop offset="0.22" stop-color="#d8ffbc"/><stop offset="0.4" stop-color="#bcff8c"/><stop offset="0.6" stop-color="#a1ff5c"/><stop offset="0.8" stop-color="#8aff2f"/><stop offset="1" stop-color="#75ff00"/></linearGradient>
<linearGradient id="cd144" gradientUnits="userSpaceOnUse" x1="1338.6" y1="179.0" x2="1323.9" y2="147.1"><stop offset="0" stop-color="#4d9e0c"/><stop offset="0.25" stop-color="#489e00"/><stop offset="0.5" stop-color="#449e00"/><stop offset="0.75" stop-color="#3f9e00"/><stop offset="1" stop-color="#3d9e00"/></linearGradient>
<linearGradient id="cb145" gradientUnits="userSpaceOnUse" x1="1381.2" y1="271.3" x2="1338.4" y2="171.6"><stop offset="0" stop-color="#ffffff"/><stop offset="0.1" stop-color="#edffe0"/><stop offset="0.22" stop-color="#daffbd"/><stop offset="0.4" stop-color="#c0ff8d"/><stop offset="0.6" stop-color="#a7ff5d"/><stop offset="0.8" stop-color="#90ff30"/><stop offset="1" stop-color="#7dff00"/></linearGradient>
<linearGradient id="cd145" gradientUnits="userSpaceOnUse" x1="1341.6" y1="179.2" x2="1328.0" y2="147.6"><stop offset="0" stop-color="#529e0c"/><stop offset="0.25" stop-color="#4d9e00"/><stop offset="0.5" stop-color="#499e00"/><stop offset="0.75" stop-color="#449e00"/><stop offset="1" stop-color="#429e00"/></linearGradient>
<linearGradient id="cb146" gradientUnits="userSpaceOnUse" x1="1381.2" y1="271.3" x2="1341.5" y2="171.9"><stop offset="0" stop-color="#ffffff"/><stop offset="0.1" stop-color="#eeffe0"/><stop offset="0.22" stop-color="#dcffbd"/><stop offset="0.4" stop-color="#c4ff8d"/><stop offset="0.6" stop-color="#acff5d"/><stop offset="0.8" stop-color="#97ff30"/><stop offset="1" stop-color="#84ff00"/></linearGradient>
<linearGradient id="cd146" gradientUnits="userSpaceOnUse" x1="1344.6" y1="179.5" x2="1332.0" y2="148.1"><stop offset="0" stop-color="#569e0c"/><stop offset="0.25" stop-color="#529e00"/><stop offset="0.5" stop-color="#4e9e00"/><stop offset="0.75" stop-color="#499e00"/><stop offset="1" stop-color="#479e00"/></linearGradient>
<linearGradient id="cb147" gradientUnits="userSpaceOnUse" x1="1381.2" y1="271.3" x2="1344.6" y2="172.3"><stop offset="0" stop-color="#ffffff"/><stop offset="0.1" stop-color="#efffe0"/><stop offset="0.22" stop-color="#deffbd"/><stop offset="0.4" stop-color="#c7ff8e"/><stop offset="0.6" stop-color="#b1ff5d"/><stop offset="0.8" stop-color="#9dff30"/><stop offset="1" stop-color="#8cff00"/></linearGradient>
<linearGradient id="cd147" gradientUnits="userSpaceOnUse" x1="1347.4" y1="179.8" x2="1335.9" y2="148.6"><stop offset="0" stop-color="#5b9e0c"/><stop offset="0.25" stop-color="#569e00"/><stop offset="0.5" stop-color="#529e00"/><stop offset="0.75" stop-color="#4f9e00"/><stop offset="1" stop-color="#4d9e00"/></linearGradient>
<linearGradient id="cb148" gradientUnits="userSpaceOnUse" x1="1381.2" y1="271.3" x2="1347.7" y2="172.6"><stop offset="0" stop-color="#ffffff"/><stop offset="0.1" stop-color="#f0ffe0"/><stop offset="0.22" stop-color="#e1ffbe"/><stop offset="0.4" stop-color="#cbff8e"/><stop offset="0.6" stop-color="#b6ff5e"/><stop offset="0.8" stop-color="#a3ff31"/><stop offset="1" stop-color="#93ff00"/></linearGradient>
<linearGradient id="cd148" gradientUnits="userSpaceOnUse" x1="1350.2" y1="180.0" x2="1339.7" y2="149.1"><stop offset="0" stop-color="#5f9e0c"/><stop offset="0.25" stop-color="#5b9e00"/><stop offset="0.5" stop-color="#579e00"/><stop offset="0.75" stop-color="#549e00"/><stop offset="1" stop-color="#529e00"/></linearGradient>
<linearGradient id="cb149" gradientUnits="userSpaceOnUse" x1="1381.2" y1="271.3" x2="1350.6" y2="172.9"><stop offset="0" stop-color="#ffffff"/><stop offset="0.1" stop-color="#f1ffe1"/><stop offset="0.22" stop-color="#e3ffbe"/><stop offset="0.4" stop-color="#cfff8f"/><stop offset="0.6" stop-color="#bbff5e"/><stop offset="0.8" stop-color="#aaff31"/><stop offset="1" stop-color="#9aff00"/></linearGradient>
<linearGradient id="cd149" gradientUnits="userSpaceOnUse" x1="1352.9" y1="180.3" x2="1343.4" y2="149.5"><stop offset="0" stop-color="#639e0c"/><stop offset="0.25" stop-color="#5f9e00"/><stop offset="0.5" stop-color="#5c9e00"/><stop offset="0.75" stop-color="#589e00"/><stop offset="1" stop-color="#579e00"/></linearGradient>
<linearGradient id="cb150" gradientUnits="userSpaceOnUse" x1="1381.2" y1="271.3" x2="1354.0" y2="173.2"><stop offset="0" stop-color="#ffffff"/><stop offset="0.1" stop-color="#f3ffe1"/><stop offset="0.22" stop-color="#e5ffbf"/><stop offset="0.4" stop-color="#d3ff8f"/><stop offset="0.6" stop-color="#c1ff5f"/><stop offset="0.8" stop-color="#b1ff31"/><stop offset="1" stop-color="#a2ff00"/></linearGradient>
<linearGradient id="cd150" gradientUnits="userSpaceOnUse" x1="1356.1" y1="180.7" x2="1347.5" y2="149.9"><stop offset="0" stop-color="#689e0d"/><stop offset="0.25" stop-color="#649e00"/><stop offset="0.5" stop-color="#619e00"/><stop offset="0.75" stop-color="#5e9e00"/><stop offset="1" stop-color="#5d9e00"/></linearGradient>
<linearGradient id="cb151" gradientUnits="userSpaceOnUse" x1="1381.2" y1="271.3" x2="1357.7" y2="173.6"><stop offset="0" stop-color="#ffffff"/><stop offset="0.1" stop-color="#f4ffe1"/><stop offset="0.22" stop-color="#e8ffbf"/><stop offset="0.4" stop-color="#d7ff90"/><stop offset="0.6" stop-color="#c7ff60"/><stop offset="0.8" stop-color="#b8ff32"/><stop offset="1" stop-color="#abff00"/></linearGradient>
<linearGradient id="cd151" gradientUnits="userSpaceOnUse" x1="1359.5" y1="181.0" x2="1352.2" y2="150.5"><stop offset="0" stop-color="#6d9e0d"/><stop offset="0.25" stop-color="#6a9e00"/><stop offset="0.5" stop-color="#679e00"/><stop offset="0.75" stop-color="#649e00"/><stop offset="1" stop-color="#639e00"/></linearGradient>
<linearGradient id="cb152" gradientUnits="userSpaceOnUse" x1="1381.2" y1="271.3" x2="1361.4" y2="174.0"><stop offset="0" stop-color="#ffffff"/><stop offset="0.1" stop-color="#f5ffe1"/><stop offset="0.22" stop-color="#eaffc0"/><stop offset="0.4" stop-color="#dcff91"/><stop offset="0.6" stop-color="#cdff60"/><stop offset="0.8" stop-color="#c0ff32"/><stop offset="1" stop-color="#b5ff00"/></linearGradient>
<linearGradient id="cd152" gradientUnits="userSpaceOnUse" x1="1362.9" y1="181.3" x2="1356.7" y2="151.1"><stop offset="0" stop-color="#739e0d"/><stop offset="0.25" stop-color="#709e00"/><stop offset="0.5" stop-color="#6d9e00"/><stop offset="0.75" stop-color="#6b9e00"/><stop offset="1" stop-color="#6a9e00"/></linearGradient>
<linearGradient id="cb153" gradientUnits="userSpaceOnUse" x1="1381.2" y1="271.3" x2="1365.0" y2="174.4"><stop offset="0" stop-color="#ffffff"/><stop offset="0.1" stop-color="#f6ffe2"/><stop offset="0.22" stop-color="#edffc0"/><stop offset="0.4" stop-color="#e0ff91"/><stop offset="0.6" stop-color="#d3ff61"/><stop offset="0.8" stop-color="#c8ff32"/><stop offset="1" stop-color="#beff00"/></linearGradient>
<linearGradient id="cd153" gradientUnits="userSpaceOnUse" x1="1366.2" y1="181.6" x2="1361.2" y2="151.7"><stop offset="0" stop-color="#789e0d"/><stop offset="0.25" stop-color="#769e00"/><stop offset="0.5" stop-color="#739e00"/><stop offset="0.75" stop-color="#719e00"/><stop offset="1" stop-color="#709e00"/></linearGradient>
<linearGradient id="cb154" gradientUnits="userSpaceOnUse" x1="1381.2" y1="271.3" x2="1368.5" y2="174.7"><stop offset="0" stop-color="#ffffff"/><stop offset="0.1" stop-color="#f8ffe2"/><stop offset="0.22" stop-color="#f0ffc1"/><stop offset="0.4" stop-color="#e4ff92"/><stop offset="0.6" stop-color="#daff61"/><stop offset="0.8" stop-color="#d0ff33"/><stop offset="1" stop-color="#c7ff00"/></linearGradient>
<linearGradient id="cd154" gradientUnits="userSpaceOnUse" x1="1369.4" y1="181.8" x2="1365.5" y2="152.3"><stop offset="0" stop-color="#7d9e0d"/><stop offset="0.25" stop-color="#7b9e00"/><stop offset="0.5" stop-color="#799e00"/><stop offset="0.75" stop-color="#779e00"/><stop offset="1" stop-color="#769e00"/></linearGradient>
<linearGradient id="cb155" gradientUnits="userSpaceOnUse" x1="1381.2" y1="271.3" x2="1371.9" y2="175.1"><stop offset="0" stop-color="#ffffff"/><stop offset="0.1" stop-color="#f9ffe2"/><stop offset="0.22" stop-color="#f2ffc1"/><stop offset="0.4" stop-color="#e9ff92"/><stop offset="0.6" stop-color="#e0ff62"/><stop offset="0.8" stop-color="#d7ff33"/><stop offset="1" stop-color="#d0ff00"/></linearGradient>
<linearGradient id="cd155" gradientUnits="userSpaceOnUse" x1="1372.6" y1="182.1" x2="1369.8" y2="152.9"><stop offset="0" stop-color="#829e0d"/><stop offset="0.25" stop-color="#819e00"/><stop offset="0.5" stop-color="#7f9e00"/><stop offset="0.75" stop-color="#7e9e00"/><stop offset="1" stop-color="#7d9e00"/></linearGradient>
<linearGradient id="cb156" gradientUnits="userSpaceOnUse" x1="1381.2" y1="271.3" x2="1375.3" y2="175.4"><stop offset="0" stop-color="#ffffff"/><stop offset="0.1" stop-color="#faffe2"/><stop offset="0.22" stop-color="#f5ffc1"/><stop offset="0.4" stop-color="#edff93"/><stop offset="0.6" stop-color="#e6ff62"/><stop offset="0.8" stop-color="#dfff33"/><stop offset="1" stop-color="#d9ff00"/></linearGradient>
<linearGradient id="cd156" gradientUnits="userSpaceOnUse" x1="1375.7" y1="182.4" x2="1374.0" y2="153.4"><stop offset="0" stop-color="#889e0d"/><stop offset="0.25" stop-color="#869e00"/><stop offset="0.5" stop-color="#859e00"/><stop offset="0.75" stop-color="#849e00"/><stop offset="1" stop-color="#839e00"/></linearGradient>
<linearGradient id="cb157" gradientUnits="userSpaceOnUse" x1="1381.2" y1="271.3" x2="1378.7" y2="175.8"><stop offset="0" stop-color="#ffffff"/><stop offset="0.1" stop-color="#fbffe3"/><stop offset="0.22" stop-color="#f7ffc2"/><stop offset="0.4" stop-color="#f1ff94"/><stop offset="0.6" stop-color="#ecff63"/><stop offset="0.8" stop-color="#e7ff34"/><stop offset="1" stop-color="#e2ff00"/></linearGradient>
<linearGradient id="cd157" gradientUnits="userSpaceOnUse" x1="1378.9" y1="182.7" x2="1378.1" y2="154.0"><stop offset="0" stop-color="#8d9e0d"/><stop offset="0.25" stop-color="#8c9e00"/><stop offset="0.5" stop-color="#8b9e00"/><stop offset="0.75" stop-color="#8a9e00"/><stop offset="1" stop-color="#899e00"/></linearGradient>
<linearGradient id="cb158" gradientUnits="userSpaceOnUse" x1="1381.2" y1="271.3" x2="1382.0" y2="176.1"><stop offset="0" stop-color="#ffffff"/><stop offset="0.1" stop-color="#fcffe3"/><stop offset="0.22" stop-color="#faffc2"/><stop offset="0.4" stop-color="#f6ff94"/><stop offset="0.6" stop-color="#f2ff64"/><stop offset="0.8" stop-color="#eeff34"/><stop offset="1" stop-color="#ebff00"/></linearGradient>
<linearGradient id="cd158" gradientUnits="userSpaceOnUse" x1="1382.0" y1="182.9" x2="1382.2" y2="154.6"><stop offset="0" stop-color="#929e0d"/><stop offset="0.25" stop-color="#929e00"/><stop offset="0.5" stop-color="#919e00"/><stop offset="0.75" stop-color="#909e00"/><stop offset="1" stop-color="#909e00"/></linearGradient>
<linearGradient id="cb159" gradientUnits="userSpaceOnUse" x1="1381.2" y1="271.3" x2="1384.9" y2="176.4"><stop offset="0" stop-color="#ffffff"/><stop offset="0.1" stop-color="#fdffe3"/><stop offset="0.22" stop-color="#fcffc3"/><stop offset="0.4" stop-color="#f9ff95"/><stop offset="0.6" stop-color="#f7ff64"/><stop offset="0.8" stop-color="#f5ff35"/><stop offset="1" stop-color="#f3ff00"/></linearGradient>
<linearGradient id="cd159" gradientUnits="userSpaceOnUse" x1="1384.7" y1="183.1" x2="1385.8" y2="155.1"><stop offset="0" stop-color="#979e0d"/><stop offset="0.25" stop-color="#979e00"/><stop offset="0.5" stop-color="#969e00"/><stop offset="0.75" stop-color="#969e00"/><stop offset="1" stop-color="#969e00"/></linearGradient>
<linearGradient id="cb160" gradientUnits="userSpaceOnUse" x1="1381.2" y1="271.3" x2="1388.6" y2="176.8"><stop offset="0" stop-color="#ffffff"/><stop offset="0.1" stop-color="#ffffe3"/><stop offset="0.22" stop-color="#feffc3"/><stop offset="0.4" stop-color="#feff95"/><stop offset="0.6" stop-color="#feff65"/><stop offset="0.8" stop-color="#feff35"/><stop offset="1" stop-color="#fdff00"/></linearGradient>
<linearGradient id="cd160" gradientUnits="userSpaceOnUse" x1="1388.1" y1="183.4" x2="1390.3" y2="155.7"><stop offset="0" stop-color="#9d9e0d"/><stop offset="0.25" stop-color="#9d9e00"/><stop offset="0.5" stop-color="#9d9e00"/><stop offset="0.75" stop-color="#9d9e00"/><stop offset="1" stop-color="#9d9e00"/></linearGradient>
<linearGradient id="cb161" gradientUnits="userSpaceOnUse" x1="1381.2" y1="271.3" x2="1392.7" y2="177.2"><stop offset="0" stop-color="#ffffff"/><stop offset="0.1" stop-color="#fffee3"/><stop offset="0.22" stop-color="#fffdc2"/><stop offset="0.4" stop-color="#fffb94"/><stop offset="0.6" stop-color="#fff963"/><stop offset="0.8" stop-color="#fff734"/><stop offset="1" stop-color="#fff500"/></linearGradient>
<linearGradient id="cd161" gradientUnits="userSpaceOnUse" x1="1391.9" y1="183.8" x2="1395.3" y2="156.4"><stop offset="0" stop-color="#9e980d"/><stop offset="0.25" stop-color="#9e9800"/><stop offset="0.5" stop-color="#9e9800"/><stop offset="0.75" stop-color="#9e9700"/><stop offset="1" stop-color="#9e9700"/></linearGradient>
<linearGradient id="cb162" gradientUnits="userSpaceOnUse" x1="1381.2" y1="271.3" x2="1396.0" y2="177.6"><stop offset="0" stop-color="#ffffff"/><stop offset="0.1" stop-color="#fffde2"/><stop offset="0.22" stop-color="#fffac1"/><stop offset="0.4" stop-color="#fff692"/><stop offset="0.6" stop-color="#fff361"/><stop offset="0.8" stop-color="#fff033"/><stop offset="1" stop-color="#ffed00"/></linearGradient>
<linearGradient id="cd162" gradientUnits="userSpaceOnUse" x1="1395.0" y1="184.2" x2="1399.3" y2="156.9"><stop offset="0" stop-color="#9e930c"/><stop offset="0.25" stop-color="#9e9300"/><stop offset="0.5" stop-color="#9e9200"/><stop offset="0.75" stop-color="#9e9200"/><stop offset="1" stop-color="#9e9100"/></linearGradient>
<linearGradient id="cb163" gradientUnits="userSpaceOnUse" x1="1381.2" y1="271.3" x2="1399.3" y2="177.9"><stop offset="0" stop-color="#ffffff"/><stop offset="0.1" stop-color="#fffce1"/><stop offset="0.22" stop-color="#fff8bf"/><stop offset="0.4" stop-color="#fff290"/><stop offset="0.6" stop-color="#ffed60"/><stop offset="0.8" stop-color="#ffe932"/><stop offset="1" stop-color="#ffe500"/></linearGradient>
<linearGradient id="cd163" gradientUnits="userSpaceOnUse" x1="1398.0" y1="184.6" x2="1403.3" y2="157.3"><stop offset="0" stop-color="#9e8f0c"/><stop offset="0.25" stop-color="#9e8e00"/><stop offset="0.5" stop-color="#9e8d00"/><stop offset="0.75" stop-color="#9e8c00"/><stop offset="1" stop-color="#9e8c00"/></linearGradient>
<linearGradient id="cb164" gradientUnits="userSpaceOnUse" x1="1381.2" y1="271.3" x2="1402.7" y2="178.3"><stop offset="0" stop-color="#ffffff"/><stop offset="0.1" stop-color="#fffbe0"/><stop offset="0.22" stop-color="#fff5be"/><stop offset="0.4" stop-color="#ffef8e"/><stop offset="0.6" stop-color="#ffe85e"/><stop offset="0.8" stop-color="#ffe230"/><stop offset="1" stop-color="#ffdd00"/></linearGradient>
<linearGradient id="cd164" gradientUnits="userSpaceOnUse" x1="1401.1" y1="184.9" x2="1407.4" y2="157.8"><stop offset="0" stop-color="#9e8a0c"/><stop offset="0.25" stop-color="#9e8900"/><stop offset="0.5" stop-color="#9e8800"/><stop offset="0.75" stop-color="#9e8700"/><stop offset="1" stop-color="#9e8600"/></linearGradient>
<linearGradient id="cb165" gradientUnits="userSpaceOnUse" x1="1381.2" y1="271.3" x2="1406.4" y2="178.7"><stop offset="0" stop-color="#ffffff"/><stop offset="0.1" stop-color="#fff9e0"/><stop offset="0.22" stop-color="#fff3bc"/><stop offset="0.4" stop-color="#ffea8c"/><stop offset="0.6" stop-color="#ffe25c"/><stop offset="0.8" stop-color="#ffdb2f"/><stop offset="1" stop-color="#ffd500"/></linearGradient>
<linearGradient id="cd165" gradientUnits="userSpaceOnUse" x1="1404.6" y1="185.4" x2="1412.0" y2="158.2"><stop offset="0" stop-color="#9e850c"/><stop offset="0.25" stop-color="#9e8400"/><stop offset="0.5" stop-color="#9e8300"/><stop offset="0.75" stop-color="#9e8100"/><stop offset="1" stop-color="#9e8100"/></linearGradient>
<linearGradient id="cb166" gradientUnits="userSpaceOnUse" x1="1381.2" y1="271.3" x2="1410.7" y2="179.1"><stop offset="0" stop-color="#ffffff"/><stop offset="0.1" stop-color="#fff8df"/><stop offset="0.22" stop-color="#fff0bb"/><stop offset="0.4" stop-color="#ffe58a"/><stop offset="0.6" stop-color="#ffdc5a"/><stop offset="0.8" stop-color="#ffd32e"/><stop offset="1" stop-color="#ffcc00"/></linearGradient>
<linearGradient id="cd166" gradientUnits="userSpaceOnUse" x1="1408.5" y1="185.9" x2="1417.2" y2="158.8"><stop offset="0" stop-color="#9e800c"/><stop offset="0.25" stop-color="#9e7e00"/><stop offset="0.5" stop-color="#9e7d00"/><stop offset="0.75" stop-color="#9e7b00"/><stop offset="1" stop-color="#9e7b00"/></linearGradient>
<linearGradient id="cb167" gradientUnits="userSpaceOnUse" x1="1381.2" y1="271.3" x2="1415.0" y2="179.5"><stop offset="0" stop-color="#ffffff"/><stop offset="0.1" stop-color="#fff6de"/><stop offset="0.22" stop-color="#ffedb9"/><stop offset="0.4" stop-color="#ffe188"/><stop offset="0.6" stop-color="#ffd558"/><stop offset="0.8" stop-color="#ffcc2d"/><stop offset="1" stop-color="#ffc300"/></linearGradient>
<linearGradient id="cd167" gradientUnits="userSpaceOnUse" x1="1412.5" y1="186.4" x2="1422.5" y2="159.4"><stop offset="0" stop-color="#9e7b0b"/><stop offset="0.25" stop-color="#9e7900"/><stop offset="0.5" stop-color="#9e7700"/><stop offset="0.75" stop-color="#9e7600"/><stop offset="1" stop-color="#9e7500"/></linearGradient>
<linearGradient id="cb168" gradientUnits="userSpaceOnUse" x1="1381.2" y1="271.3" x2="1419.5" y2="180.0"><stop offset="0" stop-color="#ffffff"/><stop offset="0.1" stop-color="#fff5dd"/><stop offset="0.22" stop-color="#ffeab7"/><stop offset="0.4" stop-color="#ffdc86"/><stop offset="0.6" stop-color="#ffcf57"/><stop offset="0.8" stop-color="#ffc42c"/><stop offset="1" stop-color="#ffbb00"/></linearGradient>
<linearGradient id="cd168" gradientUnits="userSpaceOnUse" x1="1416.6" y1="186.9" x2="1427.9" y2="160.0"><stop offset="0" stop-color="#9e760b"/><stop offset="0.25" stop-color="#9e7400"/><stop offset="0.5" stop-color="#9e7200"/><stop offset="0.75" stop-color="#9e7100"/><stop offset="1" stop-color="#9e7000"/></linearGradient>
<linearGradient id="cb169" gradientUnits="userSpaceOnUse" x1="1381.2" y1="271.3" x2="1424.0" y2="180.5"><stop offset="0" stop-color="#ffffff"/><stop offset="0.1" stop-color="#fff3dc"/><stop offset="0.22" stop-color="#ffe7b6"/><stop offset="0.4" stop-color="#ffd784"/><stop offset="0.6" stop-color="#ffc955"/><stop offset="0.8" stop-color="#ffbd2b"/><stop offset="1" stop-color="#ffb300"/></linearGradient>
<linearGradient id="cd169" gradientUnits="userSpaceOnUse" x1="1420.7" y1="187.5" x2="1433.4" y2="160.6"><stop offset="0" stop-color="#9e720b"/><stop offset="0.25" stop-color="#9e6f01"/><stop offset="0.5" stop-color="#9e6d00"/><stop offset="0.75" stop-color="#9e6b00"/><stop offset="1" stop-color="#9e6b00"/></linearGradient>
<linearGradient id="cb170" gradientUnits="userSpaceOnUse" x1="1381.2" y1="271.3" x2="1429.2" y2="181.0"><stop offset="0" stop-color="#ffffff"/><stop offset="0.1" stop-color="#fff2da"/><stop offset="0.22" stop-color="#ffe4b4"/><stop offset="0.4" stop-color="#ffd282"/><stop offset="0.6" stop-color="#ffc353"/><stop offset="0.8" stop-color="#ffb62a"/><stop offset="1" stop-color="#ffab00"/></linearGradient>
<linearGradient id="cd170" gradientUnits="userSpaceOnUse" x1="1425.4" y1="188.2" x2="1439.8" y2="161.1"><stop offset="0" stop-color="#9e6d0b"/><stop offset="0.25" stop-color="#9e6a01"/><stop offset="0.5" stop-color="#9e6800"/><stop offset="0.75" stop-color="#9e6600"/><stop offset="1" stop-color="#9e6500"/></linearGradient>
<linearGradient id="cb171" gradientUnits="userSpaceOnUse" x1="1381.2" y1="271.3" x2="1434.6" y2="181.6"><stop offset="0" stop-color="#ffffff"/><stop offset="0.1" stop-color="#fff0d9"/><stop offset="0.22" stop-color="#ffe0b2"/><stop offset="0.4" stop-color="#ffcd80"/><stop offset="0.6" stop-color="#ffbc51"/><stop offset="0.8" stop-color="#ffae28"/><stop offset="1" stop-color="#ffa300"/></linearGradient>
<linearGradient id="cd171" gradientUnits="userSpaceOnUse" x1="1430.4" y1="188.7" x2="1446.2" y2="162.1"><stop offset="0" stop-color="#9e680b"/><stop offset="0.25" stop-color="#9e6501"/><stop offset="0.5" stop-color="#9e6300"/><stop offset="0.75" stop-color="#9e6100"/><stop offset="1" stop-color="#9e6000"/></linearGradient>
<linearGradient id="cb172" gradientUnits="userSpaceOnUse" x1="1381.2" y1="271.3" x2="1439.7" y2="182.1"><stop offset="0" stop-color="#ffffff"/><stop offset="0.1" stop-color="#ffeed8"/><stop offset="0.22" stop-color="#ffddb0"/><stop offset="0.4" stop-color="#ffc97d"/><stop offset="0.6" stop-color="#ffb64f"/><stop offset="0.8" stop-color="#ffa827"/><stop offset="1" stop-color="#ff9c00"/></linearGradient>
<linearGradient id="cd172" gradientUnits="userSpaceOnUse" x1="1435.0" y1="189.2" x2="1452.3" y2="162.8"><stop offset="0" stop-color="#9e630a"/><stop offset="0.25" stop-color="#9e6101"/><stop offset="0.5" stop-color="#9e5e00"/><stop offset="0.75" stop-color="#9e5c00"/><stop offset="1" stop-color="#9e5b00"/></linearGradient>
<linearGradient id="cb173" gradientUnits="userSpaceOnUse" x1="1381.2" y1="271.3" x2="1445.0" y2="182.7"><stop offset="0" stop-color="#ffffff"/><stop offset="0.1" stop-color="#ffedd7"/><stop offset="0.22" stop-color="#ffdaae"/><stop offset="0.4" stop-color="#ffc47b"/><stop offset="0.6" stop-color="#ffb14d"/><stop offset="0.8" stop-color="#ffa126"/><stop offset="1" stop-color="#ff9500"/></linearGradient>
<linearGradient id="cd173" gradientUnits="userSpaceOnUse" x1="1439.8" y1="189.9" x2="1458.8" y2="163.5"><stop offset="0" stop-color="#9e5f0a"/><stop offset="0.25" stop-color="#9e5c01"/><stop offset="0.5" stop-color="#9e5a00"/><stop offset="0.75" stop-color="#9e5700"/><stop offset="1" stop-color="#9e5600"/></linearGradient>
<linearGradient id="cb174" gradientUnits="userSpaceOnUse" x1="1381.2" y1="271.3" x2="1450.6" y2="183.2"><stop offset="0" stop-color="#ffffff"/><stop offset="0.1" stop-color="#ffebd6"/><stop offset="0.22" stop-color="#ffd7ac"/><stop offset="0.4" stop-color="#ffbf79"/><stop offset="0.6" stop-color="#ffab4c"/><stop offset="0.8" stop-color="#ff9b25"/><stop offset="1" stop-color="#ff8e00"/></linearGradient>
<linearGradient id="cd174" gradientUnits="userSpaceOnUse" x1="1444.9" y1="190.5" x2="1465.5" y2="164.3"><stop offset="0" stop-color="#9e5b0a"/><stop offset="0.25" stop-color="#9e5801"/><stop offset="0.5" stop-color="#9e5500"/><stop offset="0.75" stop-color="#9e5300"/><stop offset="1" stop-color="#9e5200"/></linearGradient>
<linearGradient id="cb175" gradientUnits="userSpaceOnUse" x1="1381.2" y1="271.3" x2="1456.5" y2="183.8"><stop offset="0" stop-color="#ffffff"/><stop offset="0.1" stop-color="#ffe9d5"/><stop offset="0.22" stop-color="#ffd4aa"/><stop offset="0.4" stop-color="#ffba77"/><stop offset="0.6" stop-color="#ffa54a"/><stop offset="0.8" stop-color="#ff9424"/><stop offset="1" stop-color="#ff8700"/></linearGradient>
<linearGradient id="cd175" gradientUnits="userSpaceOnUse" x1="1450.2" y1="191.2" x2="1472.7" y2="165.1"><stop offset="0" stop-color="#9e570a"/><stop offset="0.25" stop-color="#9e5401"/><stop offset="0.5" stop-color="#9e5100"/><stop offset="0.75" stop-color="#9e4f00"/><stop offset="1" stop-color="#9e4e00"/></linearGradient>
<linearGradient id="cb176" gradientUnits="userSpaceOnUse" x1="1381.2" y1="271.3" x2="1462.8" y2="184.5"><stop offset="0" stop-color="#ffffff"/><stop offset="0.1" stop-color="#ffe7d3"/><stop offset="0.22" stop-color="#ffd0a8"/><stop offset="0.4" stop-color="#ffb575"/><stop offset="0.6" stop-color="#ff9f48"/><stop offset="0.8" stop-color="#ff8d23"/><stop offset="1" stop-color="#ff8000"/></linearGradient>
<linearGradient id="cd176" gradientUnits="userSpaceOnUse" x1="1455.9" y1="191.9" x2="1480.2" y2="166.0"><stop offset="0" stop-color="#9e530a"/><stop offset="0.25" stop-color="#9e5002"/><stop offset="0.5" stop-color="#9e4d00"/><stop offset="0.75" stop-color="#9e4a00"/><stop offset="1" stop-color="#9e4900"/></linearGradient>
<linearGradient id="cb177" gradientUnits="userSpaceOnUse" x1="1381.2" y1="271.3" x2="1470.3" y2="185.3"><stop offset="0" stop-color="#ffffff"/><stop offset="0.1" stop-color="#ffe5d2"/><stop offset="0.22" stop-color="#ffcca6"/><stop offset="0.4" stop-color="#ffb072"/><stop offset="0.6" stop-color="#ff9846"/><stop offset="0.8" stop-color="#ff8622"/><stop offset="1" stop-color="#ff7800"/></linearGradient>
<linearGradient id="cd177" gradientUnits="userSpaceOnUse" x1="1462.3" y1="193.0" x2="1489.6" y2="166.7"><stop offset="0" stop-color="#9e4e0a"/><stop offset="0.25" stop-color="#9e4b02"/><stop offset="0.5" stop-color="#9e4800"/><stop offset="0.75" stop-color="#9e4500"/><stop offset="1" stop-color="#9e4400"/></linearGradient>
<linearGradient id="cb178" gradientUnits="userSpaceOnUse" x1="1381.2" y1="271.3" x2="1478.3" y2="186.1"><stop offset="0" stop-color="#ffffff"/><stop offset="0.1" stop-color="#ffe3d0"/><stop offset="0.22" stop-color="#ffc8a4"/><stop offset="0.4" stop-color="#ffaa70"/><stop offset="0.6" stop-color="#ff9144"/><stop offset="0.8" stop-color="#ff7f21"/><stop offset="1" stop-color="#ff7000"/></linearGradient>
<linearGradient id="cd178" gradientUnits="userSpaceOnUse" x1="1469.8" y1="193.6" x2="1498.8" y2="168.1"><stop offset="0" stop-color="#9e4909"/><stop offset="0.25" stop-color="#9e4602"/><stop offset="0.5" stop-color="#9e4300"/><stop offset="0.75" stop-color="#9e4000"/><stop offset="1" stop-color="#9e4000"/></linearGradient>
<linearGradient id="cb179" gradientUnits="userSpaceOnUse" x1="1381.2" y1="271.3" x2="1486.3" y2="186.9"><stop offset="0" stop-color="#ffffff"/><stop offset="0.1" stop-color="#ffe0cf"/><stop offset="0.22" stop-color="#ffc4a1"/><stop offset="0.4" stop-color="#ffa46e"/><stop offset="0.6" stop-color="#ff8b42"/><stop offset="0.8" stop-color="#ff7820"/><stop offset="1" stop-color="#ff6900"/></linearGradient>
<linearGradient id="cd179" gradientUnits="userSpaceOnUse" x1="1476.9" y1="194.5" x2="1508.4" y2="169.2"><stop offset="0" stop-color="#9e4509"/><stop offset="0.25" stop-color="#9e4202"/><stop offset="0.5" stop-color="#9e3f00"/><stop offset="0.75" stop-color="#9e3c00"/><stop offset="1" stop-color="#9e3b00"/></linearGradient>
<linearGradient id="cb180" gradientUnits="userSpaceOnUse" x1="1381.2" y1="271.3" x2="1495.0" y2="187.8"><stop offset="0" stop-color="#ffffff"/><stop offset="0.1" stop-color="#ffdecd"/><stop offset="0.22" stop-color="#ffc09f"/><stop offset="0.4" stop-color="#ff9e6b"/><stop offset="0.6" stop-color="#ff8440"/><stop offset="0.8" stop-color="#ff711f"/><stop offset="1" stop-color="#ff6200"/></linearGradient>
<linearGradient id="cd180" gradientUnits="userSpaceOnUse" x1="1484.6" y1="195.5" x2="1518.8" y2="170.4"><stop offset="0" stop-color="#9e4109"/><stop offset="0.25" stop-color="#9e3d02"/><stop offset="0.5" stop-color="#9e3a00"/><stop offset="0.75" stop-color="#9e3800"/><stop offset="1" stop-color="#9e3700"/></linearGradient>
<linearGradient id="cb181" gradientUnits="userSpaceOnUse" x1="1381.2" y1="271.3" x2="1503.6" y2="188.7"><stop offset="0" stop-color="#ffffff"/><stop offset="0.1" stop-color="#ffdbcb"/><stop offset="0.22" stop-color="#ffbb9c"/><stop offset="0.4" stop-color="#ff9969"/><stop offset="0.6" stop-color="#ff7e3f"/><stop offset="0.8" stop-color="#ff6a1e"/><stop offset="1" stop-color="#ff5b00"/></linearGradient>
<linearGradient id="cd181" gradientUnits="userSpaceOnUse" x1="1492.7" y1="196.1" x2="1528.3" y2="172.1"><stop offset="0" stop-color="#9e3c09"/><stop offset="0.25" stop-color="#9e3902"/><stop offset="0.5" stop-color="#9e3600"/><stop offset="0.75" stop-color="#9e3400"/><stop offset="1" stop-color="#9e3300"/></linearGradient>
<linearGradient id="cb182" gradientUnits="userSpaceOnUse" x1="1381.2" y1="271.3" x2="1512.0" y2="189.6"><stop offset="0" stop-color="#ffffff"/><stop offset="0.1" stop-color="#ffd9ca"/><stop offset="0.22" stop-color="#ffb89a"/><stop offset="0.4" stop-color="#ff9466"/><stop offset="0.6" stop-color="#ff783d"/><stop offset="0.8" stop-color="#ff641d"/><stop offset="1" stop-color="#ff5500"/></linearGradient>
<linearGradient id="cd182" gradientUnits="userSpaceOnUse" x1="1500.2" y1="197.0" x2="1538.1" y2="173.3"><stop offset="0" stop-color="#9e3908"/><stop offset="0.25" stop-color="#9e3602"/><stop offset="0.5" stop-color="#9e3300"/><stop offset="0.75" stop-color="#9e3000"/><stop offset="1" stop-color="#9e2f00"/></linearGradient>
<linearGradient id="cb183" gradientUnits="userSpaceOnUse" x1="1381.2" y1="271.3" x2="1521.1" y2="190.5"><stop offset="0" stop-color="#ffffff"/><stop offset="0.1" stop-color="#ffd7c8"/><stop offset="0.22" stop-color="#ffb398"/><stop offset="0.4" stop-color="#ff8f64"/><stop offset="0.6" stop-color="#ff733b"/><stop offset="0.8" stop-color="#ff5e1c"/><stop offset="1" stop-color="#ff4f00"/></linearGradient>
<linearGradient id="cd183" gradientUnits="userSpaceOnUse" x1="1508.3" y1="197.9" x2="1548.8" y2="174.5"><stop offset="0" stop-color="#9e3508"/><stop offset="0.25" stop-color="#9e3202"/><stop offset="0.5" stop-color="#9e2f00"/><stop offset="0.75" stop-color="#9e2c00"/><stop offset="1" stop-color="#9e2b00"/></linearGradient>
<linearGradient id="cb184" gradientUnits="userSpaceOnUse" x1="1381.2" y1="271.3" x2="1529.8" y2="191.4"><stop offset="0" stop-color="#ffffff"/><stop offset="0.1" stop-color="#ffd4c7"/><stop offset="0.22" stop-color="#ffb096"/><stop offset="0.4" stop-color="#ff8a62"/><stop offset="0.6" stop-color="#ff6d3a"/><stop offset="0.8" stop-color="#ff591b"/><stop offset="1" stop-color="#ff4a00"/></linearGradient>
<linearGradient id="cd184" gradientUnits="userSpaceOnUse" x1="1516.8" y1="198.4" x2="1558.0" y2="176.3"><stop offset="0" stop-color="#9e3108"/><stop offset="0.25" stop-color="#9e2e02"/><stop offset="0.5" stop-color="#9e2c00"/><stop offset="0.75" stop-color="#9e2900"/><stop offset="1" stop-color="#9e2800"/></linearGradient>
<linearGradient id="cb185" gradientUnits="userSpaceOnUse" x1="1381.2" y1="271.3" x2="1538.0" y2="192.3"><stop offset="0" stop-color="#ffffff"/><stop offset="0.1" stop-color="#ffd2c5"/><stop offset="0.22" stop-color="#ffac94"/><stop offset="0.4" stop-color="#ff8660"/><stop offset="0.6" stop-color="#ff6939"/><stop offset="0.8" stop-color="#ff541b"/><stop offset="1" stop-color="#ff4500"/></linearGradient>
<linearGradient id="cd185" gradientUnits="userSpaceOnUse" x1="1524.1" y1="199.3" x2="1567.4" y2="177.4"><stop offset="0" stop-color="#9e2f08"/><stop offset="0.25" stop-color="#9e2b02"/><stop offset="0.5" stop-color="#9e2900"/><stop offset="0.75" stop-color="#9e2600"/><stop offset="1" stop-color="#9e2500"/></linearGradient>
<linearGradient id="cb186" gradientUnits="userSpaceOnUse" x1="1381.2" y1="271.3" x2="1546.8" y2="193.2"><stop offset="0" stop-color="#ffffff"/><stop offset="0.1" stop-color="#ffd0c4"/><stop offset="0.22" stop-color="#ffa992"/><stop offset="0.4" stop-color="#ff815e"/><stop offset="0.6" stop-color="#ff6437"/><stop offset="0.8" stop-color="#ff4f1a"/><stop offset="1" stop-color="#ff4000"/></linearGradient>
<linearGradient id="cd186" gradientUnits="userSpaceOnUse" x1="1532.0" y1="200.2" x2="1577.6" y2="178.7"><stop offset="0" stop-color="#9e2c07"/><stop offset="0.25" stop-color="#9e2802"/><stop offset="0.5" stop-color="#9e2600"/><stop offset="0.75" stop-color="#9e2300"/><stop offset="1" stop-color="#9e2200"/></linearGradient>
<linearGradient id="cb187" gradientUnits="userSpaceOnUse" x1="1381.2" y1="271.3" x2="1556.4" y2="194.2"><stop offset="0" stop-color="#ffffff"/><stop offset="0.1" stop-color="#ffcdc2"/><stop offset="0.22" stop-color="#ffa58f"/><stop offset="0.4" stop-color="#ff7c5c"/><stop offset="0.6" stop-color="#ff5f36"/><stop offset="0.8" stop-color="#ff4a19"/><stop offset="1" stop-color="#ff3b00"/></linearGradient>
<linearGradient id="cd187" gradientUnits="userSpaceOnUse" x1="1540.5" y1="201.2" x2="1588.7" y2="180.0"><stop offset="0" stop-color="#9e2807"/><stop offset="0.25" stop-color="#9e2502"/><stop offset="0.5" stop-color="#9e2200"/><stop offset="0.75" stop-color="#9e2000"/><stop offset="1" stop-color="#9e1f00"/></linearGradient>
<linearGradient id="cb188" gradientUnits="userSpaceOnUse" x1="1381.2" y1="271.3" x2="1565.2" y2="195.1"><stop offset="0" stop-color="#ffffff"/><stop offset="0.1" stop-color="#ffcbc1"/><stop offset="0.22" stop-color="#ffa18e"/><stop offset="0.4" stop-color="#ff785b"/><stop offset="0.6" stop-color="#ff5a35"/><stop offset="0.8" stop-color="#ff4619"/><stop offset="1" stop-color="#ff3600"/></linearGradient>
<linearGradient id="cd188" gradientUnits="userSpaceOnUse" x1="1549.6" y1="201.6" x2="1597.0" y2="181.9"><stop offset="0" stop-color="#9e2507"/><stop offset="0.25" stop-color="#9e2202"/><stop offset="0.5" stop-color="#9e2000"/><stop offset="0.75" stop-color="#9e1d00"/><stop offset="1" stop-color="#9e1c00"/></linearGradient>
<linearGradient id="cb189" gradientUnits="userSpaceOnUse" x1="1381.2" y1="271.3" x2="1572.7" y2="195.9"><stop offset="0" stop-color="#ffffff"/><stop offset="0.1" stop-color="#ffc9bf"/><stop offset="0.22" stop-color="#ff9f8c"/><stop offset="0.4" stop-color="#ff7559"/><stop offset="0.6" stop-color="#ff5734"/><stop offset="0.8" stop-color="#ff4218"/><stop offset="1" stop-color="#ff3300"/></linearGradient>
<linearGradient id="cd189" gradientUnits="userSpaceOnUse" x1="1556.3" y1="202.3" x2="1605.5" y2="183.0"><stop offset="0" stop-color="#9e2307"/><stop offset="0.25" stop-color="#9e2002"/><stop offset="0.5" stop-color="#9e1e00"/><stop offset="0.75" stop-color="#9e1b00"/><stop offset="1" stop-color="#9e1a00"/></linearGradient>
<linearGradient id="cb190" gradientUnits="userSpaceOnUse" x1="1381.2" y1="271.3" x2="1580.7" y2="196.7"><stop offset="0" stop-color="#ffffff"/><stop offset="0.1" stop-color="#ffc8be"/><stop offset="0.22" stop-color="#ff9c8a"/><stop offset="0.4" stop-color="#ff7158"/><stop offset="0.6" stop-color="#ff5332"/><stop offset="0.8" stop-color="#ff3e18"/><stop offset="1" stop-color="#ff2f00"/></linearGradient>
<linearGradient id="cd190" gradientUnits="userSpaceOnUse" x1="1563.5" y1="203.1" x2="1614.5" y2="184.1"><stop offset="0" stop-color="#9e2106"/><stop offset="0.25" stop-color="#9e1e02"/><stop offset="0.5" stop-color="#9e1b00"/><stop offset="0.75" stop-color="#9e1900"/><stop offset="1" stop-color="#9e1800"/></linearGradient>
<linearGradient id="cb191" gradientUnits="userSpaceOnUse" x1="1381.2" y1="271.3" x2="1589.3" y2="197.6"><stop offset="0" stop-color="#ffffff"/><stop offset="0.1" stop-color="#ffc5bd"/><stop offset="0.22" stop-color="#ff9989"/><stop offset="0.4" stop-color="#ff6e56"/><stop offset="0.6" stop-color="#ff4f31"/><stop offset="0.8" stop-color="#ff3b17"/><stop offset="1" stop-color="#ff2b00"/></linearGradient>
<linearGradient id="cd191" gradientUnits="userSpaceOnUse" x1="1571.3" y1="204.0" x2="1624.1" y2="185.3"><stop offset="0" stop-color="#9e1f06"/><stop offset="0.25" stop-color="#9e1c02"/><stop offset="0.5" stop-color="#9e1900"/><stop offset="0.75" stop-color="#9e1700"/><stop offset="1" stop-color="#9e1600"/></linearGradient>
<linearGradient id="cb192" gradientUnits="userSpaceOnUse" x1="1381.2" y1="271.3" x2="1598.6" y2="198.6"><stop offset="0" stop-color="#ffffff"/><stop offset="0.1" stop-color="#ffc3bb"/><stop offset="0.22" stop-color="#ff9587"/><stop offset="0.4" stop-color="#ff6a54"/><stop offset="0.6" stop-color="#ff4c30"/><stop offset="0.8" stop-color="#ff3716"/><stop offset="1" stop-color="#ff2700"/></linearGradient>
<linearGradient id="cd192" gradientUnits="userSpaceOnUse" x1="1579.6" y1="204.9" x2="1634.5" y2="186.5"><stop offset="0" stop-color="#9e1c06"/><stop offset="0.25" stop-color="#9e1902"/><stop offset="0.5" stop-color="#9e1700"/><stop offset="0.75" stop-color="#9e1400"/><stop offset="1" stop-color="#9e1300"/></linearGradient>
<linearGradient id="cb193" gradientUnits="userSpaceOnUse" x1="1381.2" y1="271.3" x2="1608.6" y2="199.6"><stop offset="0" stop-color="#ffffff"/><stop offset="0.1" stop-color="#ffc1ba"/><stop offset="0.22" stop-color="#ff9285"/><stop offset="0.4" stop-color="#ff6653"/><stop offset="0.6" stop-color="#ff482f"/><stop offset="0.8" stop-color="#ff3316"/><stop offset="1" stop-color="#ff2300"/></linearGradient>
<linearGradient id="cd193" gradientUnits="userSpaceOnUse" x1="1588.5" y1="205.9" x2="1645.7" y2="187.9"><stop offset="0" stop-color="#9e1a06"/><stop offset="0.25" stop-color="#9e1702"/><stop offset="0.5" stop-color="#9e1400"/><stop offset="0.75" stop-color="#9e1200"/><stop offset="1" stop-color="#9e1100"/></linearGradient>
<linearGradient id="cb194" gradientUnits="userSpaceOnUse" x1="1381.2" y1="271.3" x2="1619.5" y2="200.7"><stop offset="0" stop-color="#ffffff"/><stop offset="0.1" stop-color="#ffbeb8"/><stop offset="0.22" stop-color="#ff8e83"/><stop offset="0.4" stop-color="#ff6251"/><stop offset="0.6" stop-color="#ff432e"/><stop offset="0.8" stop-color="#ff2f15"/><stop offset="1" stop-color="#ff1f00"/></linearGradient>
<linearGradient id="cd194" gradientUnits="userSpaceOnUse" x1="1598.2" y1="207.0" x2="1657.7" y2="189.4"><stop offset="0" stop-color="#9e1706"/><stop offset="0.25" stop-color="#9e1402"/><stop offset="0.5" stop-color="#9e1200"/><stop offset="0.75" stop-color="#9e0f00"/><stop offset="1" stop-color="#9e0e00"/></linearGradient>
<linearGradient id="cb195" gradientUnits="userSpaceOnUse" x1="1381.2" y1="271.3" x2="1631.3" y2="201.9"><stop offset="0" stop-color="#ffffff"/><stop offset="0.1" stop-color="#ffbcb6"/><stop offset="0.22" stop-color="#ff8b81"/><stop offset="0.4" stop-color="#ff5e4f"/><stop offset="0.6" stop-color="#ff3f2d"/><stop offset="0.8" stop-color="#ff2a15"/><stop offset="1" stop-color="#ff1b00"/></linearGradient>
<linearGradient id="cd195" gradientUnits="userSpaceOnUse" x1="1608.7" y1="208.2" x2="1670.8" y2="191.0"><stop offset="0" stop-color="#9e1506"/><stop offset="0.25" stop-color="#9e1202"/><stop offset="0.5" stop-color="#9e0f00"/><stop offset="0.75" stop-color="#9e0d00"/><stop offset="1" stop-color="#9e0c00"/></linearGradient>
<linearGradient id="cb196" gradientUnits="userSpaceOnUse" x1="1381.2" y1="271.3" x2="1644.2" y2="203.3"><stop offset="0" stop-color="#ffffff"/><stop offset="0.1" stop-color="#ffb9b4"/><stop offset="0.22" stop-color="#ff877e"/><stop offset="0.4" stop-color="#ff594d"/><stop offset="0.6" stop-color="#ff3b2c"/><stop offset="0.8" stop-color="#ff2614"/><stop offset="1" stop-color="#ff1600"/></linearGradient>
<linearGradient id="cd196" gradientUnits="userSpaceOnUse" x1="1620.2" y1="209.5" x2="1685.0" y2="192.7"><stop offset="0" stop-color="#9e1206"/><stop offset="0.25" stop-color="#9e0f02"/><stop offset="0.5" stop-color="#9e0d00"/><stop offset="0.75" stop-color="#9e0a00"/><stop offset="1" stop-color="#9e0900"/></linearGradient>
<linearGradient id="cb197" gradientUnits="userSpaceOnUse" x1="1381.2" y1="271.3" x2="1654.7" y2="204.4"><stop offset="0" stop-color="#ffffff"/><stop offset="0.1" stop-color="#ffb7b3"/><stop offset="0.22" stop-color="#ff837d"/><stop offset="0.4" stop-color="#ff564c"/><stop offset="0.6" stop-color="#ff372b"/><stop offset="0.8" stop-color="#ff2214"/><stop offset="1" stop-color="#ff1300"/></linearGradient>
<linearGradient id="cd197" gradientUnits="userSpaceOnUse" x1="1632.5" y1="209.8" x2="1693.0" y2="195.0"><stop offset="0" stop-color="#9e0f05"/><stop offset="0.25" stop-color="#9e0d02"/><stop offset="0.5" stop-color="#9e0a00"/><stop offset="0.75" stop-color="#9e0800"/><stop offset="1" stop-color="#9e0700"/></linearGradient>
<linearGradient id="cb198" gradientUnits="userSpaceOnUse" x1="1381.2" y1="271.3" x2="1662.1" y2="205.1"><stop offset="0" stop-color="#ffffff"/><stop offset="0.1" stop-color="#ffb5b2"/><stop offset="0.22" stop-color="#ff817b"/><stop offset="0.4" stop-color="#ff544b"/><stop offset="0.6" stop-color="#ff352a"/><stop offset="0.8" stop-color="#ff2013"/><stop offset="1" stop-color="#ff1000"/></linearGradient>
<linearGradient id="cd198" gradientUnits="userSpaceOnUse" x1="1639.2" y1="210.5" x2="1700.9" y2="196.0"><stop offset="0" stop-color="#9e0e05"/><stop offset="0.25" stop-color="#9e0b02"/><stop offset="0.5" stop-color="#9e0900"/><stop offset="0.75" stop-color="#9e0700"/><stop offset="1" stop-color="#9e0600"/></linearGradient>
<linearGradient id="cb199" gradientUnits="userSpaceOnUse" x1="1381.2" y1="271.3" x2="1670.0" y2="206.0"><stop offset="0" stop-color="#ffffff"/><stop offset="0.1" stop-color="#ffb4b1"/><stop offset="0.22" stop-color="#ff7f7a"/><stop offset="0.4" stop-color="#ff514a"/><stop offset="0.6" stop-color="#ff3229"/><stop offset="0.8" stop-color="#ff1e13"/><stop offset="1" stop-color="#ff0e00"/></linearGradient>
<linearGradient id="cd199" gradientUnits="userSpaceOnUse" x1="1646.3" y1="211.3" x2="1709.3" y2="197.1"><stop offset="0" stop-color="#9e0c05"/><stop offset="0.25" stop-color="#9e0a02"/><stop offset="0.5" stop-color="#9e0700"/><stop offset="0.75" stop-color="#9e0500"/><stop offset="1" stop-color="#9e0400"/></linearGradient>
<linearGradient id="cb200" gradientUnits="userSpaceOnUse" x1="1381.2" y1="271.3" x2="1678.2" y2="206.8"><stop offset="0" stop-color="#ffffff"/><stop offset="0.1" stop-color="#ffb2b0"/><stop offset="0.22" stop-color="#ff7d79"/><stop offset="0.4" stop-color="#ff4f49"/><stop offset="0.6" stop-color="#ff3029"/><stop offset="0.8" stop-color="#ff1b13"/><stop offset="1" stop-color="#ff0b00"/></linearGradient>
<linearGradient id="cd200" gradientUnits="userSpaceOnUse" x1="1653.8" y1="212.1" x2="1718.1" y2="198.2"><stop offset="0" stop-color="#9e0b05"/><stop offset="0.25" stop-color="#9e0802"/><stop offset="0.5" stop-color="#9e0600"/><stop offset="0.75" stop-color="#9e0400"/><stop offset="1" stop-color="#9e0200"/></linearGradient>
<linearGradient id="cb201" gradientUnits="userSpaceOnUse" x1="1381.2" y1="271.3" x2="1686.9" y2="207.7"><stop offset="0" stop-color="#ffffff"/><stop offset="0.1" stop-color="#ffb0ae"/><stop offset="0.22" stop-color="#ff7a78"/><stop offset="0.4" stop-color="#ff4c48"/><stop offset="0.6" stop-color="#ff2d28"/><stop offset="0.8" stop-color="#ff1812"/><stop offset="1" stop-color="#ff0900"/></linearGradient>
<linearGradient id="cd201" gradientUnits="userSpaceOnUse" x1="1661.7" y1="213.0" x2="1727.3" y2="199.3"><stop offset="0" stop-color="#9e0905"/><stop offset="0.25" stop-color="#9e0702"/><stop offset="0.5" stop-color="#9e0400"/><stop offset="0.75" stop-color="#9e0200"/><stop offset="1" stop-color="#9e0000"/></linearGradient>
<linearGradient id="cb202" gradientUnits="userSpaceOnUse" x1="1381.2" y1="271.3" x2="1696.1" y2="208.7"><stop offset="0" stop-color="#ffffff"/><stop offset="0.1" stop-color="#ffaead"/><stop offset="0.22" stop-color="#ff7876"/><stop offset="0.4" stop-color="#ff4947"/><stop offset="0.6" stop-color="#ff2b27"/><stop offset="0.8" stop-color="#ff1612"/><stop offset="1" stop-color="#ff0600"/></linearGradient>
<linearGradient id="cd202" gradientUnits="userSpaceOnUse" x1="1670.0" y1="213.9" x2="1737.0" y2="200.5"><stop offset="0" stop-color="#9e0805"/><stop offset="0.25" stop-color="#9e0502"/><stop offset="0.5" stop-color="#9e0200"/><stop offset="0.75" stop-color="#9e0000"/><stop offset="1" stop-color="#9e0000"/></linearGradient>
<linearGradient id="cb203" gradientUnits="userSpaceOnUse" x1="1381.2" y1="271.3" x2="1710.9" y2="210.2"><stop offset="0" stop-color="#ffffff"/><stop offset="0.1" stop-color="#ffabab"/><stop offset="0.22" stop-color="#ff7474"/><stop offset="0.4" stop-color="#ff4545"/><stop offset="0.6" stop-color="#ff2726"/><stop offset="0.8" stop-color="#ff1211"/><stop offset="1" stop-color="#ff0100"/></linearGradient>
<linearGradient id="cd203" gradientUnits="userSpaceOnUse" x1="1679.0" y1="216.1" x2="1757.8" y2="201.5"><stop offset="0" stop-color="#9e0605"/><stop offset="0.25" stop-color="#9e0202"/><stop offset="0.5" stop-color="#9e0000"/><stop offset="0.75" stop-color="#9e0000"/><stop offset="1" stop-color="#9e0000"/></linearGradient>
<linearGradient id="cb204" gradientUnits="userSpaceOnUse" x1="1381.2" y1="271.3" x2="1706.7" y2="216.8"><stop offset="0" stop-color="#ffffff"/><stop offset="0.1" stop-color="#ffacad"/><stop offset="0.22" stop-color="#ff7577"/><stop offset="0.4" stop-color="#ff4649"/><stop offset="0.6" stop-color="#ff272a"/><stop offset="0.8" stop-color="#ff1216"/><stop offset="1" stop-color="#ff0006"/></linearGradient>
<linearGradient id="cd204" gradientUnits="userSpaceOnUse" x1="1680.7" y1="221.2" x2="1781.3" y2="204.4"><stop offset="0" stop-color="#9e0408"/><stop offset="0.25" stop-color="#9e0004"/><stop offset="0.5" stop-color="#9e0000"/><stop offset="0.75" stop-color="#9e0000"/><stop offset="1" stop-color="#9e0000"/></linearGradient>
<linearGradient id="cb205" gradientUnits="userSpaceOnUse" x1="1381.2" y1="271.3" x2="1700.8" y2="223.5"><stop offset="0" stop-color="#ffffff"/><stop offset="0.1" stop-color="#ffadaf"/><stop offset="0.22" stop-color="#ff767a"/><stop offset="0.4" stop-color="#ff474d"/><stop offset="0.6" stop-color="#ff272f"/><stop offset="0.8" stop-color="#ff121b"/><stop offset="1" stop-color="#ff000c"/></linearGradient>
<linearGradient id="cd205" gradientUnits="userSpaceOnUse" x1="1675.3" y1="227.3" x2="1807.8" y2="207.6"><stop offset="0" stop-color="#9e050b"/><stop offset="0.25" stop-color="#9e0006"/><stop offset="0.5" stop-color="#9e0002"/><stop offset="0.75" stop-color="#9e0000"/><stop offset="1" stop-color="#9e0000"/></linearGradient>
<linearGradient id="cb206" gradientUnits="userSpaceOnUse" x1="1381.2" y1="271.3" x2="1695.1" y2="230.0"><stop offset="0" stop-color="#ffffff"/><stop offset="0.1" stop-color="#ffaeb2"/><stop offset="0.22" stop-color="#ff777d"/><stop offset="0.4" stop-color="#ff4751"/><stop offset="0.6" stop-color="#ff2833"/><stop offset="0.8" stop-color="#ff1220"/><stop offset="1" stop-color="#ff0011"/></linearGradient>
<linearGradient id="cd206" gradientUnits="userSpaceOnUse" x1="1670.2" y1="233.3" x2="1838.0" y2="211.2"><stop offset="0" stop-color="#9e050e"/><stop offset="0.25" stop-color="#9e0009"/><stop offset="0.5" stop-color="#9e0004"/><stop offset="0.75" stop-color="#9e0000"/><stop offset="1" stop-color="#9e0000"/></linearGradient>
<linearGradient id="cb207" gradientUnits="userSpaceOnUse" x1="1381.2" y1="271.3" x2="1689.6" y2="236.2"><stop offset="0" stop-color="#ffffff"/><stop offset="0.1" stop-color="#ffafb4"/><stop offset="0.22" stop-color="#ff7880"/><stop offset="0.4" stop-color="#ff4854"/><stop offset="0.6" stop-color="#ff2837"/><stop offset="0.8" stop-color="#ff1224"/><stop offset="1" stop-color="#ff0016"/></linearGradient>
<linearGradient id="cd207" gradientUnits="userSpaceOnUse" x1="1665.3" y1="238.9" x2="1872.6" y2="215.3"><stop offset="0" stop-color="#9e0511"/><stop offset="0.25" stop-color="#9e000b"/><stop offset="0.5" stop-color="#9e0005"/><stop offset="0.75" stop-color="#9e0000"/><stop offset="1" stop-color="#9e0000"/></linearGradient>
<linearGradient id="cb208" gradientUnits="userSpaceOnUse" x1="1381.2" y1="271.3" x2="1681.8" y2="245.0"><stop offset="0" stop-color="#ffffff"/><stop offset="0.1" stop-color="#ffb0b7"/><stop offset="0.22" stop-color="#ff7985"/><stop offset="0.4" stop-color="#ff495a"/><stop offset="0.6" stop-color="#ff293d"/><stop offset="0.8" stop-color="#ff132b"/><stop offset="1" stop-color="#ff001d"/></linearGradient>
<linearGradient id="cd208" gradientUnits="userSpaceOnUse" x1="1655.7" y1="247.3" x2="1911.0" y2="225.0"><stop offset="0" stop-color="#9e0515"/><stop offset="0.25" stop-color="#9e000e"/><stop offset="0.5" stop-color="#9e0008"/><stop offset="0.75" stop-color="#9e0003"/><stop offset="1" stop-color="#9e0000"/></linearGradient>
<linearGradient id="cb209" gradientUnits="userSpaceOnUse" x1="1381.2" y1="271.3" x2="1672.0" y2="256.1"><stop offset="0" stop-color="#ffffff"/><stop offset="0.1" stop-color="#ffb1ba"/><stop offset="0.22" stop-color="#ff7b8b"/><stop offset="0.4" stop-color="#ff4b61"/><stop offset="0.6" stop-color="#ff2a45"/><stop offset="0.8" stop-color="#ff1333"/><stop offset="1" stop-color="#ff0026"/></linearGradient>
<linearGradient id="cd209" gradientUnits="userSpaceOnUse" x1="1647.1" y1="257.4" x2="1911.6" y2="243.5"><stop offset="0" stop-color="#9e051b"/><stop offset="0.25" stop-color="#9e0013"/><stop offset="0.5" stop-color="#9e000d"/><stop offset="0.75" stop-color="#9e0009"/><stop offset="1" stop-color="#9e0005"/></linearGradient>
<linearGradient id="cb210" gradientUnits="userSpaceOnUse" x1="1381.2" y1="271.3" x2="1662.8" y2="266.4"><stop offset="0" stop-color="#ffffff"/><stop offset="0.1" stop-color="#ffb3be"/><stop offset="0.22" stop-color="#ff7d90"/><stop offset="0.4" stop-color="#ff4c68"/><stop offset="0.6" stop-color="#ff2b4d"/><stop offset="0.8" stop-color="#ff143b"/><stop offset="1" stop-color="#ff002f"/></linearGradient>
<linearGradient id="cd210" gradientUnits="userSpaceOnUse" x1="1639.0" y1="266.8" x2="1911.2" y2="262.1"><stop offset="0" stop-color="#9e0520"/><stop offset="0.25" stop-color="#9e0018"/><stop offset="0.5" stop-color="#9e0012"/><stop offset="0.75" stop-color="#9e000e"/><stop offset="1" stop-color="#9e000a"/></linearGradient>
<clipPath id="cL"><polygon points="1458.6,775.6 1458.5,775.6 1458.4,775.5 1458.2,775.6 1458.1,775.8 1457.9,775.8 1457.7,775.7 1457.5,775.7 1457.4,775.9 1457.2,776.1 1457.1,776.2 1456.9,776.3 1456.6,776.3 1456.3,776.3 1455.8,776.2 1455.4,776.2 1455.1,776.3 1454.6,776.2 1454.1,776.1 1453.4,775.7 1452.5,775.2 1451.2,774.3 1449.8,773.3 1448.3,772.1 1446.5,770.5 1444.4,768.8 1442.0,766.7 1439.3,764.3 1436.4,761.6 1433.2,758.5 1429.6,755.1 1425.7,751.4 1421.3,747.5 1416.5,743.0 1411.1,738.1 1405.2,732.7 1398.8,726.9 1392.0,720.5 1384.6,713.5 1376.5,705.6 1367.9,696.8 1358.8,687.0 1348.8,675.6 1337.6,661.9 1324.9,645.1 1310.8,625.5 1296.0,603.5 1280.4,579.0 1264.1,552.0 1247.4,522.6 1230.6,491.7 1213.9,459.9 1197.9,427.6 1183.3,395.5 1170.3,364.3 1159.0,334.5 1149.2,306.7 1141.1,281.3 1134.7,258.6 1129.9,238.7 1126.6,221.3 1124.7,206.3 1123.9,193.5 1124.3,182.4 1125.7,172.8 1128.2,164.7 1131.6,157.8 1135.8,152.3 1140.7,148.0 1146.3,144.8 1152.4,142.5 1158.9,141.0 1165.7,140.1 1172.9,139.5 1180.2,139.2 1187.7,139.1 1195.1,139.1 1202.6,139.2 1210.2,139.5 1217.9,139.9 1225.9,140.3 1234.1,140.9 1242.5,141.6 1251.3,142.4 1260.3,143.3 1269.7,144.3 1279.5,145.4 1289.6,146.5 1300.2,147.8 1311.2,149.1 1322.7,150.4 1334.6,151.9 1347.0,153.4 1360.0,155.0 1373.4,156.7 1387.4,158.5 1402.0,160.3 1417.1,162.3 1432.8,164.3 1449.0,166.3 1465.7,168.5 1483.0,170.7 1500.7,172.9 1518.9,175.2 1537.4,177.6 1556.3,180.0 1575.5,182.4 1594.7,184.9 1613.7,187.3 1632.2,189.7 1650.6,192.0 1669.0,194.3 1687.0,196.6 1704.3,198.8 1720.8,200.9 1736.6,202.9 1751.6,204.8 1765.9,206.7 1779.3,208.4 1791.8,210.0 1803.5,211.5 1814.4,212.8 1824.5,214.1 1833.9,215.3 1842.7,216.4 1851.0,217.5 1858.9,218.5 1866.3,219.4 1873.3,220.3 1879.7,221.2 1885.8,221.9 1891.3,222.6 1896.4,223.3 1901.0,223.9 1905.0,224.4 1908.6,224.8 1911.9,225.3 1914.9,225.6 1917.6,226.0 1920.0,226.3 1922.1,226.6 1923.9,226.8 1925.3,227.0 1926.7,227.1 1927.9,227.3 1929.1,227.5 1930.2,227.6 1931.2,227.7 1932.2,227.8 1933.1,228.0 1934.1,228.1 1935.0,228.2 1935.9,228.3 1936.7,228.4 1937.2,228.5 1937.5,228.5 1937.9,228.6 1938.1,228.6 1938.4,228.6 1938.5,228.7 1938.6,228.7 1938.6,228.7"/></clipPath><clipPath id="cT"><polygon points="1712.4,210.4 1285.8,166.2 1351.8,617.8"/></clipPath></defs><clipPath id="plotclip"><rect x="1188" y="125" width="720" height="557"/></clipPath><rect x="1187.5" y="124.5" width="721" height="558" fill="#252525"/><g clip-path="url(#plotclip)"><g id="cbg"><g clip-path="url(#cL)"><g shape-rendering="crispEdges"><polygon points="1381.2,271.3 1904.3,269.0 1903.9,291.8" fill="url(#cd0)"/>
<polygon points="1381.2,271.3 1888.9,286.8 1887.7,308.9" fill="url(#cd1)"/>
<polygon points="1381.2,271.3 1874.4,303.6 1872.5,325.1" fill="url(#cd2)"/>
<polygon points="1381.2,271.3 1860.6,319.6 1857.4,344.6" fill="url(#cd3)"/>
<polygon points="1381.2,271.3 1844.3,338.4 1840.9,358.6" fill="url(#cd4)"/>
<polygon points="1381.2,271.3 1831.9,352.8 1827.0,376.3" fill="url(#cd5)"/>
<polygon points="1381.2,271.3 1817.0,369.9 1812.3,388.8" fill="url(#cd6)"/>
<polygon points="1381.2,271.3 1805.7,383.1 1799.3,405.1" fill="url(#cd7)"/>
<polygon points="1381.2,271.3 1792.0,398.9 1786.0,416.7" fill="url(#cd8)"/>
<polygon points="1381.2,271.3 1781.4,411.1 1774.9,428.4" fill="url(#cd9)"/>
<polygon points="1381.2,271.3 1771.2,423.0 1762.7,443.2" fill="url(#cd10)"/>
<polygon points="1381.2,271.3 1758.6,437.4 1751.0,453.7" fill="url(#cd11)"/>
<polygon points="1381.2,271.3 1748.9,448.7 1740.8,464.5" fill="url(#cd12)"/>
<polygon points="1381.2,271.3 1739.3,459.7 1730.7,475.1" fill="url(#cd13)"/>
<polygon points="1381.2,271.3 1729.9,470.6 1720.8,485.6" fill="url(#cd14)"/>
<polygon points="1381.2,271.3 1720.6,481.3 1711.1,495.9" fill="url(#cd15)"/>
<polygon points="1381.2,271.3 1711.3,491.9 1701.4,506.1" fill="url(#cd16)"/>
<polygon points="1381.2,271.3 1702.2,502.4 1691.8,516.2" fill="url(#cd17)"/>
<polygon points="1381.2,271.3 1693.1,512.8 1684.5,523.6" fill="url(#cd18)"/>
<polygon points="1381.2,271.3 1686.3,520.6 1677.5,531.1" fill="url(#cd19)"/>
<polygon points="1381.2,271.3 1679.6,528.5 1670.5,538.7" fill="url(#cd20)"/>
<polygon points="1381.2,271.3 1673.1,536.4 1663.6,546.5" fill="url(#cd21)"/>
<polygon points="1381.2,271.3 1666.5,544.4 1656.8,554.2" fill="url(#cd22)"/>
<polygon points="1381.2,271.3 1659.9,552.4 1649.9,562.0" fill="url(#cd23)"/>
<polygon points="1381.2,271.3 1653.5,560.8 1640.7,572.4" fill="url(#cd24)"/>
<polygon points="1381.2,271.3 1644.3,571.3 1633.6,580.3" fill="url(#cd25)"/>
<polygon points="1381.2,271.3 1637.5,579.5 1626.6,588.2" fill="url(#cd26)"/>
<polygon points="1381.2,271.3 1630.7,587.7 1619.5,596.3" fill="url(#cd27)"/>
<polygon points="1381.2,271.3 1623.7,596.1 1612.2,604.4" fill="url(#cd28)"/>
<polygon points="1381.2,271.3 1616.7,604.6 1604.9,612.6" fill="url(#cd29)"/>
<polygon points="1381.2,271.3 1609.6,613.2 1597.5,620.9" fill="url(#cd30)"/>
<polygon points="1381.2,271.3 1602.4,621.9 1590.0,629.4" fill="url(#cd31)"/>
<polygon points="1381.2,271.3 1595.0,630.7 1582.4,638.0" fill="url(#cd32)"/>
<polygon points="1381.2,271.3 1587.5,639.8 1574.6,646.8" fill="url(#cd33)"/>
<polygon points="1381.2,271.3 1579.9,649.0 1566.6,655.7" fill="url(#cd34)"/>
<polygon points="1381.2,271.3 1572.1,658.4 1558.5,664.8" fill="url(#cd35)"/>
<polygon points="1381.2,271.3 1564.1,668.1 1550.1,674.2" fill="url(#cd36)"/>
<polygon points="1381.2,271.3 1555.9,677.9 1541.6,683.8" fill="url(#cd37)"/>
<polygon points="1381.2,271.3 1545.8,683.8 1527.6,690.6" fill="url(#cd38)"/>
<polygon points="1381.2,271.3 1529.8,685.2 1515.3,690.2" fill="url(#cd39)"/>
<polygon points="1381.2,271.3 1517.7,685.4 1499.5,690.9" fill="url(#cd40)"/>
<polygon points="1381.2,271.3 1501.9,685.4 1487.4,689.4" fill="url(#cd41)"/>
<polygon points="1381.2,271.3 1490.2,685.5 1475.7,689.0" fill="url(#cd42)"/>
<polygon points="1381.2,271.3 1478.7,685.6 1464.2,688.7" fill="url(#cd43)"/>
<polygon points="1381.2,271.3 1467.4,685.6 1452.9,688.4" fill="url(#cd44)"/>
<polygon points="1381.2,271.3 1456.1,685.7 1441.6,688.1" fill="url(#cd45)"/>
<polygon points="1381.2,271.3 1445.0,685.8 1430.5,687.7" fill="url(#cd46)"/>
<polygon points="1381.2,271.3 1433.9,685.8 1419.4,687.4" fill="url(#cd47)"/>
<polygon points="1381.2,271.3 1422.9,685.9 1408.4,687.1" fill="url(#cd48)"/>
<polygon points="1381.2,271.3 1412.0,685.9 1397.5,686.7" fill="url(#cd49)"/>
<polygon points="1381.2,271.3 1401.1,686.0 1386.6,686.4" fill="url(#cd50)"/>
<polygon points="1381.2,271.3 1390.2,686.0 1375.8,686.1" fill="url(#cd51)"/>
<polygon points="1381.2,271.3 1379.4,686.3 1364.9,686.0" fill="url(#cd52)"/>
<polygon points="1381.2,271.3 1368.5,686.4 1357.6,685.9" fill="url(#cd53)"/>
<polygon points="1381.2,271.3 1361.3,686.3 1350.4,685.7" fill="url(#cd54)"/>
<polygon points="1381.2,271.3 1354.2,683.2 1339.8,682.0" fill="url(#cd55)"/>
<polygon points="1381.2,271.3 1344.4,671.7 1337.4,671.0" fill="url(#cd56)"/>
<polygon points="1381.2,271.3 1341.3,667.8 1334.3,667.0" fill="url(#cd57)"/>
<polygon points="1381.2,271.3 1338.2,664.0 1331.3,663.2" fill="url(#cd58)"/>
<polygon points="1381.2,271.3 1335.2,660.1 1328.4,659.3" fill="url(#cd59)"/>
<polygon points="1381.2,271.3 1332.2,656.3 1325.5,655.4" fill="url(#cd60)"/>
<polygon points="1381.2,271.3 1329.3,652.5 1322.7,651.6" fill="url(#cd61)"/>
<polygon points="1381.2,271.3 1326.5,648.8 1319.9,647.8" fill="url(#cd62)"/>
<polygon points="1381.2,271.3 1323.7,645.0 1317.2,644.0" fill="url(#cd63)"/>
<polygon points="1381.2,271.3 1320.9,641.3 1314.5,640.2" fill="url(#cd64)"/>
<polygon points="1381.2,271.3 1318.2,637.7 1308.7,635.9" fill="url(#cd65)"/>
<polygon points="1381.2,271.3 1313.0,630.4 1303.6,628.5" fill="url(#cd66)"/>
<polygon points="1381.2,271.3 1308.0,623.3 1298.8,621.2" fill="url(#cd67)"/>
<polygon points="1381.2,271.3 1303.1,616.3 1294.1,614.1" fill="url(#cd68)"/>
<polygon points="1381.2,271.3 1298.5,609.4 1289.6,607.1" fill="url(#cd69)"/>
<polygon points="1381.2,271.3 1294.0,602.6 1285.3,600.2" fill="url(#cd70)"/>
<polygon points="1381.2,271.3 1289.6,596.0 1281.1,593.5" fill="url(#cd71)"/>
<polygon points="1381.2,271.3 1285.4,589.5 1277.1,586.9" fill="url(#cd72)"/>
<polygon points="1381.2,271.3 1281.3,583.2 1270.5,579.6" fill="url(#cd73)"/>
<polygon points="1381.2,271.3 1275.5,573.9 1265.0,570.0" fill="url(#cd74)"/>
<polygon points="1381.2,271.3 1270.0,564.9 1259.8,560.8" fill="url(#cd75)"/>
<polygon points="1381.2,271.3 1264.7,556.1 1254.8,551.9" fill="url(#cd76)"/>
<polygon points="1381.2,271.3 1259.6,547.6 1250.1,543.2" fill="url(#cd77)"/>
<polygon points="1381.2,271.3 1254.8,539.4 1243.2,533.6" fill="url(#cd78)"/>
<polygon points="1381.2,271.3 1248.6,528.7 1237.5,522.6" fill="url(#cd79)"/>
<polygon points="1381.2,271.3 1242.8,518.4 1232.2,512.1" fill="url(#cd80)"/>
<polygon points="1381.2,271.3 1237.3,508.5 1225.0,500.6" fill="url(#cd81)"/>
<polygon points="1381.2,271.3 1230.7,496.5 1219.1,488.4" fill="url(#cd82)"/>
<polygon points="1381.2,271.3 1224.5,485.1 1213.5,476.6" fill="url(#cd83)"/>
<polygon points="1381.2,271.3 1218.5,474.0 1208.1,465.2" fill="url(#cd84)"/>
<polygon points="1381.2,271.3 1212.8,463.3 1201.4,452.6" fill="url(#cd85)"/>
<polygon points="1381.2,271.3 1206.4,450.7 1195.8,439.7" fill="url(#cd86)"/>
<polygon points="1381.2,271.3 1200.3,438.5 1191.8,428.8" fill="url(#cd87)"/>
<polygon points="1381.2,271.3 1195.4,428.6 1187.4,418.6" fill="url(#cd88)"/>
<polygon points="1381.2,271.3 1190.7,418.8 1183.3,408.6" fill="url(#cd89)"/>
<polygon points="1381.2,271.3 1186.2,409.1 1178.2,396.9" fill="url(#cd90)"/>
<polygon points="1381.2,271.3 1185.9,394.5 1178.7,382.4" fill="url(#cd91)"/>
<polygon points="1381.2,271.3 1185.8,380.7 1180.3,370.4" fill="url(#cd92)"/>
<polygon points="1381.2,271.3 1185.7,369.8 1180.8,359.5" fill="url(#cd93)"/>
<polygon points="1381.2,271.3 1185.6,359.4 1181.2,349.1" fill="url(#cd94)"/>
<polygon points="1381.2,271.3 1185.5,349.4 1181.7,339.0" fill="url(#cd95)"/>
<polygon points="1381.2,271.3 1185.4,339.7 1182.1,329.3" fill="url(#cd96)"/>
<polygon points="1381.2,271.3 1185.3,330.3 1182.5,319.9" fill="url(#cd97)"/>
<polygon points="1381.2,271.3 1185.3,321.1 1183.3,312.5" fill="url(#cd98)"/>
<polygon points="1381.2,271.3 1185.2,313.9 1182.9,301.8" fill="url(#cd99)"/>
<polygon points="1381.2,271.3 1185.1,303.2 1183.9,294.7" fill="url(#cd100)"/>
<polygon points="1381.2,271.3 1185.1,296.3 1184.0,286.0" fill="url(#cd101)"/>
<polygon points="1381.2,271.3 1185.0,287.6 1184.5,279.0" fill="url(#cd102)"/>
<polygon points="1381.2,271.3 1185.0,280.7 1184.8,270.4" fill="url(#cd103)"/>
<polygon points="1381.2,271.3 1184.8,272.2 1185.0,261.9" fill="url(#cd104)"/>
<polygon points="1381.2,271.3 1184.3,263.6 1185.0,253.3" fill="url(#cd105)"/>
<polygon points="1381.2,271.3 1183.9,254.9 1185.1,244.6" fill="url(#cd106)"/>
<polygon points="1381.2,271.3 1183.5,246.2 1185.1,235.9" fill="url(#cd107)"/>
<polygon points="1381.2,271.3 1183.1,237.3 1185.2,227.0" fill="url(#cd108)"/>
<polygon points="1381.2,271.3 1182.7,228.2 1185.3,217.9" fill="url(#cd109)"/>
<polygon points="1381.2,271.3 1182.3,218.9 1185.3,208.6" fill="url(#cd110)"/>
<polygon points="1381.2,271.3 1181.9,209.4 1185.4,199.1" fill="url(#cd111)"/>
<polygon points="1381.2,271.3 1182.2,199.9 1185.5,191.3" fill="url(#cd112)"/>
<polygon points="1381.2,271.3 1181.9,191.8 1185.6,183.2" fill="url(#cd113)"/>
<polygon points="1381.2,271.3 1181.7,183.5 1185.7,174.9" fill="url(#cd114)"/>
<polygon points="1381.2,271.3 1181.4,174.9 1185.8,166.3" fill="url(#cd115)"/>
<polygon points="1381.2,271.3 1182.1,166.5 1185.8,159.7" fill="url(#cd116)"/>
<polygon points="1381.2,271.3 1180.8,159.1 1185.9,150.5" fill="url(#cd117)"/>
<polygon points="1381.2,271.3 1180.5,149.5 1186.0,140.9" fill="url(#cd118)"/>
<polygon points="1381.2,271.3 1183.2,141.5 1187.8,134.7" fill="url(#cd119)"/>
<polygon points="1381.2,271.3 1189.3,138.2 1194.1,131.6" fill="url(#cd120)"/>
<polygon points="1381.2,271.3 1199.7,138.2 1204.4,132.0" fill="url(#cd121)"/>
<polygon points="1381.2,271.3 1209.6,138.5 1214.4,132.6" fill="url(#cd122)"/>
<polygon points="1381.2,271.3 1219.1,138.9 1223.8,133.3" fill="url(#cd123)"/>
<polygon points="1381.2,271.3 1228.1,139.4 1231.6,135.4" fill="url(#cd124)"/>
<polygon points="1381.2,271.3 1233.8,139.8 1237.3,136.0" fill="url(#cd125)"/>
<polygon points="1381.2,271.3 1239.3,140.2 1242.8,136.5" fill="url(#cd126)"/>
<polygon points="1381.2,271.3 1244.6,140.6 1248.1,137.0" fill="url(#cd127)"/>
<polygon points="1381.2,271.3 1249.7,141.0 1253.2,137.6" fill="url(#cd128)"/>
<polygon points="1381.2,271.3 1254.7,141.4 1258.1,138.1" fill="url(#cd129)"/>
<polygon points="1381.2,271.3 1259.4,141.8 1264.0,137.7" fill="url(#cd130)"/>
<polygon points="1381.2,271.3 1266.2,142.5 1269.6,139.5" fill="url(#cd131)"/>
<polygon points="1381.2,271.3 1270.5,142.9 1273.9,140.0" fill="url(#cd132)"/>
<polygon points="1381.2,271.3 1274.7,143.3 1278.1,140.5" fill="url(#cd133)"/>
<polygon points="1381.2,271.3 1278.7,143.7 1282.1,141.0" fill="url(#cd134)"/>
<polygon points="1381.2,271.3 1282.6,144.0 1286.0,141.5" fill="url(#cd135)"/>
<polygon points="1381.2,271.3 1286.4,144.4 1289.8,142.0" fill="url(#cd136)"/>
<polygon points="1381.2,271.3 1290.1,144.8 1294.6,141.7" fill="url(#cd137)"/>
<polygon points="1381.2,271.3 1295.4,145.3 1298.7,143.1" fill="url(#cd138)"/>
<polygon points="1381.2,271.3 1298.8,145.7 1303.3,142.9" fill="url(#cd139)"/>
<polygon points="1381.2,271.3 1303.8,146.2 1308.2,143.6" fill="url(#cd140)"/>
<polygon points="1381.2,271.3 1308.5,146.7 1312.9,144.2" fill="url(#cd141)"/>
<polygon points="1381.2,271.3 1313.1,147.2 1317.5,144.9" fill="url(#cd142)"/>
<polygon points="1381.2,271.3 1317.5,147.6 1321.8,145.5" fill="url(#cd143)"/>
<polygon points="1381.2,271.3 1321.8,148.1 1326.1,146.1" fill="url(#cd144)"/>
<polygon points="1381.2,271.3 1325.9,148.5 1330.2,146.7" fill="url(#cd145)"/>
<polygon points="1381.2,271.3 1329.9,149.0 1334.2,147.2" fill="url(#cd146)"/>
<polygon points="1381.2,271.3 1333.8,149.4 1338.1,147.8" fill="url(#cd147)"/>
<polygon points="1381.2,271.3 1337.6,149.8 1341.8,148.3" fill="url(#cd148)"/>
<polygon points="1381.2,271.3 1341.3,150.2 1345.5,148.9" fill="url(#cd149)"/>
<polygon points="1381.2,271.3 1344.9,150.6 1350.2,149.1" fill="url(#cd150)"/>
<polygon points="1381.2,271.3 1349.5,151.1 1354.8,149.8" fill="url(#cd151)"/>
<polygon points="1381.2,271.3 1354.1,151.6 1359.4,150.6" fill="url(#cd152)"/>
<polygon points="1381.2,271.3 1358.6,152.1 1363.8,151.2" fill="url(#cd153)"/>
<polygon points="1381.2,271.3 1362.9,152.6 1368.1,151.9" fill="url(#cd154)"/>
<polygon points="1381.2,271.3 1367.2,153.1 1372.4,152.6" fill="url(#cd155)"/>
<polygon points="1381.2,271.3 1371.4,153.6 1376.6,153.3" fill="url(#cd156)"/>
<polygon points="1381.2,271.3 1375.6,154.1 1380.7,153.9" fill="url(#cd157)"/>
<polygon points="1381.2,271.3 1379.7,154.6 1384.8,154.6" fill="url(#cd158)"/>
<polygon points="1381.2,271.3 1383.7,155.1 1387.8,155.2" fill="url(#cd159)"/>
<polygon points="1381.2,271.3 1386.8,155.4 1393.8,155.9" fill="url(#cd160)"/>
<polygon points="1381.2,271.3 1392.8,156.1 1397.8,156.7" fill="url(#cd161)"/>
<polygon points="1381.2,271.3 1396.8,156.5 1401.8,157.3" fill="url(#cd162)"/>
<polygon points="1381.2,271.3 1400.9,156.9 1405.8,157.8" fill="url(#cd163)"/>
<polygon points="1381.2,271.3 1404.9,157.2 1409.9,158.4" fill="url(#cd164)"/>
<polygon points="1381.2,271.3 1409.1,157.4 1415.0,159.0" fill="url(#cd165)"/>
<polygon points="1381.2,271.3 1414.3,157.9 1420.1,159.8" fill="url(#cd166)"/>
<polygon points="1381.2,271.3 1419.5,158.3 1425.4,160.5" fill="url(#cd167)"/>
<polygon points="1381.2,271.3 1424.9,158.8 1430.8,161.2" fill="url(#cd168)"/>
<polygon points="1381.2,271.3 1430.5,159.3 1436.3,162.0" fill="url(#cd169)"/>
<polygon points="1381.2,271.3 1436.4,159.4 1443.1,162.9" fill="url(#cd170)"/>
<polygon points="1381.2,271.3 1443.3,160.4 1449.0,163.8" fill="url(#cd171)"/>
<polygon points="1381.2,271.3 1449.5,160.9 1455.2,164.6" fill="url(#cd172)"/>
<polygon points="1381.2,271.3 1456.0,161.5 1461.6,165.6" fill="url(#cd173)"/>
<polygon points="1381.2,271.3 1462.7,162.1 1468.3,166.5" fill="url(#cd174)"/>
<polygon points="1381.2,271.3 1469.9,162.7 1475.5,167.5" fill="url(#cd175)"/>
<polygon points="1381.2,271.3 1477.5,163.4 1483.0,168.6" fill="url(#cd176)"/>
<polygon points="1381.2,271.3 1486.4,163.3 1492.7,170.0" fill="url(#cd177)"/>
<polygon points="1381.2,271.3 1496.1,165.1 1501.5,171.2" fill="url(#cd178)"/>
<polygon points="1381.2,271.3 1505.7,165.9 1511.0,172.6" fill="url(#cd179)"/>
<polygon points="1381.2,271.3 1516.1,166.8 1521.4,174.0" fill="url(#cd180)"/>
<polygon points="1381.2,271.3 1526.1,168.9 1530.4,175.3" fill="url(#cd181)"/>
<polygon points="1381.2,271.3 1536.0,169.8 1540.2,176.7" fill="url(#cd182)"/>
<polygon points="1381.2,271.3 1546.7,170.9 1550.9,178.2" fill="url(#cd183)"/>
<polygon points="1381.2,271.3 1556.3,173.2 1559.6,179.4" fill="url(#cd184)"/>
<polygon points="1381.2,271.3 1565.8,174.2 1569.0,180.7" fill="url(#cd185)"/>
<polygon points="1381.2,271.3 1576.0,175.3 1579.2,182.1" fill="url(#cd186)"/>
<polygon points="1381.2,271.3 1587.1,176.4 1590.2,183.6" fill="url(#cd187)"/>
<polygon points="1381.2,271.3 1595.8,179.1 1598.2,184.7" fill="url(#cd188)"/>
<polygon points="1381.2,271.3 1604.3,180.0 1606.6,185.9" fill="url(#cd189)"/>
<polygon points="1381.2,271.3 1613.3,181.0 1615.6,187.1" fill="url(#cd190)"/>
<polygon points="1381.2,271.3 1623.0,182.1 1625.3,188.5" fill="url(#cd191)"/>
<polygon points="1381.2,271.3 1633.4,183.2 1635.6,189.9" fill="url(#cd192)"/>
<polygon points="1381.2,271.3 1644.6,184.5 1646.7,191.4" fill="url(#cd193)"/>
<polygon points="1381.2,271.3 1656.6,185.8 1658.8,193.0" fill="url(#cd194)"/>
<polygon points="1381.2,271.3 1669.7,187.2 1671.8,194.8" fill="url(#cd195)"/>
<polygon points="1381.2,271.3 1684.0,188.7 1686.1,196.7" fill="url(#cd196)"/>
<polygon points="1381.2,271.3 1692.3,192.3 1693.6,197.7" fill="url(#cd197)"/>
<polygon points="1381.2,271.3 1700.3,193.2 1701.6,198.8" fill="url(#cd198)"/>
<polygon points="1381.2,271.3 1708.7,194.2 1709.9,199.9" fill="url(#cd199)"/>
<polygon points="1381.2,271.3 1717.4,195.2 1718.7,201.1" fill="url(#cd200)"/>
<polygon points="1381.2,271.3 1726.7,196.3 1727.9,202.3" fill="url(#cd201)"/>
<polygon points="1381.2,271.3 1736.4,197.4 1737.6,203.6" fill="url(#cd202)"/>
<polygon points="1381.2,271.3 1756.8,196.6 1758.7,206.4" fill="url(#cd203)"/>
<polygon points="1381.2,271.3 1780.4,199.1 1782.1,209.6" fill="url(#cd204)"/>
<polygon points="1381.2,271.3 1806.9,202.0 1808.6,213.1" fill="url(#cd205)"/>
<polygon points="1381.2,271.3 1837.2,205.2 1838.8,217.1" fill="url(#cd206)"/>
<polygon points="1381.2,271.3 1871.8,208.9 1873.3,221.8" fill="url(#cd207)"/>
<polygon points="1381.2,271.3 1910.0,213.4 1912.0,236.5" fill="url(#cd208)"/>
<polygon points="1381.2,271.3 1911.0,231.9 1912.2,255.1" fill="url(#cd209)"/>
<polygon points="1381.2,271.3 1911.0,250.5 1911.4,273.6" fill="url(#cd210)"/></g></g><g clip-path="url(#cT)"><g shape-rendering="crispEdges"><polygon points="1381.2,271.3 1661.6,270.1 1661.3,282.3" fill="url(#cb0)"/>
<polygon points="1381.2,271.3 1653.3,279.6 1652.7,291.5" fill="url(#cb1)"/>
<polygon points="1381.2,271.3 1645.5,288.6 1644.5,300.1" fill="url(#cb2)"/>
<polygon points="1381.2,271.3 1638.1,297.2 1636.4,310.6" fill="url(#cb3)"/>
<polygon points="1381.2,271.3 1629.3,307.3 1627.5,318.1" fill="url(#cb4)"/>
<polygon points="1381.2,271.3 1622.6,315.0 1620.0,327.5" fill="url(#cb5)"/>
<polygon points="1381.2,271.3 1614.7,324.1 1612.1,334.3" fill="url(#cb6)"/>
<polygon points="1381.2,271.3 1608.6,331.2 1605.1,343.0" fill="url(#cb7)"/>
<polygon points="1381.2,271.3 1601.2,339.6 1598.0,349.2" fill="url(#cb8)"/>
<polygon points="1381.2,271.3 1595.5,346.2 1592.1,355.4" fill="url(#cb9)"/>
<polygon points="1381.2,271.3 1590.0,352.5 1585.5,363.3" fill="url(#cb10)"/>
<polygon points="1381.2,271.3 1583.3,360.2 1579.2,369.0" fill="url(#cb11)"/>
<polygon points="1381.2,271.3 1578.0,366.3 1573.7,374.8" fill="url(#cb12)"/>
<polygon points="1381.2,271.3 1572.9,372.2 1568.3,380.4" fill="url(#cb13)"/>
<polygon points="1381.2,271.3 1567.8,378.0 1563.0,386.0" fill="url(#cb14)"/>
<polygon points="1381.2,271.3 1562.8,383.7 1557.7,391.5" fill="url(#cb15)"/>
<polygon points="1381.2,271.3 1557.9,389.4 1552.6,397.0" fill="url(#cb16)"/>
<polygon points="1381.2,271.3 1553.0,395.0 1547.4,402.3" fill="url(#cb17)"/>
<polygon points="1381.2,271.3 1548.1,400.5 1543.5,406.3" fill="url(#cb18)"/>
<polygon points="1381.2,271.3 1544.4,404.7 1539.7,410.3" fill="url(#cb19)"/>
<polygon points="1381.2,271.3 1540.8,408.9 1535.9,414.3" fill="url(#cb20)"/>
<polygon points="1381.2,271.3 1537.3,413.1 1532.2,418.5" fill="url(#cb21)"/>
<polygon points="1381.2,271.3 1533.7,417.3 1528.6,422.6" fill="url(#cb22)"/>
<polygon points="1381.2,271.3 1530.2,421.6 1524.9,426.7" fill="url(#cb23)"/>
<polygon points="1381.2,271.3 1526.8,426.1 1519.9,432.3" fill="url(#cb24)"/>
<polygon points="1381.2,271.3 1521.8,431.6 1516.1,436.5" fill="url(#cb25)"/>
<polygon points="1381.2,271.3 1518.2,436.0 1512.3,440.7" fill="url(#cb26)"/>
<polygon points="1381.2,271.3 1514.5,440.4 1508.5,444.9" fill="url(#cb27)"/>
<polygon points="1381.2,271.3 1510.8,444.8 1504.6,449.3" fill="url(#cb28)"/>
<polygon points="1381.2,271.3 1507.0,449.3 1500.7,453.6" fill="url(#cb29)"/>
<polygon points="1381.2,271.3 1503.2,453.9 1496.7,458.0" fill="url(#cb30)"/>
<polygon points="1381.2,271.3 1499.3,458.5 1492.7,462.5" fill="url(#cb31)"/>
<polygon points="1381.2,271.3 1495.4,463.2 1488.6,467.1" fill="url(#cb32)"/>
<polygon points="1381.2,271.3 1491.3,468.0 1484.4,471.7" fill="url(#cb33)"/>
<polygon points="1381.2,271.3 1487.2,472.9 1480.1,476.5" fill="url(#cb34)"/>
<polygon points="1381.2,271.3 1483.1,477.9 1475.8,481.3" fill="url(#cb35)"/>
<polygon points="1381.2,271.3 1478.8,483.0 1471.3,486.3" fill="url(#cb36)"/>
<polygon points="1381.2,271.3 1474.4,488.2 1466.7,491.3" fill="url(#cb37)"/>
<polygon points="1381.2,271.3 1470.3,494.6 1460.5,498.3" fill="url(#cb38)"/>
<polygon points="1381.2,271.3 1463.6,501.0 1455.6,503.7" fill="url(#cb39)"/>
<polygon points="1381.2,271.3 1459.2,508.0 1448.8,511.2" fill="url(#cb40)"/>
<polygon points="1381.2,271.3 1452.1,514.7 1443.6,517.0" fill="url(#cb41)"/>
<polygon points="1381.2,271.3 1446.9,520.9 1438.1,523.0" fill="url(#cb42)"/>
<polygon points="1381.2,271.3 1441.5,527.3 1432.5,529.3" fill="url(#cb43)"/>
<polygon points="1381.2,271.3 1435.8,534.0 1426.6,535.8" fill="url(#cb44)"/>
<polygon points="1381.2,271.3 1430.0,541.0 1420.5,542.5" fill="url(#cb45)"/>
<polygon points="1381.2,271.3 1423.8,548.3 1414.1,549.6" fill="url(#cb46)"/>
<polygon points="1381.2,271.3 1417.4,555.9 1407.4,557.0" fill="url(#cb47)"/>
<polygon points="1381.2,271.3 1410.7,564.0 1400.4,564.8" fill="url(#cb48)"/>
<polygon points="1381.2,271.3 1403.6,572.4 1393.0,573.0" fill="url(#cb49)"/>
<polygon points="1381.2,271.3 1396.1,581.3 1385.3,581.6" fill="url(#cb50)"/>
<polygon points="1381.2,271.3 1388.2,590.7 1377.0,590.8" fill="url(#cb51)"/>
<polygon points="1381.2,271.3 1379.8,600.7 1368.3,600.5" fill="url(#cb52)"/>
<polygon points="1381.2,271.3 1370.9,607.7 1362.1,607.3" fill="url(#cb53)"/>
<polygon points="1381.2,271.3 1364.7,615.0 1355.7,614.4" fill="url(#cb54)"/>
<polygon points="1381.2,271.3 1358.4,618.6 1346.3,617.6" fill="url(#cb55)"/>
<polygon points="1381.2,271.3 1350.6,604.3 1344.8,603.7" fill="url(#cb56)"/>
<polygon points="1381.2,271.3 1348.8,592.8 1343.2,592.1" fill="url(#cb57)"/>
<polygon points="1381.2,271.3 1347.2,581.9 1341.8,581.3" fill="url(#cb58)"/>
<polygon points="1381.2,271.3 1345.6,571.8 1340.4,571.2" fill="url(#cb59)"/>
<polygon points="1381.2,271.3 1344.2,562.3 1339.1,561.7" fill="url(#cb60)"/>
<polygon points="1381.2,271.3 1342.8,553.4 1337.9,552.7" fill="url(#cb61)"/>
<polygon points="1381.2,271.3 1341.5,545.0 1336.7,544.3" fill="url(#cb62)"/>
<polygon points="1381.2,271.3 1340.3,537.1 1335.6,536.3" fill="url(#cb63)"/>
<polygon points="1381.2,271.3 1339.1,529.6 1334.6,528.8" fill="url(#cb64)"/>
<polygon points="1381.2,271.3 1338.0,522.5 1331.5,521.3" fill="url(#cb65)"/>
<polygon points="1381.2,271.3 1336.0,509.3 1329.8,508.1" fill="url(#cb66)"/>
<polygon points="1381.2,271.3 1334.2,497.4 1328.3,496.1" fill="url(#cb67)"/>
<polygon points="1381.2,271.3 1332.5,486.6 1326.9,485.2" fill="url(#cb68)"/>
<polygon points="1381.2,271.3 1330.9,476.7 1325.6,475.3" fill="url(#cb69)"/>
<polygon points="1381.2,271.3 1329.5,467.6 1324.4,466.2" fill="url(#cb70)"/>
<polygon points="1381.2,271.3 1328.2,459.2 1323.3,457.7" fill="url(#cb71)"/>
<polygon points="1381.2,271.3 1327.0,451.4 1322.3,449.9" fill="url(#cb72)"/>
<polygon points="1381.2,271.3 1325.8,444.2 1319.8,442.2" fill="url(#cb73)"/>
<polygon points="1381.2,271.3 1324.3,434.3 1318.6,432.2" fill="url(#cb74)"/>
<polygon points="1381.2,271.3 1322.8,425.3 1317.5,423.2" fill="url(#cb75)"/>
<polygon points="1381.2,271.3 1321.5,417.1 1316.5,414.9" fill="url(#cb76)"/>
<polygon points="1381.2,271.3 1320.3,409.6 1315.6,407.4" fill="url(#cb77)"/>
<polygon points="1381.2,271.3 1319.2,402.7 1313.6,399.8" fill="url(#cb78)"/>
<polygon points="1381.2,271.3 1317.9,394.2 1312.6,391.4" fill="url(#cb79)"/>
<polygon points="1381.2,271.3 1316.6,386.6 1311.7,383.6" fill="url(#cb80)"/>
<polygon points="1381.2,271.3 1315.5,379.6 1309.9,376.0" fill="url(#cb81)"/>
<polygon points="1381.2,271.3 1314.2,371.6 1309.0,367.9" fill="url(#cb82)"/>
<polygon points="1381.2,271.3 1313.0,364.3 1308.2,360.6" fill="url(#cb83)"/>
<polygon points="1381.2,271.3 1311.9,357.6 1307.5,353.9" fill="url(#cb84)"/>
<polygon points="1381.2,271.3 1310.9,351.5 1306.1,347.0" fill="url(#cb85)"/>
<polygon points="1381.2,271.3 1309.7,344.6 1305.4,340.1" fill="url(#cb86)"/>
<polygon points="1381.2,271.3 1308.7,338.3 1305.3,334.4" fill="url(#cb87)"/>
<polygon points="1381.2,271.3 1307.9,333.4 1304.7,329.4" fill="url(#cb88)"/>
<polygon points="1381.2,271.3 1307.1,328.7 1304.2,324.7" fill="url(#cb89)"/>
<polygon points="1381.2,271.3 1306.4,324.2 1303.3,319.5" fill="url(#cb90)"/>
<polygon points="1381.2,271.3 1305.5,319.0 1302.8,314.3" fill="url(#cb91)"/>
<polygon points="1381.2,271.3 1304.7,314.1 1302.6,310.1" fill="url(#cb92)"/>
<polygon points="1381.2,271.3 1304.1,310.2 1302.2,306.1" fill="url(#cb93)"/>
<polygon points="1381.2,271.3 1303.5,306.3 1301.8,302.2" fill="url(#cb94)"/>
<polygon points="1381.2,271.3 1302.9,302.5 1301.3,298.4" fill="url(#cb95)"/>
<polygon points="1381.2,271.3 1302.3,298.9 1301.0,294.7" fill="url(#cb96)"/>
<polygon points="1381.2,271.3 1301.7,295.2 1300.6,291.0" fill="url(#cb97)"/>
<polygon points="1381.2,271.3 1301.2,291.6 1300.4,288.1" fill="url(#cb98)"/>
<polygon points="1381.2,271.3 1300.7,288.8 1299.8,283.8" fill="url(#cb99)"/>
<polygon points="1381.2,271.3 1300.1,284.5 1299.6,281.0" fill="url(#cb100)"/>
<polygon points="1381.2,271.3 1299.5,281.7 1299.1,277.4" fill="url(#cb101)"/>
<polygon points="1381.2,271.3 1298.9,278.1 1298.7,274.5" fill="url(#cb102)"/>
<polygon points="1381.2,271.3 1298.3,275.3 1298.2,270.9" fill="url(#cb103)"/>
<polygon points="1381.2,271.3 1297.6,271.7 1297.7,267.3" fill="url(#cb104)"/>
<polygon points="1381.2,271.3 1296.9,268.0 1297.2,263.6" fill="url(#cb105)"/>
<polygon points="1381.2,271.3 1296.2,264.2 1296.7,259.8" fill="url(#cb106)"/>
<polygon points="1381.2,271.3 1295.5,260.4 1296.2,255.9" fill="url(#cb107)"/>
<polygon points="1381.2,271.3 1294.8,256.5 1295.7,251.9" fill="url(#cb108)"/>
<polygon points="1381.2,271.3 1294.0,252.4 1295.1,247.8" fill="url(#cb109)"/>
<polygon points="1381.2,271.3 1293.2,248.1 1294.6,243.6" fill="url(#cb110)"/>
<polygon points="1381.2,271.3 1292.4,243.7 1294.0,239.1" fill="url(#cb111)"/>
<polygon points="1381.2,271.3 1292.1,239.3 1293.5,235.4" fill="url(#cb112)"/>
<polygon points="1381.2,271.3 1291.4,235.5 1293.0,231.6" fill="url(#cb113)"/>
<polygon points="1381.2,271.3 1290.7,231.5 1292.5,227.6" fill="url(#cb114)"/>
<polygon points="1381.2,271.3 1290.0,227.3 1292.0,223.4" fill="url(#cb115)"/>
<polygon points="1381.2,271.3 1289.9,223.3 1291.6,220.1" fill="url(#cb116)"/>
<polygon points="1381.2,271.3 1288.6,219.5 1291.0,215.5" fill="url(#cb117)"/>
<polygon points="1381.2,271.3 1287.8,214.6 1290.4,210.6" fill="url(#cb118)"/>
<polygon points="1381.2,271.3 1287.7,210.0 1289.9,206.8" fill="url(#cb119)"/>
<polygon points="1381.2,271.3 1287.0,206.0 1289.4,202.7" fill="url(#cb120)"/>
<polygon points="1381.2,271.3 1286.3,201.8 1288.8,198.5" fill="url(#cb121)"/>
<polygon points="1381.2,271.3 1285.6,197.3 1288.3,194.0" fill="url(#cb122)"/>
<polygon points="1381.2,271.3 1284.8,192.6 1287.6,189.3" fill="url(#cb123)"/>
<polygon points="1381.2,271.3 1285.0,188.4 1287.2,185.9" fill="url(#cb124)"/>
<polygon points="1381.2,271.3 1284.5,185.0 1286.8,182.5" fill="url(#cb125)"/>
<polygon points="1381.2,271.3 1283.9,181.4 1286.3,178.9" fill="url(#cb126)"/>
<polygon points="1381.2,271.3 1283.3,177.6 1285.8,175.1" fill="url(#cb127)"/>
<polygon points="1381.2,271.3 1282.7,173.7 1285.3,171.1" fill="url(#cb128)"/>
<polygon points="1381.2,271.3 1282.0,169.5 1284.7,167.0" fill="url(#cb129)"/>
<polygon points="1381.2,271.3 1282.2,166.1 1286.0,162.7" fill="url(#cb130)"/>
<polygon points="1381.2,271.3 1285.9,164.6 1288.8,162.1" fill="url(#cb131)"/>
<polygon points="1381.2,271.3 1289.5,164.9 1292.3,162.5" fill="url(#cb132)"/>
<polygon points="1381.2,271.3 1292.9,165.2 1295.8,162.9" fill="url(#cb133)"/>
<polygon points="1381.2,271.3 1296.3,165.5 1299.1,163.3" fill="url(#cb134)"/>
<polygon points="1381.2,271.3 1299.5,165.8 1302.3,163.7" fill="url(#cb135)"/>
<polygon points="1381.2,271.3 1302.6,166.0 1305.4,164.0" fill="url(#cb136)"/>
<polygon points="1381.2,271.3 1305.6,166.3 1309.3,163.7" fill="url(#cb137)"/>
<polygon points="1381.2,271.3 1310.0,166.7 1312.7,164.9" fill="url(#cb138)"/>
<polygon points="1381.2,271.3 1312.8,166.9 1316.4,164.6" fill="url(#cb139)"/>
<polygon points="1381.2,271.3 1316.8,167.3 1320.5,165.1" fill="url(#cb140)"/>
<polygon points="1381.2,271.3 1320.7,167.6 1324.4,165.6" fill="url(#cb141)"/>
<polygon points="1381.2,271.3 1324.5,168.0 1328.1,166.0" fill="url(#cb142)"/>
<polygon points="1381.2,271.3 1328.1,168.3 1331.8,166.5" fill="url(#cb143)"/>
<polygon points="1381.2,271.3 1331.6,168.6 1335.3,166.9" fill="url(#cb144)"/>
<polygon points="1381.2,271.3 1335.0,168.9 1338.7,167.3" fill="url(#cb145)"/>
<polygon points="1381.2,271.3 1338.4,169.2 1341.9,167.7" fill="url(#cb146)"/>
<polygon points="1381.2,271.3 1341.6,169.4 1345.2,168.1" fill="url(#cb147)"/>
<polygon points="1381.2,271.3 1344.7,169.7 1348.3,168.5" fill="url(#cb148)"/>
<polygon points="1381.2,271.3 1347.8,170.0 1351.3,168.9" fill="url(#cb149)"/>
<polygon points="1381.2,271.3 1350.8,170.3 1355.2,169.0" fill="url(#cb150)"/>
<polygon points="1381.2,271.3 1354.7,170.6 1359.1,169.5" fill="url(#cb151)"/>
<polygon points="1381.2,271.3 1358.5,170.9 1362.9,170.0" fill="url(#cb152)"/>
<polygon points="1381.2,271.3 1362.2,171.3 1366.6,170.5" fill="url(#cb153)"/>
<polygon points="1381.2,271.3 1365.8,171.6 1370.2,171.0" fill="url(#cb154)"/>
<polygon points="1381.2,271.3 1369.4,171.9 1373.8,171.5" fill="url(#cb155)"/>
<polygon points="1381.2,271.3 1373.0,172.3 1377.3,172.0" fill="url(#cb156)"/>
<polygon points="1381.2,271.3 1376.4,172.6 1380.8,172.5" fill="url(#cb157)"/>
<polygon points="1381.2,271.3 1379.9,172.9 1384.2,173.0" fill="url(#cb158)"/>
<polygon points="1381.2,271.3 1383.3,173.3 1386.7,173.4" fill="url(#cb159)"/>
<polygon points="1381.2,271.3 1385.9,173.5 1391.8,174.0" fill="url(#cb160)"/>
<polygon points="1381.2,271.3 1391.0,174.0 1395.2,174.5" fill="url(#cb161)"/>
<polygon points="1381.2,271.3 1394.4,174.2 1398.6,174.8" fill="url(#cb162)"/>
<polygon points="1381.2,271.3 1397.8,174.4 1402.0,175.2" fill="url(#cb163)"/>
<polygon points="1381.2,271.3 1401.3,174.6 1405.5,175.6" fill="url(#cb164)"/>
<polygon points="1381.2,271.3 1404.8,174.7 1409.8,176.1" fill="url(#cb165)"/>
<polygon points="1381.2,271.3 1409.3,175.0 1414.3,176.6" fill="url(#cb166)"/>
<polygon points="1381.2,271.3 1413.8,175.3 1418.8,177.1" fill="url(#cb167)"/>
<polygon points="1381.2,271.3 1418.4,175.6 1423.4,177.6" fill="url(#cb168)"/>
<polygon points="1381.2,271.3 1423.2,175.9 1428.1,178.2" fill="url(#cb169)"/>
<polygon points="1381.2,271.3 1428.3,175.8 1434.0,178.9" fill="url(#cb170)"/>
<polygon points="1381.2,271.3 1434.2,176.6 1439.1,179.5" fill="url(#cb171)"/>
<polygon points="1381.2,271.3 1439.6,177.0 1444.4,180.1" fill="url(#cb172)"/>
<polygon points="1381.2,271.3 1445.2,177.3 1450.0,180.8" fill="url(#cb173)"/>
<polygon points="1381.2,271.3 1451.1,177.7 1455.9,181.5" fill="url(#cb174)"/>
<polygon points="1381.2,271.3 1457.3,178.1 1462.1,182.3" fill="url(#cb175)"/>
<polygon points="1381.2,271.3 1463.9,178.6 1468.7,183.1" fill="url(#cb176)"/>
<polygon points="1381.2,271.3 1471.7,178.4 1477.2,184.1" fill="url(#cb177)"/>
<polygon points="1381.2,271.3 1480.3,179.7 1485.0,185.0" fill="url(#cb178)"/>
<polygon points="1381.2,271.3 1488.7,180.2 1493.4,186.0" fill="url(#cb179)"/>
<polygon points="1381.2,271.3 1498.0,180.9 1502.6,187.1" fill="url(#cb180)"/>
<polygon points="1381.2,271.3 1506.9,182.5 1510.6,188.1" fill="url(#cb181)"/>
<polygon points="1381.2,271.3 1515.7,183.1 1519.4,189.1" fill="url(#cb182)"/>
<polygon points="1381.2,271.3 1525.3,183.8 1529.0,190.2" fill="url(#cb183)"/>
<polygon points="1381.2,271.3 1534.0,185.7 1536.9,191.1" fill="url(#cb184)"/>
<polygon points="1381.2,271.3 1542.5,186.4 1545.4,192.1" fill="url(#cb185)"/>
<polygon points="1381.2,271.3 1551.8,187.2 1554.6,193.2" fill="url(#cb186)"/>
<polygon points="1381.2,271.3 1561.9,188.0 1564.7,194.3" fill="url(#cb187)"/>
<polygon points="1381.2,271.3 1569.9,190.2 1572.0,195.2" fill="url(#cb188)"/>
<polygon points="1381.2,271.3 1577.7,190.9 1579.8,196.1" fill="url(#cb189)"/>
<polygon points="1381.2,271.3 1586.1,191.6 1588.1,197.0" fill="url(#cb190)"/>
<polygon points="1381.2,271.3 1595.0,192.4 1597.0,198.0" fill="url(#cb191)"/>
<polygon points="1381.2,271.3 1604.7,193.2 1606.7,199.1" fill="url(#cb192)"/>
<polygon points="1381.2,271.3 1615.2,194.1 1617.1,200.3" fill="url(#cb193)"/>
<polygon points="1381.2,271.3 1626.5,195.1 1628.4,201.6" fill="url(#cb194)"/>
<polygon points="1381.2,271.3 1638.9,196.2 1640.8,203.0" fill="url(#cb195)"/>
<polygon points="1381.2,271.3 1652.5,197.3 1654.3,204.5" fill="url(#cb196)"/>
<polygon points="1381.2,271.3 1660.4,200.4 1661.6,205.3" fill="url(#cb197)"/>
<polygon points="1381.2,271.3 1668.0,201.1 1669.2,206.1" fill="url(#cb198)"/>
<polygon points="1381.2,271.3 1676.1,201.9 1677.3,207.0" fill="url(#cb199)"/>
<polygon points="1381.2,271.3 1684.6,202.7 1685.7,208.0" fill="url(#cb200)"/>
<polygon points="1381.2,271.3 1693.5,203.5 1694.7,208.9" fill="url(#cb201)"/>
<polygon points="1381.2,271.3 1703.0,204.4 1704.1,210.0" fill="url(#cb202)"/>
<polygon points="1381.2,271.3 1713.0,205.3 1714.6,214.0" fill="url(#cb203)"/>
<polygon points="1381.2,271.3 1712.5,211.4 1714.0,220.1" fill="url(#cb204)"/>
<polygon points="1381.2,271.3 1706.5,218.3 1707.7,226.9" fill="url(#cb205)"/>
<polygon points="1381.2,271.3 1700.7,225.0 1701.8,233.4" fill="url(#cb206)"/>
<polygon points="1381.2,271.3 1695.1,231.4 1696.1,239.6" fill="url(#cb207)"/>
<polygon points="1381.2,271.3 1689.9,237.5 1691.0,251.0" fill="url(#cb208)"/>
<polygon points="1381.2,271.3 1679.8,249.1 1680.4,262.2" fill="url(#cb209)"/>
<polygon points="1381.2,271.3 1670.4,259.9 1670.6,272.6" fill="url(#cb210)"/></g></g></g><rect x="1277.0" y="158.0" width="15" height="15" fill="none" stroke="#fff" stroke-opacity=".96" stroke-width="1.7"/><rect x="1296.0" y="166.0" width="15" height="15" fill="none" stroke="#fff" stroke-opacity=".96" stroke-width="1.7"/><rect x="1301.0" y="169.0" width="15" height="15" fill="none" stroke="#fff" stroke-opacity=".96" stroke-width="1.7"/><rect x="1305.5" y="173.5" width="15" height="15" fill="none" stroke="#fff" stroke-opacity=".96" stroke-width="1.7"/><rect x="1344.0" y="181.0" width="15" height="15" fill="none" stroke="#fff" stroke-opacity=".96" stroke-width="1.7"/><rect x="1359.5" y="181.0" width="15" height="15" fill="none" stroke="#fff" stroke-opacity=".96" stroke-width="1.7"/><rect x="1362.0" y="167.0" width="15" height="15" fill="none" stroke="#fff" stroke-opacity=".96" stroke-width="1.7"/><rect x="1368.5" y="168.5" width="15" height="15" fill="none" stroke="#fff" stroke-opacity=".96" stroke-width="1.7"/><rect x="1375.5" y="167.5" width="15" height="15" fill="none" stroke="#fff" stroke-opacity=".96" stroke-width="1.7"/><rect x="1382.5" y="168.0" width="15" height="15" fill="none" stroke="#fff" stroke-opacity=".96" stroke-width="1.7"/><rect x="1390.5" y="170.5" width="15" height="15" fill="none" stroke="#fff" stroke-opacity=".96" stroke-width="1.7"/><rect x="1392.5" y="175.5" width="15" height="15" fill="none" stroke="#fff" stroke-opacity=".96" stroke-width="1.7"/><rect x="1401.0" y="169.5" width="15" height="15" fill="none" stroke="#fff" stroke-opacity=".96" stroke-width="1.7"/><rect x="1284.0" y="203.0" width="15" height="15" fill="none" stroke="#fff" stroke-opacity=".96" stroke-width="1.7"/><rect x="1315.2" y="199.5" width="15" height="15" fill="rgba(95,165,95,0.27)" stroke="#fff" stroke-opacity=".96" stroke-width="1.7"/><rect x="1315.5" y="216.5" width="15" height="15" fill="none" stroke="#fff" stroke-opacity=".96" stroke-width="1.7"/><rect x="1300.5" y="219.0" width="15" height="15" fill="none" stroke="#fff" stroke-opacity=".96" stroke-width="1.7"/><rect x="1321.0" y="233.7" width="15" height="15" fill="rgba(110,185,140,0.38)" stroke="#fff" stroke-opacity=".96" stroke-width="1.7"/><rect x="1290.0" y="247.0" width="15" height="15" fill="none" stroke="#fff" stroke-opacity=".96" stroke-width="1.7"/><rect x="1291.5" y="255.5" width="15" height="15" fill="none" stroke="#fff" stroke-opacity=".96" stroke-width="1.7"/><rect x="1382.0" y="208.0" width="15" height="15" fill="rgba(210,210,130,0.54)" stroke="#fff" stroke-opacity=".96" stroke-width="1.7"/><rect x="1363.5" y="229.5" width="15" height="15" fill="rgba(215,230,175,0.6)" stroke="#fff" stroke-opacity=".96" stroke-width="1.7"/><rect x="1356.0" y="238.5" width="15" height="15" fill="rgba(185,215,175,0.6)" stroke="#fff" stroke-opacity=".96" stroke-width="1.7"/><rect x="1357.5" y="250.5" width="15" height="15" fill="rgba(190,215,180,0.6)" stroke="#fff" stroke-opacity=".96" stroke-width="1.7"/><rect x="1379.0" y="250.0" width="15" height="15" fill="rgba(215,210,185,0.6)" stroke="#fff" stroke-opacity=".96" stroke-width="1.7"/><rect x="1394.5" y="250.0" width="15" height="15" fill="rgba(235,205,190,0.6)" stroke="#fff" stroke-opacity=".96" stroke-width="1.7"/><rect x="1429.0" y="175.5" width="15" height="15" fill="none" stroke="#fff" stroke-opacity=".96" stroke-width="1.7"/><rect x="1432.5" y="175.0" width="15" height="15" fill="none" stroke="#fff" stroke-opacity=".96" stroke-width="1.7"/><rect x="1440.0" y="175.0" width="15" height="15" fill="none" stroke="#fff" stroke-opacity=".96" stroke-width="1.7"/><rect x="1476.0" y="177.5" width="15" height="15" fill="none" stroke="#fff" stroke-opacity=".96" stroke-width="1.7"/><rect x="1479.5" y="179.0" width="15" height="15" fill="none" stroke="#fff" stroke-opacity=".96" stroke-width="1.7"/><rect x="1464.5" y="185.5" width="15" height="15" fill="none" stroke="#fff" stroke-opacity=".96" stroke-width="1.7"/><rect x="1506.0" y="193.5" width="15" height="15" fill="none" stroke="#fff" stroke-opacity=".96" stroke-width="1.7"/><rect x="1463.0" y="201.0" width="15" height="15" fill="none" stroke="#fff" stroke-opacity=".96" stroke-width="1.7"/><rect x="1498.5" y="203.0" width="15" height="15" fill="rgba(210,130,90,0.23)" stroke="#fff" stroke-opacity=".96" stroke-width="1.7"/><rect x="1402.5" y="218.5" width="15" height="15" fill="none" stroke="#fff" stroke-opacity=".96" stroke-width="1.7"/><rect x="1443.0" y="210.5" width="15" height="15" fill="rgba(200,130,95,0.27)" stroke="#fff" stroke-opacity=".96" stroke-width="1.7"/><rect x="1478.5" y="207.5" width="15" height="15" fill="rgba(225,140,105,0.35)" stroke="#fff" stroke-opacity=".96" stroke-width="1.7"/><rect x="1472.5" y="212.5" width="15" height="15" fill="rgba(225,140,105,0.35)" stroke="#fff" stroke-opacity=".96" stroke-width="1.7"/><rect x="1476.5" y="214.5" width="15" height="15" fill="rgba(225,140,105,0.35)" stroke="#fff" stroke-opacity=".96" stroke-width="1.7"/><rect x="1468.5" y="216.5" width="15" height="15" fill="rgba(245,150,125,0.5)" stroke="#fff" stroke-opacity=".96" stroke-width="1.7"/><rect x="1419.5" y="221.5" width="15" height="15" fill="rgba(250,190,160,0.6)" stroke="#fff" stroke-opacity=".96" stroke-width="1.7"/><rect x="1436.5" y="220.5" width="15" height="15" fill="rgba(200,135,105,0.35)" stroke="#fff" stroke-opacity=".96" stroke-width="1.7"/><rect x="1445.5" y="221.5" width="15" height="15" fill="rgba(205,135,105,0.35)" stroke="#fff" stroke-opacity=".96" stroke-width="1.7"/><rect x="1456.5" y="221.5" width="15" height="15" fill="rgba(215,140,110,0.38)" stroke="#fff" stroke-opacity=".96" stroke-width="1.7"/><rect x="1501.0" y="228.0" width="15" height="15" fill="rgba(225,110,110,0.38)" stroke="#fff" stroke-opacity=".96" stroke-width="1.7"/><rect x="1416.5" y="238.5" width="15" height="15" fill="rgba(250,195,170,0.6)" stroke="#fff" stroke-opacity=".96" stroke-width="1.7"/><rect x="1415.0" y="243.5" width="15" height="15" fill="rgba(250,195,172,0.6)" stroke="#fff" stroke-opacity=".96" stroke-width="1.7"/><rect x="1419.5" y="240.5" width="15" height="15" fill="rgba(250,195,170,0.6)" stroke="#fff" stroke-opacity=".96" stroke-width="1.7"/><rect x="1487.0" y="245.5" width="15" height="15" fill="rgba(225,85,95,.75)" stroke="#fff" stroke-opacity=".96" stroke-width="1.7"/><rect x="1539.0" y="185.9" width="15" height="15" fill="none" stroke="#fff" stroke-opacity=".96" stroke-width="1.7"/><rect x="1580.1" y="188.9" width="15" height="15" fill="none" stroke="#fff" stroke-opacity=".96" stroke-width="1.7"/><rect x="1651.9" y="206.1" width="15" height="15" fill="none" stroke="#fff" stroke-opacity=".96" stroke-width="1.7"/><rect x="1587.5" y="227.8" width="15" height="15" fill="none" stroke="#fff" stroke-opacity=".96" stroke-width="1.7"/><rect x="1571.9" y="248.3" width="15" height="15" fill="none" stroke="#fff" stroke-opacity=".96" stroke-width="1.7"/><rect x="1633.2" y="248.3" width="15" height="15" fill="none" stroke="#fff" stroke-opacity=".96" stroke-width="1.7"/><rect x="1540.5" y="291.1" width="15" height="15" fill="rgba(205,75,130,0.12)" stroke="#fff" stroke-opacity=".96" stroke-width="1.7"/><rect x="1581.1" y="295.1" width="15" height="15" fill="none" stroke="#fff" stroke-opacity=".96" stroke-width="1.7"/><rect x="1688.8" y="218.8" width="15" height="15" fill="none" stroke="#fff" stroke-opacity=".96" stroke-width="1.7"/><rect x="1695.3" y="212.1" width="15" height="15" fill="none" stroke="#fff" stroke-opacity=".96" stroke-width="1.7"/><rect x="1698.7" y="208.4" width="15" height="15" fill="none" stroke="#fff" stroke-opacity=".96" stroke-width="1.7"/><rect x="1703.2" y="203.1" width="15" height="15" fill="none" stroke="#fff" stroke-opacity=".96" stroke-width="1.7"/><rect x="1294.5" y="278.0" width="15" height="15" fill="none" stroke="#fff" stroke-opacity=".96" stroke-width="1.7"/><rect x="1304.0" y="280.5" width="15" height="15" fill="none" stroke="#fff" stroke-opacity=".96" stroke-width="1.7"/><rect x="1298.0" y="295.5" width="15" height="15" fill="none" stroke="#fff" stroke-opacity=".96" stroke-width="1.7"/><rect x="1299.0" y="306.5" width="15" height="15" fill="none" stroke="#fff" stroke-opacity=".96" stroke-width="1.7"/><rect x="1321.0" y="297.0" width="15" height="15" fill="rgba(90,145,165,0.23)" stroke="#fff" stroke-opacity=".96" stroke-width="1.7"/><rect x="1346.0" y="294.5" width="15" height="15" fill="rgba(95,115,140,0.27)" stroke="#fff" stroke-opacity=".96" stroke-width="1.7"/><rect x="1346.0" y="302.5" width="15" height="15" fill="rgba(125,150,180,0.5)" stroke="#fff" stroke-opacity=".96" stroke-width="1.7"/><rect x="1381.0" y="298.5" width="15" height="15" fill="rgba(120,110,140,0.38)" stroke="#fff" stroke-opacity=".96" stroke-width="1.7"/><rect x="1390.0" y="336.5" width="15" height="15" fill="rgba(115,90,140,0.23)" stroke="#fff" stroke-opacity=".96" stroke-width="1.7"/><rect x="1432.5" y="281.0" width="15" height="15" fill="rgba(215,110,145,.75)" stroke="#fff" stroke-opacity=".96" stroke-width="1.7"/><rect x="1512.0" y="283.0" width="15" height="15" fill="none" stroke="#fff" stroke-opacity=".96" stroke-width="1.7"/><rect x="1428.0" y="314.0" width="15" height="15" fill="none" stroke="#fff" stroke-opacity=".96" stroke-width="1.7"/><rect x="1305.5" y="347.9" width="15" height="15" fill="none" stroke="#fff" stroke-opacity=".96" stroke-width="1.7"/><rect x="1453.9" y="351.5" width="15" height="15" fill="none" stroke="#fff" stroke-opacity=".96" stroke-width="1.7"/><rect x="1310.1" y="381.1" width="15" height="15" fill="none" stroke="#fff" stroke-opacity=".96" stroke-width="1.7"/><rect x="1344.9" y="394.1" width="15" height="15" fill="none" stroke="#fff" stroke-opacity=".96" stroke-width="1.7"/><rect x="1495.1" y="381.1" width="15" height="15" fill="none" stroke="#fff" stroke-opacity=".96" stroke-width="1.7"/><rect x="1513.9" y="416.9" width="15" height="15" fill="none" stroke="#fff" stroke-opacity=".96" stroke-width="1.7"/><rect x="1330.9" y="481.1" width="15" height="15" fill="none" stroke="#fff" stroke-opacity=".96" stroke-width="1.7"/><rect x="1343.0" y="609.0" width="15" height="15" fill="none" stroke="#fff" stroke-opacity=".96" stroke-width="1.7"/><rect x="1373.0" y="263.0" width="15" height="15" fill="none" stroke="#000" stroke-width="2"/><circle cx="1286.3" cy="166.5" r="4.35" fill="rgb(0,240,0)" stroke="#060606" stroke-width="1.35"/><circle cx="1303.5" cy="171.5" r="4.35" fill="rgb(75,145,40)" stroke="#060606" stroke-width="1.35"/><circle cx="1313.5" cy="177.5" r="4.35" fill="rgb(80,150,45)" stroke="#060606" stroke-width="1.35"/><circle cx="1309.8" cy="174.5" r="4.35" fill="rgb(90,165,50)" stroke="#060606" stroke-width="1.35"/><circle cx="1352.5" cy="185.5" r="4.35" fill="rgb(125,160,60)" stroke="#060606" stroke-width="1.35"/><circle cx="1366.5" cy="184.5" r="4.35" fill="rgb(85,105,40)" stroke="#060606" stroke-width="1.35"/><circle cx="1376.0" cy="174.5" r="4.35" fill="rgb(150,150,30)" stroke="#060606" stroke-width="1.35"/><circle cx="1371.0" cy="174.5" r="4.35" fill="rgb(165,170,20)" stroke="#060606" stroke-width="1.35"/><circle cx="1396.0" cy="175.0" r="4.35" fill="rgb(170,160,30)" stroke="#060606" stroke-width="1.35"/><circle cx="1388.2" cy="176.2" r="4.35" fill="rgb(255,255,0)" stroke="#060606" stroke-width="1.35"/><circle cx="1399.2" cy="179.2" r="4.35" fill="rgb(175,160,40)" stroke="#060606" stroke-width="1.35"/><circle cx="1410.5" cy="177.5" r="4.35" fill="rgb(200,185,20)" stroke="#060606" stroke-width="1.35"/><circle cx="1292.5" cy="207.7" r="4.35" fill="rgb(20,140,90)" stroke="#060606" stroke-width="1.35"/><circle cx="1324.5" cy="206.0" r="4.35" fill="rgb(95,165,95)" stroke="#060606" stroke-width="1.35"/><circle cx="1325.7" cy="216.7" r="4.35" fill="rgb(35,75,45)" stroke="#060606" stroke-width="1.35"/><circle cx="1308.5" cy="224.5" r="4.35" fill="rgb(70,160,110)" stroke="#060606" stroke-width="1.35"/><circle cx="1328.7" cy="241.5" r="4.35" fill="rgb(110,185,140)" stroke="#060606" stroke-width="1.35"/><circle cx="1305.0" cy="255.0" r="4.35" fill="rgb(10,75,70)" stroke="#060606" stroke-width="1.35"/><circle cx="1298.5" cy="252.5" r="4.35" fill="rgb(15,140,120)" stroke="#060606" stroke-width="1.35"/><circle cx="1300.5" cy="262.5" r="4.35" fill="rgb(20,160,140)" stroke="#060606" stroke-width="1.35"/><circle cx="1389.7" cy="215.2" r="4.35" fill="rgb(210,210,130)" stroke="#060606" stroke-width="1.35"/><circle cx="1369.5" cy="237.0" r="4.35" fill="rgb(215,230,175)" stroke="#060606" stroke-width="1.35"/><circle cx="1361.5" cy="246.5" r="4.35" fill="rgb(185,215,175)" stroke="#060606" stroke-width="1.35"/><circle cx="1364.5" cy="257.5" r="4.35" fill="rgb(190,215,180)" stroke="#060606" stroke-width="1.35"/><circle cx="1385.3" cy="257.5" r="4.35" fill="rgb(215,210,185)" stroke="#060606" stroke-width="1.35"/><circle cx="1399.5" cy="255.5" r="4.35" fill="rgb(235,205,190)" stroke="#060606" stroke-width="1.35"/><circle cx="1437.5" cy="180.0" r="4.35" fill="rgb(220,170,30)" stroke="#060606" stroke-width="1.35"/><circle cx="1438.0" cy="184.5" r="4.35" fill="rgb(180,150,35)" stroke="#060606" stroke-width="1.35"/><circle cx="1448.0" cy="182.5" r="4.35" fill="rgb(255,190,0)" stroke="#060606" stroke-width="1.35"/><circle cx="1484.0" cy="185.0" r="4.35" fill="rgb(230,150,20)" stroke="#060606" stroke-width="1.35"/><circle cx="1487.0" cy="185.5" r="4.35" fill="rgb(255,160,0)" stroke="#060606" stroke-width="1.35"/><circle cx="1474.5" cy="193.5" r="4.35" fill="rgb(200,125,45)" stroke="#060606" stroke-width="1.35"/><circle cx="1521.5" cy="198.0" r="4.35" fill="rgb(170,90,45)" stroke="#060606" stroke-width="1.35"/><circle cx="1490.5" cy="204.0" r="4.35" fill="rgb(130,75,45)" stroke="#060606" stroke-width="1.35"/><circle cx="1474.5" cy="207.5" r="4.35" fill="rgb(140,85,55)" stroke="#060606" stroke-width="1.35"/><circle cx="1507.5" cy="210.5" r="4.35" fill="rgb(210,130,90)" stroke="#060606" stroke-width="1.35"/><circle cx="1501.0" cy="210.0" r="4.35" fill="rgb(50,35,28)" stroke="#060606" stroke-width="1.35"/><circle cx="1503.0" cy="211.0" r="4.35" fill="rgb(65,40,30)" stroke="#060606" stroke-width="1.35"/><circle cx="1418.0" cy="218.0" r="4.35" fill="rgb(60,50,35)" stroke="#060606" stroke-width="1.35"/><circle cx="1452.5" cy="218.0" r="4.35" fill="rgb(200,130,95)" stroke="#060606" stroke-width="1.35"/><circle cx="1471.0" cy="218.0" r="4.35" fill="rgb(215,135,95)" stroke="#060606" stroke-width="1.35"/><circle cx="1479.5" cy="219.5" r="4.35" fill="rgb(225,140,105)" stroke="#060606" stroke-width="1.35"/><circle cx="1480.5" cy="226.5" r="4.35" fill="rgb(245,150,125)" stroke="#060606" stroke-width="1.35"/><circle cx="1427.0" cy="230.0" r="4.35" fill="rgb(250,190,160)" stroke="#060606" stroke-width="1.35"/><circle cx="1443.0" cy="230.0" r="4.35" fill="rgb(205,140,110)" stroke="#060606" stroke-width="1.35"/><circle cx="1445.5" cy="227.5" r="4.35" fill="rgb(200,135,105)" stroke="#060606" stroke-width="1.35"/><circle cx="1452.5" cy="226.0" r="4.35" fill="rgb(205,135,105)" stroke="#060606" stroke-width="1.35"/><circle cx="1463.0" cy="227.5" r="4.35" fill="rgb(215,140,110)" stroke="#060606" stroke-width="1.35"/><circle cx="1510.0" cy="235.5" r="4.35" fill="rgb(225,110,110)" stroke="#060606" stroke-width="1.35"/><circle cx="1424.5" cy="243.0" r="4.35" fill="rgb(250,195,170)" stroke="#060606" stroke-width="1.35"/><circle cx="1419.5" cy="250.0" r="4.35" fill="rgb(250,195,172)" stroke="#060606" stroke-width="1.35"/><circle cx="1489.5" cy="251.0" r="4.35" fill="rgb(0,0,0)" stroke="#060606" stroke-width="1.35"/><circle cx="1495.0" cy="252.5" r="4.35" fill="rgb(215,125,130)" stroke="#060606" stroke-width="1.35"/><circle cx="1551.2" cy="191.9" r="4.35" fill="rgb(230,120,20)" stroke="#060606" stroke-width="1.35"/><circle cx="1591.3" cy="196.7" r="4.35" fill="rgb(245,130,20)" stroke="#060606" stroke-width="1.35"/><circle cx="1671.8" cy="213.6" r="4.35" fill="rgb(235,50,40)" stroke="#060606" stroke-width="1.35"/><circle cx="1605.8" cy="234.1" r="4.35" fill="rgb(210,70,85)" stroke="#060606" stroke-width="1.35"/><circle cx="1607.3" cy="251.3" r="4.35" fill="rgb(110,30,50)" stroke="#060606" stroke-width="1.35"/><circle cx="1654.4" cy="255.5" r="4.35" fill="rgb(200,45,85)" stroke="#060606" stroke-width="1.35"/><circle cx="1541.7" cy="291.4" r="4.35" fill="rgb(100,35,60)" stroke="#060606" stroke-width="1.35"/><circle cx="1552.7" cy="299.6" r="4.35" fill="rgb(205,75,130)" stroke="#060606" stroke-width="1.35"/><circle cx="1604.5" cy="304.1" r="4.35" fill="rgb(160,35,85)" stroke="#060606" stroke-width="1.35"/><circle cx="1726.0" cy="213.0" r="4.35" fill="rgb(170,20,50)" stroke="#060606" stroke-width="1.35"/><circle cx="1724.4" cy="216.6" r="4.35" fill="rgb(190,10,40)" stroke="#060606" stroke-width="1.35"/><circle cx="1715.9" cy="224.8" r="4.35" fill="rgb(200,5,45)" stroke="#060606" stroke-width="1.35"/><circle cx="1724.9" cy="208.8" r="4.35" fill="rgb(250,0,10)" stroke="#060606" stroke-width="1.35"/><circle cx="1303.5" cy="284.0" r="4.35" fill="rgb(20,250,250)" stroke="#060606" stroke-width="1.35"/><circle cx="1311.5" cy="288.5" r="4.35" fill="rgb(70,165,170)" stroke="#060606" stroke-width="1.35"/><circle cx="1305.2" cy="302.7" r="4.35" fill="rgb(20,130,140)" stroke="#060606" stroke-width="1.35"/><circle cx="1311.3" cy="315.3" r="4.35" fill="rgb(10,65,80)" stroke="#060606" stroke-width="1.35"/><circle cx="1330.3" cy="302.5" r="4.35" fill="rgb(90,145,165)" stroke="#060606" stroke-width="1.35"/><circle cx="1353.5" cy="301.5" r="4.35" fill="rgb(95,115,140)" stroke="#060606" stroke-width="1.35"/><circle cx="1353.5" cy="307.5" r="4.35" fill="rgb(125,150,180)" stroke="#060606" stroke-width="1.35"/><circle cx="1388.2" cy="305.5" r="4.35" fill="rgb(120,110,140)" stroke="#060606" stroke-width="1.35"/><circle cx="1397.6" cy="348.0" r="4.35" fill="rgb(115,90,140)" stroke="#060606" stroke-width="1.35"/><circle cx="1439.5" cy="288.5" r="4.35" fill="rgb(190,125,155)" stroke="#060606" stroke-width="1.35"/><circle cx="1443.3" cy="327.5" r="4.35" fill="rgb(70,45,70)" stroke="#060606" stroke-width="1.35"/><circle cx="1313.4" cy="354.4" r="4.35" fill="rgb(20,130,170)" stroke="#060606" stroke-width="1.35"/><circle cx="1469.4" cy="366.4" r="4.35" fill="rgb(85,40,75)" stroke="#060606" stroke-width="1.35"/><circle cx="1320.6" cy="394.6" r="4.35" fill="rgb(15,65,85)" stroke="#060606" stroke-width="1.35"/><circle cx="1350.6" cy="405.4" r="4.35" fill="rgb(70,85,150)" stroke="#060606" stroke-width="1.35"/><circle cx="1508.4" cy="394.6" r="4.35" fill="rgb(130,40,115)" stroke="#060606" stroke-width="1.35"/><circle cx="1519.6" cy="426.0" r="4.35" fill="rgb(250,20,240)" stroke="#060606" stroke-width="1.35"/><circle cx="1338.2" cy="501.4" r="4.35" fill="rgb(25,45,110)" stroke="#060606" stroke-width="1.35"/><circle cx="1350.0" cy="611.0" r="4.35" fill="rgb(0,0,255)" stroke="#060606" stroke-width="1.35"/><circle cx="1378.5" cy="268.5" r="4.35" fill="rgb(70,70,70)" stroke="#060606" stroke-width="1.35"/><circle cx="1380.0" cy="270.0" r="4.35" fill="rgb(55,55,55)" stroke="#060606" stroke-width="1.35"/><circle cx="1382.0" cy="268.0" r="4.35" fill="rgb(30,30,30)" stroke="#060606" stroke-width="1.35"/><circle cx="1385.0" cy="266.5" r="4.35" fill="rgb(45,45,45)" stroke="#060606" stroke-width="1.35"/></g><rect x="1187.5" y="124.5" width="721" height="558" fill="none" stroke="#b4b4b4" stroke-width="1.2"/><line x1="1187" y1="682.3" x2="1909" y2="682.3" stroke="#b8b8b8" stroke-width="1.6"/><defs><linearGradient id="insg" gradientUnits="userSpaceOnUse" x1="1695.9" y1="465.7" x2="1907.1" y2="611.7"><stop offset="0" stop-color="#a0ff00"/><stop offset=".25" stop-color="#d2ff08"/><stop offset=".5" stop-color="#ffff10"/><stop offset=".75" stop-color="#ffd800"/><stop offset="1" stop-color="#ffac00"/></linearGradient>
</defs><rect x="1698.5" y="459.5" width="206" height="158.5" fill="url(#insg)" stroke="#8c8c8c" stroke-width="1.2"/>
<polygon points="1699.1,460.1 1903.9,460.1 1903.9,601.7 1699.1,477.2" fill="#000" fill-opacity=".39"/><rect x="1793.7" y="529.9" width="15" height="15" fill="none" stroke="#fff" stroke-width="1.3"/><circle cx="1798.3" cy="542.1" r="4.7" fill="#fff000" stroke="#0a0a0a" stroke-width="1.3"/><line x1="1180.5" y1="126.4" x2="1187" y2="126.4" stroke="#ddd" stroke-width="1.2"/><line x1="1180.5" y1="182.0" x2="1187" y2="182.0" stroke="#ddd" stroke-width="1.2"/><line x1="1180.5" y1="237.5" x2="1187" y2="237.5" stroke="#ddd" stroke-width="1.2"/><line x1="1180.5" y1="293.1" x2="1187" y2="293.1" stroke="#ddd" stroke-width="1.2"/><line x1="1180.5" y1="348.6" x2="1187" y2="348.6" stroke="#ddd" stroke-width="1.2"/><line x1="1180.5" y1="404.2" x2="1187" y2="404.2" stroke="#ddd" stroke-width="1.2"/><line x1="1180.5" y1="459.8" x2="1187" y2="459.8" stroke="#ddd" stroke-width="1.2"/><line x1="1180.5" y1="515.3" x2="1187" y2="515.3" stroke="#ddd" stroke-width="1.2"/><line x1="1180.5" y1="570.9" x2="1187" y2="570.9" stroke="#ddd" stroke-width="1.2"/><line x1="1180.5" y1="626.4" x2="1187" y2="626.4" stroke="#ddd" stroke-width="1.2"/><line x1="1180.5" y1="682.0" x2="1187" y2="682.0" stroke="#ddd" stroke-width="1.2"/><line x1="1187.9" y1="683" x2="1187.9" y2="689.5" stroke="#ddd" stroke-width="1.4"/><line x1="1253.2" y1="683" x2="1253.2" y2="689.5" stroke="#ddd" stroke-width="1.4"/><line x1="1318.5" y1="683" x2="1318.5" y2="689.5" stroke="#ddd" stroke-width="1.4"/><line x1="1383.8" y1="683" x2="1383.8" y2="689.5" stroke="#ddd" stroke-width="1.4"/><line x1="1449.1" y1="683" x2="1449.1" y2="689.5" stroke="#ddd" stroke-width="1.4"/><line x1="1514.4" y1="683" x2="1514.4" y2="689.5" stroke="#ddd" stroke-width="1.4"/><line x1="1579.7" y1="683" x2="1579.7" y2="689.5" stroke="#ddd" stroke-width="1.4"/><line x1="1645.0" y1="683" x2="1645.0" y2="689.5" stroke="#ddd" stroke-width="1.4"/><line x1="1710.3" y1="683" x2="1710.3" y2="689.5" stroke="#ddd" stroke-width="1.4"/><line x1="1775.6" y1="683" x2="1775.6" y2="689.5" stroke="#ddd" stroke-width="1.4"/><line x1="1840.9" y1="683" x2="1840.9" y2="689.5" stroke="#ddd" stroke-width="1.4"/></svg>
<div class="t" style="left:1156.5px;top:119.0px;font-size:16px;color:#e4e4e4;transform:scaleX(1.0565);">0.6</div>
<div class="t" style="left:1148.5px;top:175.0px;font-size:16px;color:#e4e4e4;transform:scaleX(1.0115);">0.55</div>
<div class="t" style="left:1156.5px;top:230.0px;font-size:16px;color:#e4e4e4;transform:scaleX(1.0565);">0.5</div>
<div class="t" style="left:1148.5px;top:286.0px;font-size:16px;color:#e4e4e4;transform:scaleX(1.0115);">0.45</div>
<div class="t" style="left:1156.5px;top:341.0px;font-size:16px;color:#e4e4e4;transform:scaleX(1.0565);">0.4</div>
<div class="t" style="left:1148.5px;top:397.0px;font-size:16px;color:#e4e4e4;transform:scaleX(1.0115);">0.35</div>
<div class="t" style="left:1156.5px;top:452.0px;font-size:16px;color:#e4e4e4;transform:scaleX(1.0565);">0.3</div>
<div class="t" style="left:1148.5px;top:508.0px;font-size:16px;color:#e4e4e4;transform:scaleX(1.0115);">0.25</div>
<div class="t" style="left:1156.5px;top:563.0px;font-size:16px;color:#e4e4e4;transform:scaleX(1.0565);">0.2</div>
<div class="t" style="left:1148.5px;top:619.0px;font-size:16px;color:#e4e4e4;transform:scaleX(1.0115);">0.15</div>
<div class="t" style="left:1156.5px;top:677.0px;font-size:16px;color:#e4e4e4;transform:scaleX(1.0565);">0.1</div>
<div class="t" style="left:1170.3px;top:694.0px;font-size:16px;color:#e4e4e4;transform:scaleX(1.0372);">0.05</div>
<div class="t" style="left:1240.2px;top:694.0px;font-size:16px;color:#e4e4e4;transform:scaleX(1.0565);">0.1</div>
<div class="t" style="left:1301.3px;top:694.0px;font-size:16px;color:#e4e4e4;transform:scaleX(1.0372);">0.15</div>
<div class="t" style="left:1371.2px;top:694.0px;font-size:16px;color:#e4e4e4;transform:scaleX(1.0565);">0.2</div>
<div class="t" style="left:1432.3px;top:694.0px;font-size:16px;color:#e4e4e4;transform:scaleX(1.0372);">0.25</div>
<div class="t" style="left:1502.2px;top:694.0px;font-size:16px;color:#e4e4e4;transform:scaleX(1.0565);">0.3</div>
<div class="t" style="left:1563.3px;top:694.0px;font-size:16px;color:#e4e4e4;transform:scaleX(1.0372);">0.35</div>
<div class="t" style="left:1633.2px;top:694.0px;font-size:16px;color:#e4e4e4;transform:scaleX(1.0565);">0.4</div>
<div class="t" style="left:1694.3px;top:694.0px;font-size:16px;color:#e4e4e4;transform:scaleX(1.0372);">0.45</div>
<div class="t" style="left:1764.2px;top:694.0px;font-size:16px;color:#e4e4e4;transform:scaleX(1.0565);">0.5</div>
<div class="t" style="left:1825.3px;top:694.0px;font-size:16px;color:#e4e4e4;transform:scaleX(1.0372);">0.55</div>
<div class="a" style="left:1601px;top:620px;width:306px;height:61.5px;background:#333"></div>
<div class="t" style="left:1603.0px;top:627.0px;font-size:21.4px;color:#f2f2f2;transform:scaleX(1.0549);">RGB Triplet: 255, 255, 0</div>
<div class="t" style="left:1654.8px;top:658.0px;font-size:21.4px;color:#f2f2f2;transform:scaleX(1.0604);">deltaE: 0.4</div>
<div class="a" style="left:17px;top:738px;width:1903px;height:247px;background:#000"></div>
<div class="t" style="left:27px;top:791.7px;font-size:14px;color:#f2f2f2;transform:translate(-50%,-50%) rotate(-90deg) scaleX(1.05);transform-origin:50% 50%">Actual</div>
<div class="t" style="left:27px;top:899px;font-size:14px;color:#f2f2f2;transform:translate(-50%,-50%) rotate(-90deg) scaleX(1.05);transform-origin:50% 50%">Target</div>
<div class="a" style="left:37.2px;top:749px;width:67.5px;height:193px;border:1px solid #f2f2f2;border-right:2px solid #f6f6f6;background:linear-gradient(rgb(255,255,255) 0,rgb(255,255,255) 50%,rgb(255,255,255) 50%,rgb(255,255,255) 100%)"></div>
<div class="t" style="left:52.1px;top:948.0px;font-size:14.4px;color:#f2f2f2;transform:scaleX(1.04);transform-origin:50% 0;">White</div>
<div class="a" style="left:115.5px;top:749px;width:67.5px;height:193px;border:1px solid #f2f2f2;border-right:2px solid #f6f6f6;background:linear-gradient(rgb(221,222,221) 0,rgb(221,222,221) 50%,rgb(223,223,223) 50%,rgb(223,223,223) 100%)"></div>
<div class="t" style="left:141.2px;top:948.0px;font-size:14.4px;color:#f2f2f2;transform:scaleX(1.04);transform-origin:50% 0;">6J</div>
<div class="a" style="left:193.8px;top:749px;width:67.5px;height:193px;border:1px solid #f2f2f2;border-right:2px solid #f6f6f6;background:linear-gradient(rgb(196,197,196) 0,rgb(196,197,196) 50%,rgb(198,198,198) 50%,rgb(198,198,198) 100%)"></div>
<div class="t" style="left:218.7px;top:948.0px;font-size:14.4px;color:#f2f2f2;transform:scaleX(1.04);transform-origin:50% 0;">5F</div>
<div class="a" style="left:272.1px;top:749px;width:67.5px;height:193px;border:1px solid #f2f2f2;border-right:2px solid #f6f6f6;background:linear-gradient(rgb(183,184,183) 0,rgb(183,184,183) 50%,rgb(186,186,186) 50%,rgb(186,186,186) 100%)"></div>
<div class="t" style="left:299.4px;top:948.0px;font-size:14.4px;color:#f2f2f2;transform:scaleX(1.04);transform-origin:50% 0;">6I</div>
<div class="a" style="left:350.4px;top:749px;width:67.5px;height:193px;border:1px solid #f2f2f2;border-right:2px solid #f6f6f6;background:linear-gradient(rgb(172,172,172) 0,rgb(172,172,172) 50%,rgb(173,173,173) 50%,rgb(173,173,173) 100%)"></div>
<div class="t" style="left:374.9px;top:948.0px;font-size:14.4px;color:#f2f2f2;transform:scaleX(1.04);transform-origin:50% 0;">6K</div>
<div class="a" style="left:428.7px;top:749px;width:67.5px;height:193px;border:1px solid #f2f2f2;border-right:2px solid #f6f6f6;background:linear-gradient(rgb(157,157,157) 0,rgb(157,157,157) 50%,rgb(158,158,158) 50%,rgb(158,158,158) 100%)"></div>
<div class="t" style="left:452.4px;top:948.0px;font-size:14.4px;color:#f2f2f2;transform:scaleX(1.04);transform-origin:50% 0;">5G</div>
<div class="a" style="left:507.0px;top:749px;width:67.5px;height:193px;border:1px solid #f2f2f2;border-right:2px solid #f6f6f6;background:linear-gradient(rgb(145,145,145) 0,rgb(145,145,145) 50%,rgb(146,146,146) 50%,rgb(146,146,146) 100%)"></div>
<div class="t" style="left:531.1px;top:948.0px;font-size:14.4px;color:#f2f2f2;transform:scaleX(1.04);transform-origin:50% 0;">6H</div>
<div class="a" style="left:585.3px;top:749px;width:67.5px;height:193px;border:1px solid #f2f2f2;border-right:2px solid #f6f6f6;background:linear-gradient(rgb(120,120,120) 0,rgb(120,120,120) 50%,rgb(122,122,122) 50%,rgb(122,122,122) 100%)"></div>
<div class="t" style="left:609.4px;top:948.0px;font-size:14.4px;color:#f2f2f2;transform:scaleX(1.04);transform-origin:50% 0;">5H</div>
<div class="a" style="left:663.6px;top:749px;width:67.5px;height:193px;border:1px solid #f2f2f2;border-right:2px solid #f6f6f6;background:linear-gradient(rgb(106,106,106) 0,rgb(106,106,106) 50%,rgb(108,108,108) 50%,rgb(108,108,108) 100%)"></div>
<div class="t" style="left:688.1px;top:948.0px;font-size:14.4px;color:#f2f2f2;transform:scaleX(1.04);transform-origin:50% 0;">7K</div>
<div class="a" style="left:741.9px;top:749px;width:67.5px;height:193px;border:1px solid #f2f2f2;border-right:2px solid #f6f6f6;background:linear-gradient(rgb(93,93,93) 0,rgb(93,93,93) 50%,rgb(95,95,95) 50%,rgb(95,95,95) 100%)"></div>
<div class="t" style="left:765.6px;top:948.0px;font-size:14.4px;color:#f2f2f2;transform:scaleX(1.04);transform-origin:50% 0;">6G</div>
<div class="a" style="left:820.2px;top:749px;width:67.5px;height:193px;border:1px solid #f2f2f2;border-right:2px solid #f6f6f6;background:linear-gradient(rgb(80,80,80) 0,rgb(80,80,80) 50%,rgb(83,83,83) 50%,rgb(83,83,83) 100%)"></div>
<div class="t" style="left:847.5px;top:948.0px;font-size:14.4px;color:#f2f2f2;transform:scaleX(1.04);transform-origin:50% 0;">5I</div>
<div class="a" style="left:898.5px;top:749px;width:67.5px;height:193px;border:1px solid #f2f2f2;border-right:2px solid #f6f6f6;background:linear-gradient(rgb(70,70,70) 0,rgb(70,70,70) 50%,rgb(73,73,73) 50%,rgb(73,73,73) 100%)"></div>
<div class="t" style="left:923.4px;top:948.0px;font-size:14.4px;color:#f2f2f2;transform:scaleX(1.04);transform-origin:50% 0;">6F</div>
<div class="a" style="left:976.8px;top:749px;width:67.5px;height:193px;border:1px solid #f2f2f2;border-right:2px solid #f6f6f6;background:linear-gradient(rgb(50,48,49) 0,rgb(50,48,49) 50%,rgb(56,56,56) 50%,rgb(56,56,56) 100%)"></div>
<div class="t" style="left:1001.3px;top:948.0px;font-size:14.4px;color:#f2f2f2;transform:scaleX(1.04);transform-origin:50% 0;">8K</div>
<div class="a" style="left:1055.1px;top:749px;width:67.5px;height:193px;border:1px solid #f2f2f2;border-right:2px solid #f6f6f6;background:linear-gradient(rgb(38,37,36) 0,rgb(38,37,36) 50%,rgb(45,45,45) 50%,rgb(45,45,45) 100%)"></div>
<div class="t" style="left:1080.8px;top:948.0px;font-size:14.4px;color:#f2f2f2;transform:scaleX(1.04);transform-origin:50% 0;">5J</div>
<div class="a" style="left:1133.4px;top:749px;width:67.5px;height:193px;border:1px solid #f2f2f2;border-right:2px solid #f6f6f6;background:linear-gradient(rgb(8,4,3) 0,rgb(8,4,3) 50%,rgb(0,0,0) 50%,rgb(0,0,0) 100%)"></div>
<div class="t" style="left:1149.1px;top:948.0px;font-size:14.4px;color:#f2f2f2;transform:scaleX(1.04);transform-origin:50% 0;">Black</div>
<div class="a" style="left:1211.7px;top:749px;width:67.5px;height:193px;border:1px solid #f2f2f2;border-right:2px solid #f6f6f6;background:linear-gradient(rgb(143,20,83) 0,rgb(143,20,83) 50%,rgb(148,32,90) 50%,rgb(148,32,90) 100%)"></div>
<div class="t" style="left:1236.2px;top:948.0px;font-size:14.4px;color:#f2f2f2;transform:scaleX(1.04);transform-origin:50% 0;">2B</div>
<div class="a" style="left:1290.0px;top:749px;width:67.5px;height:193px;border:1px solid #f2f2f2;border-right:2px solid #f6f6f6;background:linear-gradient(rgb(70,42,68) 0,rgb(70,42,68) 50%,rgb(76,46,72) 50%,rgb(76,46,72) 100%)"></div>
<div class="t" style="left:1314.1px;top:948.0px;font-size:14.4px;color:#f2f2f2;transform:scaleX(1.04);transform-origin:50% 0;">2C</div>
<div class="a" style="left:1368.3px;top:749px;width:67.5px;height:193px;border:1px solid #f2f2f2;border-right:2px solid #f6f6f6;background:linear-gradient(rgb(217,210,193) 0,rgb(217,210,193) 50%,rgb(219,212,195) 50%,rgb(219,212,195) 100%)"></div>
<div class="t" style="left:1392.4px;top:948.0px;font-size:14.4px;color:#f2f2f2;transform:scaleX(1.04);transform-origin:50% 0;">2D</div>
<div class="a" style="left:1446.6px;top:749px;width:67.5px;height:193px;border:1px solid #f2f2f2;border-right:2px solid #f6f6f6;background:linear-gradient(rgb(112,60,34) 0,rgb(112,60,34) 50%,rgb(116,66,40) 50%,rgb(116,66,40) 100%)"></div>
<div class="t" style="left:1471.1px;top:948.0px;font-size:14.4px;color:#f2f2f2;transform:scaleX(1.04);transform-origin:50% 0;">2E</div>
<div class="a" style="left:1524.9px;top:749px;width:67.5px;height:193px;border:1px solid #f2f2f2;border-right:2px solid #f6f6f6;background:linear-gradient(rgb(203,138,102) 0,rgb(203,138,102) 50%,rgb(205,141,106) 50%,rgb(205,141,106) 100%)"></div>
<div class="t" style="left:1549.8px;top:948.0px;font-size:14.4px;color:#f2f2f2;transform:scaleX(1.04);transform-origin:50% 0;">2F</div>
<div class="a" style="left:1603.2px;top:749px;width:67.5px;height:193px;border:1px solid #f2f2f2;border-right:2px solid #f6f6f6;background:linear-gradient(rgb(88,110,130) 0,rgb(88,110,130) 50%,rgb(90,112,132) 50%,rgb(90,112,132) 100%)"></div>
<div class="t" style="left:1626.9px;top:948.0px;font-size:14.4px;color:#f2f2f2;transform:scaleX(1.04);transform-origin:50% 0;">2G</div>
<div class="a" style="left:1681.5px;top:749px;width:67.5px;height:193px;border:1px solid #f2f2f2;border-right:2px solid #f6f6f6;background:linear-gradient(rgb(82,98,26) 0,rgb(82,98,26) 50%,rgb(86,101,32) 50%,rgb(86,101,32) 100%)"></div>
<div class="t" style="left:1705.6px;top:948.0px;font-size:14.4px;color:#f2f2f2;transform:scaleX(1.04);transform-origin:50% 0;">2H</div>
<div class="a" style="left:1759.8px;top:749px;width:67.5px;height:193px;border:1px solid #f2f2f2;border-right:2px solid #f6f6f6;background:linear-gradient(rgb(128,118,148) 0,rgb(128,118,148) 50%,rgb(130,120,150) 50%,rgb(130,120,150) 100%)"></div>
<div class="t" style="left:1787.1px;top:948.0px;font-size:14.4px;color:#f2f2f2;transform:scaleX(1.04);transform-origin:50% 0;">2I</div>
<div class="a" style="left:1838.1px;top:749px;width:67.5px;height:193px;border:1px solid #f2f2f2;border-right:2px solid #f6f6f6;background:linear-gradient(rgb(108,184,144) 0,rgb(108,184,144) 50%,rgb(110,186,146) 50%,rgb(110,186,146) 100%)"></div>
<div class="t" style="left:1863.8px;top:948.0px;font-size:14.4px;color:#f2f2f2;transform:scaleX(1.04);transform-origin:50% 0;">2J</div>
<div class="a" style="left:1916px;top:749px;width:6px;height:193px;border:1px solid #f4f4f4;background:rgb(255,200,152)"></div>
<div class="a" style="left:17px;top:985px;width:1903px;height:19px;background:#666"></div>
<div class="a" style="left:18px;top:987px;width:16px;height:15px;border-radius:3px;background:#8c8c8c"></div>
<div class="a" style="left:23px;top:989px;border:5.5px solid transparent;border-right:6.5px solid #333;border-left:none"></div>
<div class="a" style="left:37px;top:987px;width:440px;height:15px;border-radius:7.5px;background:#454545"></div>
<div class="a" style="left:1902px;top:987px;width:16px;height:15px;border-radius:3px;background:#8c8c8c"></div>
<div class="a" style="left:1907px;top:989px;border:5.5px solid transparent;border-left:6.5px solid #333;border-right:none"></div>
<div class="a" style="left:0;top:1004px;width:1920px;height:46px;background:#4a4a4a"></div>
<div class="a" style="left:1.2px;top:1004px;width:37.4px;height:37px;border-radius:4px 4px 0 0;background:linear-gradient(#a0a0a0 0%,#8e8e8e 45%,#6a6a6a 100%);box-shadow:inset 0 1px 0 #b0b0b0,inset 1px 0 0 rgba(120,120,120,.6),inset -1px 0 0 rgba(90,90,90,.6)"></div>
<div class="a" style="left:5.2px;top:1008px;width:30px;height:17.5px;border-radius:3px;background:rgb(255,255,255);box-shadow:inset 0 1px 2px rgba(0,0,0,.35),0 0 0 1px rgba(120,120,120,.5)"></div>
<div class="t" style="left:9.0px;top:1032.0px;font-size:6.9px;color:#222;transform:scaleX(1.1715);"><span style="font-weight:bold;">White</span></div>
<div class="a" style="left:40.2px;top:1004px;width:37.4px;height:37px;border-radius:4px 4px 0 0;background:linear-gradient(#a0a0a0 0%,#8e8e8e 45%,#6a6a6a 100%);box-shadow:inset 0 1px 0 #b0b0b0,inset 1px 0 0 rgba(120,120,120,.6),inset -1px 0 0 rgba(90,90,90,.6)"></div>
<div class="a" style="left:44.2px;top:1008px;width:30px;height:17.5px;border-radius:3px;background:rgb(222,222,222);box-shadow:inset 0 1px 2px rgba(0,0,0,.35),0 0 0 1px rgba(120,120,120,.5)"></div>
<div class="t" style="left:55.2px;top:1032.0px;font-size:6.9px;color:#222;transform:scaleX(0.9772);"><span style="font-weight:bold;">6J</span></div>
<div class="a" style="left:79.2px;top:1004px;width:37.4px;height:37px;border-radius:4px 4px 0 0;background:linear-gradient(#a0a0a0 0%,#8e8e8e 45%,#6a6a6a 100%);box-shadow:inset 0 1px 0 #b0b0b0,inset 1px 0 0 rgba(120,120,120,.6),inset -1px 0 0 rgba(90,90,90,.6)"></div>
<div class="a" style="left:83.2px;top:1008px;width:30px;height:17.5px;border-radius:3px;background:rgb(197,197,197);box-shadow:inset 0 1px 2px rgba(0,0,0,.35),0 0 0 1px rgba(120,120,120,.5)"></div>
<div class="t" style="left:94.2px;top:1032.0px;font-size:6.9px;color:#222;transform:scaleX(0.9314);"><span style="font-weight:bold;">5F</span></div>
<div class="a" style="left:118.2px;top:1004px;width:37.4px;height:37px;border-radius:4px 4px 0 0;background:linear-gradient(#a0a0a0 0%,#8e8e8e 45%,#6a6a6a 100%);box-shadow:inset 0 1px 0 #b0b0b0,inset 1px 0 0 rgba(120,120,120,.6),inset -1px 0 0 rgba(90,90,90,.6)"></div>
<div class="a" style="left:122.2px;top:1008px;width:30px;height:17.5px;border-radius:3px;background:rgb(185,185,185);box-shadow:inset 0 1px 2px rgba(0,0,0,.35),0 0 0 1px rgba(120,120,120,.5)"></div>
<div class="t" style="left:133.2px;top:1032.0px;font-size:6.9px;color:#222;transform:scaleX(1.3033);"><span style="font-weight:bold;">6I</span></div>
<div class="a" style="left:157.2px;top:1004px;width:37.4px;height:37px;border-radius:4px 4px 0 0;background:linear-gradient(#a0a0a0 0%,#8e8e8e 45%,#6a6a6a 100%);box-shadow:inset 0 1px 0 #b0b0b0,inset 1px 0 0 rgba(120,120,120,.6),inset -1px 0 0 rgba(90,90,90,.6)"></div>
<div class="a" style="left:161.2px;top:1008px;width:30px;height:17.5px;border-radius:3px;background:rgb(172,172,172);box-shadow:inset 0 1px 2px rgba(0,0,0,.35),0 0 0 1px rgba(120,120,120,.5)"></div>
<div class="t" style="left:172.2px;top:1032.0px;font-size:6.9px;color:#222;transform:scaleX(0.8503);"><span style="font-weight:bold;">6K</span></div>
<div class="a" style="left:196.2px;top:1004px;width:37.4px;height:37px;border-radius:4px 4px 0 0;background:linear-gradient(#a0a0a0 0%,#8e8e8e 45%,#6a6a6a 100%);box-shadow:inset 0 1px 0 #b0b0b0,inset 1px 0 0 rgba(120,120,120,.6),inset -1px 0 0 rgba(90,90,90,.6)"></div>
<div class="a" style="left:200.2px;top:1008px;width:30px;height:17.5px;border-radius:3px;background:rgb(158,158,158);box-shadow:inset 0 1px 2px rgba(0,0,0,.35),0 0 0 1px rgba(120,120,120,.5)"></div>
<div class="t" style="left:211.2px;top:1032.0px;font-size:6.9px;color:#222;transform:scaleX(0.8148);"><span style="font-weight:bold;">5G</span></div>
<div class="a" style="left:235.2px;top:1004px;width:37.4px;height:37px;border-radius:4px 4px 0 0;background:linear-gradient(#a0a0a0 0%,#8e8e8e 45%,#6a6a6a 100%);box-shadow:inset 0 1px 0 #b0b0b0,inset 1px 0 0 rgba(120,120,120,.6),inset -1px 0 0 rgba(90,90,90,.6)"></div>
<div class="a" style="left:239.2px;top:1008px;width:30px;height:17.5px;border-radius:3px;background:rgb(146,146,146);box-shadow:inset 0 1px 2px rgba(0,0,0,.35),0 0 0 1px rgba(120,120,120,.5)"></div>
<div class="t" style="left:250.2px;top:1032.0px;font-size:6.9px;color:#222;transform:scaleX(0.8503);"><span style="font-weight:bold;">6H</span></div>
<div class="a" style="left:274.2px;top:1004px;width:37.4px;height:37px;border-radius:4px 4px 0 0;background:linear-gradient(#a0a0a0 0%,#8e8e8e 45%,#6a6a6a 100%);box-shadow:inset 0 1px 0 #b0b0b0,inset 1px 0 0 rgba(120,120,120,.6),inset -1px 0 0 rgba(90,90,90,.6)"></div>
<div class="a" style="left:278.2px;top:1008px;width:30px;height:17.5px;border-radius:3px;background:rgb(121,121,121);box-shadow:inset 0 1px 2px rgba(0,0,0,.35),0 0 0 1px rgba(120,120,120,.5)"></div>
<div class="t" style="left:289.2px;top:1032.0px;font-size:6.9px;color:#222;transform:scaleX(0.8503);"><span style="font-weight:bold;">5H</span></div>
<div class="a" style="left:313.2px;top:1004px;width:37.4px;height:37px;border-radius:4px 4px 0 0;background:linear-gradient(#a0a0a0 0%,#8e8e8e 45%,#6a6a6a 100%);box-shadow:inset 0 1px 0 #b0b0b0,inset 1px 0 0 rgba(120,120,120,.6),inset -1px 0 0 rgba(90,90,90,.6)"></div>
<div class="a" style="left:317.2px;top:1008px;width:30px;height:17.5px;border-radius:3px;background:rgb(107,107,107);box-shadow:inset 0 1px 2px rgba(0,0,0,.35),0 0 0 1px rgba(120,120,120,.5)"></div>
<div class="t" style="left:328.2px;top:1032.0px;font-size:6.9px;color:#222;transform:scaleX(0.8503);"><span style="font-weight:bold;">7K</span></div>
<div class="a" style="left:352.2px;top:1004px;width:37.4px;height:37px;border-radius:4px 4px 0 0;background:linear-gradient(#a0a0a0 0%,#8e8e8e 45%,#6a6a6a 100%);box-shadow:inset 0 1px 0 #b0b0b0,inset 1px 0 0 rgba(120,120,120,.6),inset -1px 0 0 rgba(90,90,90,.6)"></div>
<div class="a" style="left:356.2px;top:1008px;width:30px;height:17.5px;border-radius:3px;background:rgb(94,94,94);box-shadow:inset 0 1px 2px rgba(0,0,0,.35),0 0 0 1px rgba(120,120,120,.5)"></div>
<div class="t" style="left:367.2px;top:1032.0px;font-size:6.9px;color:#222;transform:scaleX(0.8148);"><span style="font-weight:bold;">6G</span></div>
<div class="a" style="left:391.2px;top:1004px;width:37.4px;height:37px;border-radius:4px 4px 0 0;background:linear-gradient(#a0a0a0 0%,#8e8e8e 45%,#6a6a6a 100%);box-shadow:inset 0 1px 0 #b0b0b0,inset 1px 0 0 rgba(120,120,120,.6),inset -1px 0 0 rgba(90,90,90,.6)"></div>
<div class="a" style="left:395.2px;top:1008px;width:30px;height:17.5px;border-radius:3px;background:rgb(82,82,82);box-shadow:inset 0 1px 2px rgba(0,0,0,.35),0 0 0 1px rgba(120,120,120,.5)"></div>
<div class="t" style="left:406.2px;top:1032.0px;font-size:6.9px;color:#222;transform:scaleX(1.3033);"><span style="font-weight:bold;">5I</span></div>
<div class="a" style="left:430.2px;top:1004px;width:37.4px;height:37px;border-radius:4px 4px 0 0;background:linear-gradient(#a0a0a0 0%,#8e8e8e 45%,#6a6a6a 100%);box-shadow:inset 0 1px 0 #b0b0b0,inset 1px 0 0 rgba(120,120,120,.6),inset -1px 0 0 rgba(90,90,90,.6)"></div>
<div class="a" style="left:434.2px;top:1008px;width:30px;height:17.5px;border-radius:3px;background:rgb(72,72,72);box-shadow:inset 0 1px 2px rgba(0,0,0,.35),0 0 0 1px rgba(120,120,120,.5)"></div>
<div class="t" style="left:445.2px;top:1032.0px;font-size:6.9px;color:#222;transform:scaleX(0.9314);"><span style="font-weight:bold;">6F</span></div>
<div class="a" style="left:469.2px;top:1004px;width:37.4px;height:37px;border-radius:4px 4px 0 0;background:linear-gradient(#a0a0a0 0%,#8e8e8e 45%,#6a6a6a 100%);box-shadow:inset 0 1px 0 #b0b0b0,inset 1px 0 0 rgba(120,120,120,.6),inset -1px 0 0 rgba(90,90,90,.6)"></div>
<div class="a" style="left:473.2px;top:1008px;width:30px;height:17.5px;border-radius:3px;background:rgb(56,56,56);box-shadow:inset 0 1px 2px rgba(0,0,0,.35),0 0 0 1px rgba(120,120,120,.5)"></div>
<div class="t" style="left:484.2px;top:1032.0px;font-size:6.9px;color:#222;transform:scaleX(0.8503);"><span style="font-weight:bold;">8K</span></div>
<div class="a" style="left:508.2px;top:1004px;width:37.4px;height:37px;border-radius:4px 4px 0 0;background:linear-gradient(#a0a0a0 0%,#8e8e8e 45%,#6a6a6a 100%);box-shadow:inset 0 1px 0 #b0b0b0,inset 1px 0 0 rgba(120,120,120,.6),inset -1px 0 0 rgba(90,90,90,.6)"></div>
<div class="a" style="left:512.2px;top:1008px;width:30px;height:17.5px;border-radius:3px;background:rgb(45,45,45);box-shadow:inset 0 1px 2px rgba(0,0,0,.35),0 0 0 1px rgba(120,120,120,.5)"></div>
<div class="t" style="left:523.2px;top:1032.0px;font-size:6.9px;color:#222;transform:scaleX(0.9772);"><span style="font-weight:bold;">5J</span></div>
<div class="a" style="left:547.2px;top:1004px;width:37.4px;height:37px;border-radius:4px 4px 0 0;background:linear-gradient(#a0a0a0 0%,#8e8e8e 45%,#6a6a6a 100%);box-shadow:inset 0 1px 0 #b0b0b0,inset 1px 0 0 rgba(120,120,120,.6),inset -1px 0 0 rgba(90,90,90,.6)"></div>
<div class="a" style="left:551.2px;top:1008px;width:30px;height:17.5px;border-radius:3px;background:rgb(0,0,0);box-shadow:inset 0 1px 2px rgba(0,0,0,.35),0 0 0 1px rgba(120,120,120,.5)"></div>
<div class="t" style="left:555.0px;top:1032.0px;font-size:6.9px;color:#222;transform:scaleX(1.1948);"><span style="font-weight:bold;">Black</span></div>
<div class="a" style="left:586.2px;top:1004px;width:37.4px;height:37px;border-radius:4px 4px 0 0;background:linear-gradient(#a0a0a0 0%,#8e8e8e 45%,#6a6a6a 100%);box-shadow:inset 0 1px 0 #b0b0b0,inset 1px 0 0 rgba(120,120,120,.6),inset -1px 0 0 rgba(90,90,90,.6)"></div>
<div class="a" style="left:590.2px;top:1008px;width:30px;height:17.5px;border-radius:3px;background:rgb(148,30,90);box-shadow:inset 0 1px 2px rgba(0,0,0,.35),0 0 0 1px rgba(120,120,120,.5)"></div>
<div class="t" style="left:601.2px;top:1032.0px;font-size:6.9px;color:#222;transform:scaleX(0.8503);"><span style="font-weight:bold;">2B</span></div>
<div class="a" style="left:625.2px;top:1004px;width:37.4px;height:37px;border-radius:4px 4px 0 0;background:linear-gradient(#a0a0a0 0%,#8e8e8e 45%,#6a6a6a 100%);box-shadow:inset 0 1px 0 #b0b0b0,inset 1px 0 0 rgba(120,120,120,.6),inset -1px 0 0 rgba(90,90,90,.6)"></div>
<div class="a" style="left:629.2px;top:1008px;width:30px;height:17.5px;border-radius:3px;background:rgb(76,46,72);box-shadow:inset 0 1px 2px rgba(0,0,0,.35),0 0 0 1px rgba(120,120,120,.5)"></div>
<div class="t" style="left:640.2px;top:1032.0px;font-size:6.9px;color:#222;transform:scaleX(0.8503);"><span style="font-weight:bold;">2C</span></div>
<div class="a" style="left:664.2px;top:1004px;width:37.4px;height:37px;border-radius:4px 4px 0 0;background:linear-gradient(#a0a0a0 0%,#8e8e8e 45%,#6a6a6a 100%);box-shadow:inset 0 1px 0 #b0b0b0,inset 1px 0 0 rgba(120,120,120,.6),inset -1px 0 0 rgba(90,90,90,.6)"></div>
<div class="a" style="left:668.2px;top:1008px;width:30px;height:17.5px;border-radius:3px;background:rgb(219,212,195);box-shadow:inset 0 1px 2px rgba(0,0,0,.35),0 0 0 1px rgba(120,120,120,.5)"></div>
<div class="t" style="left:679.2px;top:1032.0px;font-size:6.9px;color:#222;transform:scaleX(0.8503);"><span style="font-weight:bold;">2D</span></div>
<div class="a" style="left:703.2px;top:1004px;width:37.4px;height:37px;border-radius:4px 4px 0 0;background:linear-gradient(#a0a0a0 0%,#8e8e8e 45%,#6a6a6a 100%);box-shadow:inset 0 1px 0 #b0b0b0,inset 1px 0 0 rgba(120,120,120,.6),inset -1px 0 0 rgba(90,90,90,.6)"></div>
<div class="a" style="left:707.2px;top:1008px;width:30px;height:17.5px;border-radius:3px;background:rgb(116,66,40);box-shadow:inset 0 1px 2px rgba(0,0,0,.35),0 0 0 1px rgba(120,120,120,.5)"></div>
<div class="t" style="left:718.2px;top:1032.0px;font-size:6.9px;color:#222;transform:scaleX(0.8886);"><span style="font-weight:bold;">2E</span></div>
<div class="a" style="left:742.2px;top:1004px;width:37.4px;height:37px;border-radius:4px 4px 0 0;background:linear-gradient(#a0a0a0 0%,#8e8e8e 45%,#6a6a6a 100%);box-shadow:inset 0 1px 0 #b0b0b0,inset 1px 0 0 rgba(120,120,120,.6),inset -1px 0 0 rgba(90,90,90,.6)"></div>
<div class="a" style="left:746.2px;top:1008px;width:30px;height:17.5px;border-radius:3px;background:rgb(205,141,106);box-shadow:inset 0 1px 2px rgba(0,0,0,.35),0 0 0 1px rgba(120,120,120,.5)"></div>
<div class="t" style="left:757.2px;top:1032.0px;font-size:6.9px;color:#222;transform:scaleX(0.9314);"><span style="font-weight:bold;">2F</span></div>
<div class="a" style="left:781.2px;top:1004px;width:37.4px;height:37px;border-radius:4px 4px 0 0;background:linear-gradient(#a0a0a0 0%,#8e8e8e 45%,#6a6a6a 100%);box-shadow:inset 0 1px 0 #b0b0b0,inset 1px 0 0 rgba(120,120,120,.6),inset -1px 0 0 rgba(90,90,90,.6)"></div>
<div class="a" style="left:785.2px;top:1008px;width:30px;height:17.5px;border-radius:3px;background:rgb(90,112,132);box-shadow:inset 0 1px 2px rgba(0,0,0,.35),0 0 0 1px rgba(120,120,120,.5)"></div>
<div class="t" style="left:796.2px;top:1032.0px;font-size:6.9px;color:#222;transform:scaleX(0.8148);"><span style="font-weight:bold;">2G</span></div>
<div class="a" style="left:820.2px;top:1004px;width:37.4px;height:37px;border-radius:4px 4px 0 0;background:linear-gradient(#a0a0a0 0%,#8e8e8e 45%,#6a6a6a 100%);box-shadow:inset 0 1px 0 #b0b0b0,inset 1px 0 0 rgba(120,120,120,.6),inset -1px 0 0 rgba(90,90,90,.6)"></div>
<div class="a" style="left:824.2px;top:1008px;width:30px;height:17.5px;border-radius:3px;background:rgb(86,101,32);box-shadow:inset 0 1px 2px rgba(0,0,0,.35),0 0 0 1px rgba(120,120,120,.5)"></div>
<div class="t" style="left:835.2px;top:1032.0px;font-size:6.9px;color:#222;transform:scaleX(0.8503);"><span style="font-weight:bold;">2H</span></div>
<div class="a" style="left:859.2px;top:1004px;width:37.4px;height:37px;border-radius:4px 4px 0 0;background:linear-gradient(#a0a0a0 0%,#8e8e8e 45%,#6a6a6a 100%);box-shadow:inset 0 1px 0 #b0b0b0,inset 1px 0 0 rgba(120,120,120,.6),inset -1px 0 0 rgba(90,90,90,.6)"></div>
<div class="a" style="left:863.2px;top:1008px;width:30px;height:17.5px;border-radius:3px;background:rgb(130,120,150);box-shadow:inset 0 1px 2px rgba(0,0,0,.35),0 0 0 1px rgba(120,120,120,.5)"></div>
<div class="t" style="left:874.2px;top:1032.0px;font-size:6.9px;color:#222;transform:scaleX(1.3033);"><span style="font-weight:bold;">2I</span></div>
<div class="a" style="left:898.2px;top:1004px;width:37.4px;height:37px;border-radius:4px 4px 0 0;background:linear-gradient(#a0a0a0 0%,#8e8e8e 45%,#6a6a6a 100%);box-shadow:inset 0 1px 0 #b0b0b0,inset 1px 0 0 rgba(120,120,120,.6),inset -1px 0 0 rgba(90,90,90,.6)"></div>
<div class="a" style="left:902.2px;top:1008px;width:30px;height:17.5px;border-radius:3px;background:rgb(110,186,146);box-shadow:inset 0 1px 2px rgba(0,0,0,.35),0 0 0 1px rgba(120,120,120,.5)"></div>
<div class="t" style="left:913.2px;top:1032.0px;font-size:6.9px;color:#222;transform:scaleX(0.9772);"><span style="font-weight:bold;">2J</span></div>
<div class="a" style="left:937.2px;top:1004px;width:37.4px;height:37px;border-radius:4px 4px 0 0;background:linear-gradient(#a0a0a0 0%,#8e8e8e 45%,#6a6a6a 100%);box-shadow:inset 0 1px 0 #b0b0b0,inset 1px 0 0 rgba(120,120,120,.6),inset -1px 0 0 rgba(90,90,90,.6)"></div>
<div class="a" style="left:941.2px;top:1008px;width:30px;height:17.5px;border-radius:3px;background:rgb(255,200,152);box-shadow:inset 0 1px 2px rgba(0,0,0,.35),0 0 0 1px rgba(120,120,120,.5)"></div>
<div class="t" style="left:952.2px;top:1032.0px;font-size:6.9px;color:#222;transform:scaleX(0.8503);"><span style="font-weight:bold;">2K</span></div>
<div class="a" style="left:976.2px;top:1004px;width:37.4px;height:37px;border-radius:4px 4px 0 0;background:linear-gradient(#a0a0a0 0%,#8e8e8e 45%,#6a6a6a 100%);box-shadow:inset 0 1px 0 #b0b0b0,inset 1px 0 0 rgba(120,120,120,.6),inset -1px 0 0 rgba(90,90,90,.6)"></div>
<div class="a" style="left:980.2px;top:1008px;width:30px;height:17.5px;border-radius:3px;background:rgb(100,25,40);box-shadow:inset 0 1px 2px rgba(0,0,0,.35),0 0 0 1px rgba(120,120,120,.5)"></div>
<div class="t" style="left:991.2px;top:1032.0px;font-size:6.9px;color:#222;transform:scaleX(0.9314);"><span style="font-weight:bold;">2L</span></div>
<div class="a" style="left:1015.2px;top:1004px;width:37.4px;height:37px;border-radius:4px 4px 0 0;background:linear-gradient(#a0a0a0 0%,#8e8e8e 45%,#6a6a6a 100%);box-shadow:inset 0 1px 0 #b0b0b0,inset 1px 0 0 rgba(120,120,120,.6),inset -1px 0 0 rgba(90,90,90,.6)"></div>
<div class="a" style="left:1019.2px;top:1008px;width:30px;height:17.5px;border-radius:3px;background:rgb(195,30,75);box-shadow:inset 0 1px 2px rgba(0,0,0,.35),0 0 0 1px rgba(120,120,120,.5)"></div>
<div class="t" style="left:1030.2px;top:1032.0px;font-size:6.9px;color:#222;transform:scaleX(0.7824);"><span style="font-weight:bold;">2M</span></div>
<div class="a" style="left:1054.2px;top:1004px;width:37.4px;height:37px;border-radius:4px 4px 0 0;background:linear-gradient(#a0a0a0 0%,#8e8e8e 45%,#6a6a6a 100%);box-shadow:inset 0 1px 0 #b0b0b0,inset 1px 0 0 rgba(120,120,120,.6),inset -1px 0 0 rgba(90,90,90,.6)"></div>
<div class="a" style="left:1058.2px;top:1008px;width:30px;height:17.5px;border-radius:3px;background:rgb(190,125,160);box-shadow:inset 0 1px 2px rgba(0,0,0,.35),0 0 0 1px rgba(120,120,120,.5)"></div>
<div class="t" style="left:1069.2px;top:1032.0px;font-size:6.9px;color:#222;transform:scaleX(0.8503);"><span style="font-weight:bold;">3B</span></div>
<div class="a" style="left:1093.2px;top:1004px;width:37.4px;height:37px;border-radius:4px 4px 0 0;background:linear-gradient(#a0a0a0 0%,#8e8e8e 45%,#6a6a6a 100%);box-shadow:inset 0 1px 0 #b0b0b0,inset 1px 0 0 rgba(120,120,120,.6),inset -1px 0 0 rgba(90,90,90,.6)"></div>
<div class="a" style="left:1097.2px;top:1008px;width:30px;height:17.5px;border-radius:3px;background:rgb(110,85,140);box-shadow:inset 0 1px 2px rgba(0,0,0,.35),0 0 0 1px rgba(120,120,120,.5)"></div>
<div class="t" style="left:1108.2px;top:1032.0px;font-size:6.9px;color:#222;transform:scaleX(0.8503);"><span style="font-weight:bold;">3C</span></div>
<div class="a" style="left:1132.2px;top:1004px;width:37.4px;height:37px;border-radius:4px 4px 0 0;background:linear-gradient(#a0a0a0 0%,#8e8e8e 45%,#6a6a6a 100%);box-shadow:inset 0 1px 0 #b0b0b0,inset 1px 0 0 rgba(120,120,120,.6),inset -1px 0 0 rgba(90,90,90,.6)"></div>
<div class="a" style="left:1136.2px;top:1008px;width:30px;height:17.5px;border-radius:3px;background:rgb(252,200,185);box-shadow:inset 0 1px 2px rgba(0,0,0,.35),0 0 0 1px rgba(120,120,120,.5)"></div>
<div class="t" style="left:1147.2px;top:1032.0px;font-size:6.9px;color:#222;transform:scaleX(0.8503);"><span style="font-weight:bold;">3D</span></div>
<div class="a" style="left:1171.2px;top:1004px;width:37.4px;height:37px;border-radius:4px 4px 0 0;background:linear-gradient(#a0a0a0 0%,#8e8e8e 45%,#6a6a6a 100%);box-shadow:inset 0 1px 0 #b0b0b0,inset 1px 0 0 rgba(120,120,120,.6),inset -1px 0 0 rgba(90,90,90,.6)"></div>
<div class="a" style="left:1175.2px;top:1008px;width:30px;height:17.5px;border-radius:3px;background:rgb(235,110,5);box-shadow:inset 0 1px 2px rgba(0,0,0,.35),0 0 0 1px rgba(120,120,120,.5)"></div>
<div class="t" style="left:1186.2px;top:1032.0px;font-size:6.9px;color:#222;transform:scaleX(0.8886);"><span style="font-weight:bold;">3E</span></div>
<div class="a" style="left:1210.2px;top:1004px;width:37.4px;height:37px;border-radius:4px 4px 0 0;background:linear-gradient(#a0a0a0 0%,#8e8e8e 45%,#6a6a6a 100%);box-shadow:inset 0 1px 0 #b0b0b0,inset 1px 0 0 rgba(120,120,120,.6),inset -1px 0 0 rgba(90,90,90,.6)"></div>
<div class="a" style="left:1214.2px;top:1008px;width:30px;height:17.5px;border-radius:3px;background:rgb(60,75,155);box-shadow:inset 0 1px 2px rgba(0,0,0,.35),0 0 0 1px rgba(120,120,120,.5)"></div>
<div class="t" style="left:1225.2px;top:1032.0px;font-size:6.9px;color:#222;transform:scaleX(0.9314);"><span style="font-weight:bold;">3F</span></div>
<div class="a" style="left:1249.2px;top:1004px;width:37.4px;height:37px;border-radius:4px 4px 0 0;background:linear-gradient(#a0a0a0 0%,#8e8e8e 45%,#6a6a6a 100%);box-shadow:inset 0 1px 0 #b0b0b0,inset 1px 0 0 rgba(120,120,120,.6),inset -1px 0 0 rgba(90,90,90,.6)"></div>
<div class="a" style="left:1253.2px;top:1008px;width:30px;height:17.5px;border-radius:3px;background:rgb(200,60,70);box-shadow:inset 0 1px 2px rgba(0,0,0,.35),0 0 0 1px rgba(120,120,120,.5)"></div>
<div class="t" style="left:1264.2px;top:1032.0px;font-size:6.9px;color:#222;transform:scaleX(0.8148);"><span style="font-weight:bold;">3G</span></div>
<div class="a" style="left:1288.2px;top:1004px;width:37.4px;height:37px;border-radius:4px 4px 0 0;background:linear-gradient(#a0a0a0 0%,#8e8e8e 45%,#6a6a6a 100%);box-shadow:inset 0 1px 0 #b0b0b0,inset 1px 0 0 rgba(120,120,120,.6),inset -1px 0 0 rgba(90,90,90,.6)"></div>
<div class="a" style="left:1292.2px;top:1008px;width:30px;height:17.5px;border-radius:3px;background:rgb(85,40,90);box-shadow:inset 0 1px 2px rgba(0,0,0,.35),0 0 0 1px rgba(120,120,120,.5)"></div>
<div class="t" style="left:1303.2px;top:1032.0px;font-size:6.9px;color:#222;transform:scaleX(0.8503);"><span style="font-weight:bold;">3H</span></div>
<div class="a" style="left:1327.2px;top:1004px;width:37.4px;height:37px;border-radius:4px 4px 0 0;background:linear-gradient(#a0a0a0 0%,#8e8e8e 45%,#6a6a6a 100%);box-shadow:inset 0 1px 0 #b0b0b0,inset 1px 0 0 rgba(120,120,120,.6),inset -1px 0 0 rgba(90,90,90,.6)"></div>
<div class="a" style="left:1331.2px;top:1008px;width:30px;height:17.5px;border-radius:3px;background:rgb(170,185,10);box-shadow:inset 0 1px 2px rgba(0,0,0,.35),0 0 0 1px rgba(120,120,120,.5)"></div>
<div class="t" style="left:1342.2px;top:1032.0px;font-size:6.9px;color:#222;transform:scaleX(1.3033);"><span style="font-weight:bold;">3I</span></div>
<div class="a" style="left:1366.2px;top:1004px;width:37.4px;height:37px;border-radius:4px 4px 0 0;background:linear-gradient(#a0a0a0 0%,#8e8e8e 45%,#6a6a6a 100%);box-shadow:inset 0 1px 0 #b0b0b0,inset 1px 0 0 rgba(120,120,120,.6),inset -1px 0 0 rgba(90,90,90,.6)"></div>
<div class="a" style="left:1370.2px;top:1008px;width:30px;height:17.5px;border-radius:3px;background:rgb(240,150,0);box-shadow:inset 0 1px 2px rgba(0,0,0,.35),0 0 0 1px rgba(120,120,120,.5)"></div>
<div class="t" style="left:1381.2px;top:1032.0px;font-size:6.9px;color:#222;transform:scaleX(0.9772);"><span style="font-weight:bold;">3J</span></div>
<div class="a" style="left:1405.2px;top:1004px;width:37.4px;height:37px;border-radius:4px 4px 0 0;background:linear-gradient(#a0a0a0 0%,#8e8e8e 45%,#6a6a6a 100%);box-shadow:inset 0 1px 0 #b0b0b0,inset 1px 0 0 rgba(120,120,120,.6),inset -1px 0 0 rgba(90,90,90,.6)"></div>
<div class="a" style="left:1409.2px;top:1008px;width:30px;height:17.5px;border-radius:3px;background:rgb(215,235,185);box-shadow:inset 0 1px 2px rgba(0,0,0,.35),0 0 0 1px rgba(120,120,120,.5)"></div>
<div class="t" style="left:1420.2px;top:1032.0px;font-size:6.9px;color:#222;transform:scaleX(0.8503);"><span style="font-weight:bold;">3K</span></div>
<div class="a" style="left:1444.2px;top:1004px;width:37.4px;height:37px;border-radius:4px 4px 0 0;background:linear-gradient(#a0a0a0 0%,#8e8e8e 45%,#6a6a6a 100%);box-shadow:inset 0 1px 0 #b0b0b0,inset 1px 0 0 rgba(120,120,120,.6),inset -1px 0 0 rgba(90,90,90,.6)"></div>
<div class="a" style="left:1448.2px;top:1008px;width:30px;height:17.5px;border-radius:3px;background:rgb(200,0,25);box-shadow:inset 0 1px 2px rgba(0,0,0,.35),0 0 0 1px rgba(120,120,120,.5)"></div>
<div class="t" style="left:1459.2px;top:1032.0px;font-size:6.9px;color:#222;transform:scaleX(0.9314);"><span style="font-weight:bold;">3L</span></div>
<div class="a" style="left:1483.2px;top:1004px;width:37.4px;height:37px;border-radius:4px 4px 0 0;background:linear-gradient(#a0a0a0 0%,#8e8e8e 45%,#6a6a6a 100%);box-shadow:inset 0 1px 0 #b0b0b0,inset 1px 0 0 rgba(120,120,120,.6),inset -1px 0 0 rgba(90,90,90,.6)"></div>
<div class="a" style="left:1487.2px;top:1008px;width:30px;height:17.5px;border-radius:3px;background:rgb(95,35,55);box-shadow:inset 0 1px 2px rgba(0,0,0,.35),0 0 0 1px rgba(120,120,120,.5)"></div>
<div class="t" style="left:1498.2px;top:1032.0px;font-size:6.9px;color:#222;transform:scaleX(0.7824);"><span style="font-weight:bold;">3M</span></div>
<div class="a" style="left:1522.2px;top:1004px;width:37.4px;height:37px;border-radius:4px 4px 0 0;background:linear-gradient(#a0a0a0 0%,#8e8e8e 45%,#6a6a6a 100%);box-shadow:inset 0 1px 0 #b0b0b0,inset 1px 0 0 rgba(120,120,120,.6),inset -1px 0 0 rgba(90,90,90,.6)"></div>
<div class="a" style="left:1526.2px;top:1008px;width:30px;height:17.5px;border-radius:3px;background:rgb(120,35,120);box-shadow:inset 0 1px 2px rgba(0,0,0,.35),0 0 0 1px rgba(120,120,120,.5)"></div>
<div class="t" style="left:1537.2px;top:1032.0px;font-size:6.9px;color:#222;transform:scaleX(0.8503);"><span style="font-weight:bold;">4B</span></div>
<div class="a" style="left:1561.2px;top:1004px;width:37.4px;height:37px;border-radius:4px 4px 0 0;background:linear-gradient(#a0a0a0 0%,#8e8e8e 45%,#6a6a6a 100%);box-shadow:inset 0 1px 0 #b0b0b0,inset 1px 0 0 rgba(120,120,120,.6),inset -1px 0 0 rgba(90,90,90,.6)"></div>
<div class="a" style="left:1565.2px;top:1008px;width:30px;height:17.5px;border-radius:3px;background:rgb(0,60,100);box-shadow:inset 0 1px 2px rgba(0,0,0,.35),0 0 0 1px rgba(120,120,120,.5)"></div>
<div class="t" style="left:1576.2px;top:1032.0px;font-size:6.9px;color:#222;transform:scaleX(0.8503);"><span style="font-weight:bold;">4C</span></div>
<div class="a" style="left:1600.2px;top:1004px;width:37.4px;height:37px;border-radius:4px 4px 0 0;background:linear-gradient(#a0a0a0 0%,#8e8e8e 45%,#6a6a6a 100%);box-shadow:inset 0 1px 0 #b0b0b0,inset 1px 0 0 rgba(120,120,120,.6),inset -1px 0 0 rgba(90,90,90,.6)"></div>
<div class="a" style="left:1604.2px;top:1008px;width:30px;height:17.5px;border-radius:3px;background:rgb(190,225,190);box-shadow:inset 0 1px 2px rgba(0,0,0,.35),0 0 0 1px rgba(120,120,120,.5)"></div>
<div class="t" style="left:1615.2px;top:1032.0px;font-size:6.9px;color:#222;transform:scaleX(0.8503);"><span style="font-weight:bold;">4D</span></div>
<div class="a" style="left:1639.2px;top:1004px;width:37.4px;height:37px;border-radius:4px 4px 0 0;background:linear-gradient(#a0a0a0 0%,#8e8e8e 45%,#6a6a6a 100%);box-shadow:inset 0 1px 0 #b0b0b0,inset 1px 0 0 rgba(120,120,120,.6),inset -1px 0 0 rgba(90,90,90,.6)"></div>
<div class="a" style="left:1643.2px;top:1008px;width:30px;height:17.5px;border-radius:3px;background:rgb(20,40,140);box-shadow:inset 0 1px 2px rgba(0,0,0,.35),0 0 0 1px rgba(120,120,120,.5)"></div>
<div class="t" style="left:1654.2px;top:1032.0px;font-size:6.9px;color:#222;transform:scaleX(0.8886);"><span style="font-weight:bold;">4E</span></div>
<div class="a" style="left:0;top:1041px;width:1678px;height:9px;background:#5a5a5a"></div>
<div class="a" style="left:0;top:1041px;width:9px;height:9px;border-radius:2px;background:#8a8a8a"></div>
<div class="a" style="left:2.5px;top:1042.5px;border:3px solid transparent;border-right:4px solid #333;border-left:none"></div>
<div class="a" style="left:11px;top:1042px;width:697px;height:8px;border-radius:4px;background:#454545"></div>
<div class="a" style="left:1668px;top:1041px;width:9px;height:9px;border-radius:2px;background:#8a8a8a"></div>
<div class="a" style="left:1671.5px;top:1042.5px;border:3px solid transparent;border-left:4px solid #333;border-right:none"></div>
<div class="a" style="left:1678px;top:1004px;width:242px;height:46px;background:#3c3c3c"></div>
<div class="a" style="left:1678px;top:1004px;width:36px;height:13px;background:linear-gradient(#9a9a9a,#7a7a7a)"></div>
<div class="a" style="left:1690px;top:1005px;width:12px;height:11px;border-radius:50%;background:radial-gradient(circle at 50% 70%,#bbb,#8a8a8a)"></div>
<div class="a" style="left:1692.5px;top:1007px;border:3.5px solid transparent;border-bottom:4px solid #333;border-top:none"></div>
<div class="a" style="left:1678px;top:1018px;width:36px;height:32px;background:linear-gradient(#8a8a8a,#6a6a6a)"></div>
<div class="a" style="left:1684px;top:1022px;width:23px;height:23px;border-radius:4px;border:1.5px solid #222;background:linear-gradient(#c8c8c8 0%,#aaa 50%,#888 51%,#999 100%)"></div>
<div class="a" style="left:1691px;top:1029px;width:10px;height:10px;background:#000"></div>
<div class="a" style="left:1715.2px;top:1004px;width:33.3px;height:22px;background:linear-gradient(#a4a4a4 0%,#8c8c8c 50%,#767676 100%)"></div>
<div class="a" style="left:1725.2px;top:1007.5px;width:14px;height:14px;border-radius:50%;background:radial-gradient(circle at 50% 75%,#c4c4c4,#9a9a9a)"></div>
<div class="a" style="left:1749.1px;top:1004px;width:33.8px;height:22px;background:linear-gradient(#3e3e3e,#2c2c2c)"></div>
<div class="a" style="left:1759.3px;top:1007.5px;width:14px;height:14px;border-radius:50%;background:radial-gradient(circle at 50% 60%,#3a3a3a,#303030)"></div>
<div class="a" style="left:1783.5px;top:1004px;width:32.9px;height:22px;background:linear-gradient(#a4a4a4 0%,#8c8c8c 50%,#767676 100%)"></div>
<div class="a" style="left:1793.2px;top:1007.5px;width:14px;height:14px;border-radius:50%;background:radial-gradient(circle at 50% 75%,#c4c4c4,#9a9a9a)"></div>
<div class="a" style="left:1817.0px;top:1004px;width:33.1px;height:22px;background:linear-gradient(#3e3e3e,#2c2c2c)"></div>
<div class="a" style="left:1826.8px;top:1007.5px;width:14px;height:14px;border-radius:50%;background:radial-gradient(circle at 50% 60%,#3a3a3a,#303030)"></div>
<div class="a" style="left:1850.7px;top:1004px;width:33.5px;height:22px;background:linear-gradient(#3e3e3e,#2c2c2c)"></div>
<div class="a" style="left:1860.8px;top:1007.5px;width:14px;height:14px;border-radius:50%;background:radial-gradient(circle at 50% 60%,#3a3a3a,#303030)"></div>
<div class="a" style="left:1884.8px;top:1004px;width:34.6px;height:22px;background:linear-gradient(#a4a4a4 0%,#8c8c8c 50%,#767676 100%)"></div>
<div class="a" style="left:1728.7px;top:1011.5px;width:6px;height:6px;background:#333"></div>
<div class="a" style="left:1764px;top:1010.5px;border:4px solid transparent;border-left:6.5px solid #1e1e1e;border-right:none"></div>
<div class="t" style="left:1795.0px;top:1011.0px;font-size:8.5px;color:#333;"><span style="font-weight:bold;">[–]</span></div>
<div class="t" style="left:1829.5px;top:1008.0px;font-size:12px;color:#1e1e1e;"><span style="font-weight:bold;">∞</span></div>
<svg class="a" style="left:1861.7px;top:1008.5px" width="12" height="12" viewBox="-6 -6 12 12"><path d="M-4 -1a4.2 4.2 0 0 1 7.500-1.500M4 1a4.2 4.2 0 0 1-7.5 1.5" fill="none" stroke="#1e1e1e" stroke-width="1.8"/><path d="M4.800-5v3.500h-3.500zM-4.8 5v-3.500h3.500z" fill="#1e1e1e"/></svg>
<div class="a" style="left:1888px;top:1007.5px;width:28px;height:14px;border-radius:7px;background:linear-gradient(#8e8e8e,#c0c0c0)"></div>
<div class="t" style="left:1891.3px;top:1012.0px;font-size:8.3px;color:#333;"><span style="font-weight:bold;">SAVE</span></div>
<div class="a" style="left:1715.2px;top:1027px;width:204px;height:22px;border-radius:3px;background:linear-gradient(#a6a6a6 0%,#8e8e8e 45%,#727272 100%)"></div>
<div class="a" style="left:1730.4px;top:1030.7px;width:15px;height:15px;border-radius:50%;background:radial-gradient(circle at 50% 70%,#c8c8c8,#9c9c9c)"></div>
<div class="t" style="left:1734.7px;top:1033.0px;font-size:11.5px;color:#3a3a3a;"><span style="font-weight:bold;">«</span></div>
<div class="a" style="left:1890.4px;top:1030.7px;width:15px;height:15px;border-radius:50%;background:radial-gradient(circle at 50% 70%,#c8c8c8,#9c9c9c)"></div>
<div class="t" style="left:1894.7px;top:1033.0px;font-size:11.5px;color:#3a3a3a;"><span style="font-weight:bold;">»</span></div>
<div class="t" style="left:1757.8px;top:1031.0px;font-size:16.6px;color:#3a3a3a;transform:scaleX(0.9474);text-shadow:0 1px 0 rgba(255,255,255,.3);"><span style="font-weight:bold;">Back</span></div>
<div class="t" style="left:1838.0px;top:1031.0px;font-size:16.6px;color:#3a3a3a;transform:scaleX(1.0756);text-shadow:0 1px 0 rgba(255,255,255,.3);"><span style="font-weight:bold;">Next</span></div>
</body></html>
